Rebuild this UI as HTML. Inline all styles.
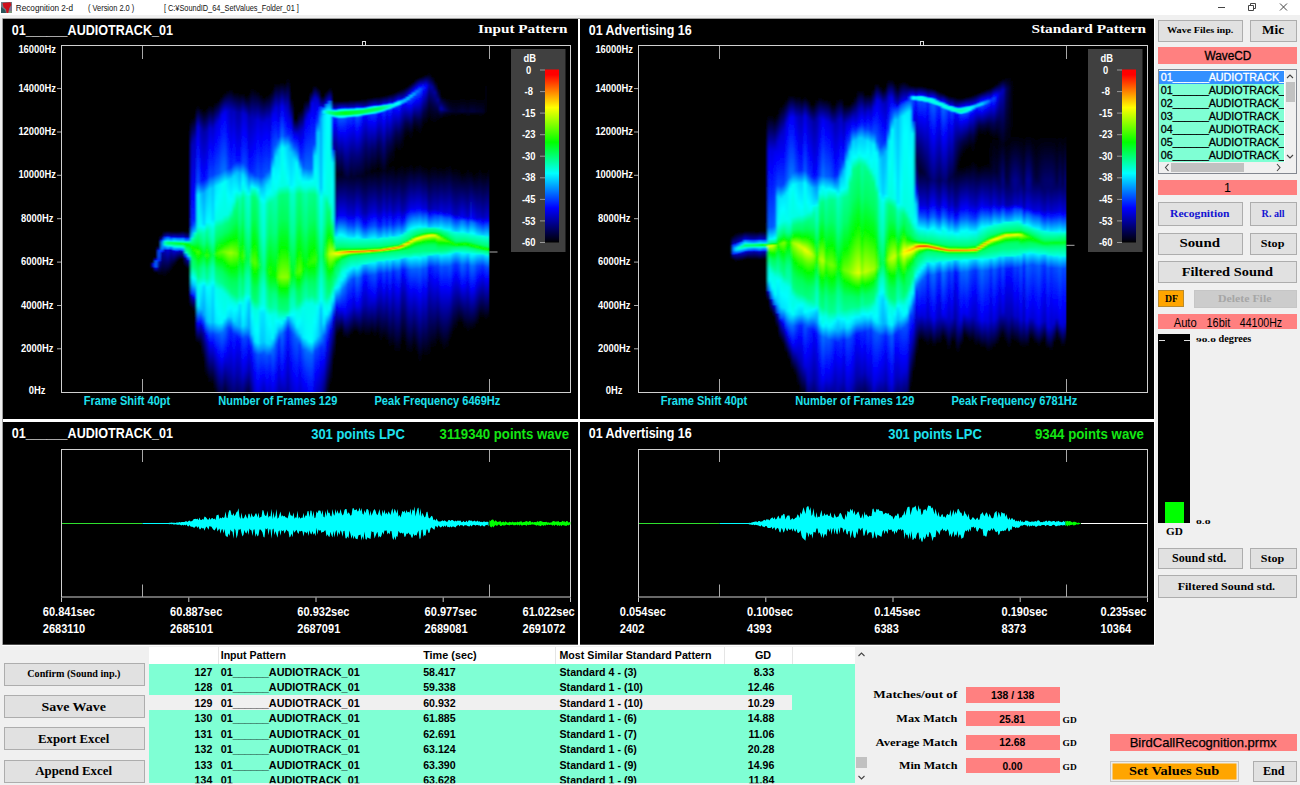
<!DOCTYPE html>
<html><head><meta charset="utf-8"><title>Recognition 2-d</title>
<style>
*{box-sizing:border-box;margin:0;padding:0}
html,body{width:1300px;height:785px;overflow:hidden;background:#f0f0f0}
body{position:relative;font-family:"Liberation Sans",sans-serif;color:#000}
div,span,svg{position:absolute}
.b{background:#e1e1e1;border:1px solid #adadad}
.p{background:#ff8080}
svg text{white-space:pre}
.tb{font-family:"Liberation Serif",serif;font-weight:bold}
.sb{font-weight:bold}
</style></head><body>
<div style="left:0;top:0;width:1300px;height:15px;background:#fff"></div>
<svg style="left:1px;top:2px" width="11" height="11" viewBox="0 0 11 11"><rect width="11" height="11" fill="#6e7f86"/><path d="M0 5L4 8L5 11H0Z" fill="#2b5559"/><path d="M11 3V11H7L8 6Z" fill="#7d7391"/><path d="M7 11H11V9L8 8.500Z" fill="#7f9a80"/><path d="M1.500 1L9.500 .3L10.300 3L8.300 6L7.200 11H5.600L5 7.500L2.500 5Z" fill="#cf0f1a"/></svg>
<svg style="left:1210px;top:0" width="90" height="15" viewBox="0 0 90 15" fill="none" stroke="#444" stroke-width="1"><path d="M8 7.5H15"/><path d="M38.5 5.5h5v5h-5z M40.5 5.5v-2h5v5h-2"/><path d="M70 3.5l7 7M77 3.5l-7 7"/></svg>
<svg style="left:0;top:0" width="1300" height="785" viewBox="0 0 1300 785" font-family="Liberation Sans,sans-serif">
<defs><linearGradient id="jet" x1="0" y1="0" x2="0" y2="1"><stop offset="0" stop-color="#f00"/><stop offset="0.03" stop-color="#f00"/><stop offset="0.22" stop-color="#ff0"/><stop offset="0.42" stop-color="#0f0"/><stop offset="0.6" stop-color="#0ff"/><stop offset="0.8" stop-color="#00f"/><stop offset="1" stop-color="#000"/></linearGradient>
<filter id="hb" x="-5%" y="-5%" width="110%" height="110%"><feGaussianBlur stdDeviation="1.1 0.4"/></filter><linearGradient id="a3" x1="0" y1="0" x2="0" y2="1"><stop offset="0.000" stop-color="#000"/><stop offset="0.624" stop-color="#000"/><stop offset="0.627" stop-color="#0000a1"/><stop offset="0.630" stop-color="#0000e0"/><stop offset="0.636" stop-color="#0000e0"/><stop offset="0.639" stop-color="#00009d"/><stop offset="0.642" stop-color="#000035"/><stop offset="0.645" stop-color="#000"/><stop offset="1.000" stop-color="#000"/></linearGradient><linearGradient id="a4" x1="0" y1="0" x2="0" y2="1"><stop offset="0.000" stop-color="#000"/><stop offset="0.607" stop-color="#000"/><stop offset="0.610" stop-color="#000016"/><stop offset="0.618" stop-color="#0000e4"/><stop offset="0.621" stop-color="#005eff"/><stop offset="0.639" stop-color="#005eff"/><stop offset="0.642" stop-color="#00d"/><stop offset="0.653" stop-color="#000021"/><stop offset="0.656" stop-color="#000"/><stop offset="1.000" stop-color="#000"/></linearGradient><linearGradient id="a5" x1="0" y1="0" x2="0" y2="1"><stop offset="0.000" stop-color="#000"/><stop offset="0.575" stop-color="#000"/><stop offset="0.578" stop-color="#000015"/><stop offset="0.587" stop-color="#0000a2"/><stop offset="0.590" stop-color="#0031ff"/><stop offset="0.595" stop-color="#004aff"/><stop offset="0.607" stop-color="#004aff"/><stop offset="0.621" stop-color="#002bff"/><stop offset="0.624" stop-color="#0000af"/><stop offset="0.662" stop-color="#000002"/><stop offset="1.000" stop-color="#000"/></linearGradient><linearGradient id="a6" x1="0" y1="0" x2="0" y2="1"><stop offset="0.000" stop-color="#000"/><stop offset="0.543" stop-color="#000"/><stop offset="0.546" stop-color="#000009"/><stop offset="0.558" stop-color="#000097"/><stop offset="0.561" stop-color="#0023ff"/><stop offset="0.566" stop-color="#006fff"/><stop offset="0.569" stop-color="#0082ff"/><stop offset="0.584" stop-color="#0082ff"/><stop offset="0.587" stop-color="#0078ff"/><stop offset="0.595" stop-color="#001bff"/><stop offset="0.598" stop-color="#00009d"/><stop offset="0.665" stop-color="#000"/><stop offset="1.000" stop-color="#000"/></linearGradient><linearGradient id="a7" x1="0" y1="0" x2="0" y2="1"><stop offset="0.000" stop-color="#000"/><stop offset="0.532" stop-color="#000"/><stop offset="0.535" stop-color="#000002"/><stop offset="0.549" stop-color="#000098"/><stop offset="0.552" stop-color="#0024ff"/><stop offset="0.561" stop-color="#00a3ff"/><stop offset="0.564" stop-color="#00f2ff"/><stop offset="0.566" stop-color="#00ffb5"/><stop offset="0.572" stop-color="#00ffb4"/><stop offset="0.575" stop-color="#00ffd2"/><stop offset="0.578" stop-color="#00c0ff"/><stop offset="0.587" stop-color="#04f"/><stop offset="0.590" stop-color="#0000b5"/><stop offset="0.668" stop-color="#000"/><stop offset="1.000" stop-color="#000"/></linearGradient><linearGradient id="a8" x1="0" y1="0" x2="0" y2="1"><stop offset="0.000" stop-color="#000"/><stop offset="0.532" stop-color="#000"/><stop offset="0.535" stop-color="#000009"/><stop offset="0.549" stop-color="#0000b9"/><stop offset="0.552" stop-color="#0053ff"/><stop offset="0.561" stop-color="#0cf"/><stop offset="0.564" stop-color="#00ffe5"/><stop offset="0.566" stop-color="#00ff90"/><stop offset="0.569" stop-color="#00ff73"/><stop offset="0.572" stop-color="#00ff7e"/><stop offset="0.575" stop-color="#00ffb2"/><stop offset="0.578" stop-color="#00eaff"/><stop offset="0.587" stop-color="#0071ff"/><stop offset="0.590" stop-color="#0000d7"/><stop offset="0.659" stop-color="#000002"/><stop offset="1.000" stop-color="#000"/></linearGradient><linearGradient id="a9" x1="0" y1="0" x2="0" y2="1"><stop offset="0.000" stop-color="#000"/><stop offset="0.535" stop-color="#000"/><stop offset="0.549" stop-color="#000093"/><stop offset="0.552" stop-color="#0000fa"/><stop offset="0.555" stop-color="#0047ff"/><stop offset="0.564" stop-color="#00d6ff"/><stop offset="0.566" stop-color="#0f9"/><stop offset="0.569" stop-color="#00ff5b"/><stop offset="0.572" stop-color="#00ff72"/><stop offset="0.578" stop-color="#00ffe0"/><stop offset="0.581" stop-color="#009fff"/><stop offset="0.587" stop-color="#0043ff"/><stop offset="0.590" stop-color="#0000b0"/><stop offset="0.650" stop-color="#000"/><stop offset="1.000" stop-color="#000"/></linearGradient><linearGradient id="a10" x1="0" y1="0" x2="0" y2="1"><stop offset="0.000" stop-color="#000"/><stop offset="0.535" stop-color="#000"/><stop offset="0.538" stop-color="#000017"/><stop offset="0.552" stop-color="#0000d7"/><stop offset="0.555" stop-color="#0079ff"/><stop offset="0.564" stop-color="#00f4ff"/><stop offset="0.566" stop-color="#00ffa0"/><stop offset="0.569" stop-color="#00ff5c"/><stop offset="0.572" stop-color="#00ff58"/><stop offset="0.578" stop-color="#00ffc5"/><stop offset="0.581" stop-color="#00e8ff"/><stop offset="0.590" stop-color="#006cff"/><stop offset="0.592" stop-color="#0000d6"/><stop offset="0.636" stop-color="#000"/><stop offset="1.000" stop-color="#000"/></linearGradient><linearGradient id="a11" x1="0" y1="0" x2="0" y2="1"><stop offset="0.000" stop-color="#000"/><stop offset="0.535" stop-color="#000"/><stop offset="0.538" stop-color="#000016"/><stop offset="0.552" stop-color="#0000c4"/><stop offset="0.555" stop-color="#0061ff"/><stop offset="0.564" stop-color="#00e1ff"/><stop offset="0.566" stop-color="#00ffa6"/><stop offset="0.569" stop-color="#00ff63"/><stop offset="0.572" stop-color="#00ff35"/><stop offset="0.575" stop-color="#00ff86"/><stop offset="0.581" stop-color="#00ffe3"/><stop offset="0.584" stop-color="#00bdff"/><stop offset="0.592" stop-color="#003fff"/><stop offset="0.595" stop-color="#0000b8"/><stop offset="0.624" stop-color="#000"/><stop offset="1.000" stop-color="#000"/></linearGradient><linearGradient id="a12" x1="0" y1="0" x2="0" y2="1"><stop offset="0.000" stop-color="#000"/><stop offset="0.535" stop-color="#000"/><stop offset="0.552" stop-color="#0000bf"/><stop offset="0.555" stop-color="#0059ff"/><stop offset="0.564" stop-color="#00d9ff"/><stop offset="0.566" stop-color="#00ffae"/><stop offset="0.569" stop-color="#00ff6f"/><stop offset="0.572" stop-color="#0f1"/><stop offset="0.575" stop-color="#00ff7e"/><stop offset="0.581" stop-color="#00ffde"/><stop offset="0.584" stop-color="#00b9ff"/><stop offset="0.590" stop-color="#005dff"/><stop offset="0.592" stop-color="#0000c2"/><stop offset="0.616" stop-color="#000008"/><stop offset="0.618" stop-color="#000"/><stop offset="1.000" stop-color="#000"/></linearGradient><linearGradient id="a13" x1="0" y1="0" x2="0" y2="1"><stop offset="0.000" stop-color="#000"/><stop offset="0.532" stop-color="#000"/><stop offset="0.535" stop-color="#00000b"/><stop offset="0.552" stop-color="#0000cd"/><stop offset="0.555" stop-color="#0069ff"/><stop offset="0.564" stop-color="#00e1ff"/><stop offset="0.566" stop-color="#00ffb5"/><stop offset="0.569" stop-color="#00ff78"/><stop offset="0.572" stop-color="#1aff00"/><stop offset="0.575" stop-color="#00ff73"/><stop offset="0.581" stop-color="#00ffd0"/><stop offset="0.584" stop-color="#00d5ff"/><stop offset="0.592" stop-color="#05f"/><stop offset="0.595" stop-color="#0000c0"/><stop offset="0.616" stop-color="#00000c"/><stop offset="0.618" stop-color="#000"/><stop offset="1.000" stop-color="#000"/></linearGradient><linearGradient id="a14" x1="0" y1="0" x2="0" y2="1"><stop offset="0.000" stop-color="#000"/><stop offset="0.535" stop-color="#000"/><stop offset="0.552" stop-color="#000091"/><stop offset="0.555" stop-color="#001aff"/><stop offset="0.564" stop-color="#00a2ff"/><stop offset="0.566" stop-color="#00ffc1"/><stop offset="0.569" stop-color="#00ff7f"/><stop offset="0.572" stop-color="#00ff1c"/><stop offset="0.575" stop-color="#00ff03"/><stop offset="0.584" stop-color="#00ff61"/><stop offset="0.592" stop-color="#00ff96"/><stop offset="0.598" stop-color="#00ffdb"/><stop offset="0.601" stop-color="#09f"/><stop offset="0.610" stop-color="#001bff"/><stop offset="0.613" stop-color="#000096"/><stop offset="0.639" stop-color="#000"/><stop offset="1.000" stop-color="#000"/></linearGradient><linearGradient id="a15" x1="0" y1="0" x2="0" y2="1"><stop offset="0.000" stop-color="#000"/><stop offset="0.535" stop-color="#000"/><stop offset="0.552" stop-color="#0000a1"/><stop offset="0.555" stop-color="#002fff"/><stop offset="0.564" stop-color="#00b3ff"/><stop offset="0.566" stop-color="#00ffc4"/><stop offset="0.572" stop-color="#00ff31"/><stop offset="0.575" stop-color="#00ff04"/><stop offset="0.587" stop-color="#00ff53"/><stop offset="0.601" stop-color="#00ff87"/><stop offset="0.607" stop-color="#00ffd4"/><stop offset="0.610" stop-color="#00b5ff"/><stop offset="0.618" stop-color="#003fff"/><stop offset="0.621" stop-color="#0000af"/><stop offset="0.645" stop-color="#000009"/><stop offset="0.647" stop-color="#000"/><stop offset="1.000" stop-color="#000"/></linearGradient><linearGradient id="a16" x1="0" y1="0" x2="0" y2="1"><stop offset="0.000" stop-color="#000"/><stop offset="0.208" stop-color="#000"/><stop offset="0.286" stop-color="#0000ba"/><stop offset="0.434" stop-color="#0001ff"/><stop offset="0.517" stop-color="#0029ff"/><stop offset="0.552" stop-color="#00d4ff"/><stop offset="0.555" stop-color="#00ffd1"/><stop offset="0.572" stop-color="#00ff5f"/><stop offset="0.581" stop-color="#09ff00"/><stop offset="0.584" stop-color="#1f0"/><stop offset="0.587" stop-color="#04ff00"/><stop offset="0.618" stop-color="#00ff68"/><stop offset="0.636" stop-color="#00ff7f"/><stop offset="0.668" stop-color="#00fffb"/><stop offset="0.685" stop-color="#00caff"/><stop offset="0.717" stop-color="#002dff"/><stop offset="0.720" stop-color="#0002ff"/><stop offset="0.723" stop-color="#0000cb"/><stop offset="0.725" stop-color="#0000af"/><stop offset="0.740" stop-color="#000060"/><stop offset="0.757" stop-color="#000003"/><stop offset="0.760" stop-color="#000"/><stop offset="1.000" stop-color="#000"/></linearGradient><linearGradient id="a17" x1="0" y1="0" x2="0" y2="1"><stop offset="0.000" stop-color="#000"/><stop offset="0.202" stop-color="#000"/><stop offset="0.269" stop-color="#0000b5"/><stop offset="0.434" stop-color="#00f"/><stop offset="0.503" stop-color="#0021ff"/><stop offset="0.538" stop-color="#00cdff"/><stop offset="0.540" stop-color="#00ffd6"/><stop offset="0.561" stop-color="#00ff74"/><stop offset="0.572" stop-color="#00ff4f"/><stop offset="0.584" stop-color="#03ff00"/><stop offset="0.590" stop-color="#2aff00"/><stop offset="0.598" stop-color="#0f0"/><stop offset="0.621" stop-color="#00ff53"/><stop offset="0.642" stop-color="#00ff74"/><stop offset="0.673" stop-color="#00fff5"/><stop offset="0.691" stop-color="#00d2ff"/><stop offset="0.723" stop-color="#002cff"/><stop offset="0.728" stop-color="#0000f4"/><stop offset="0.734" stop-color="#0000b1"/><stop offset="0.769" stop-color="#000"/><stop offset="1.000" stop-color="#000"/></linearGradient><linearGradient id="a18" x1="0" y1="0" x2="0" y2="1"><stop offset="0.000" stop-color="#000"/><stop offset="0.173" stop-color="#000"/><stop offset="0.234" stop-color="#0000dc"/><stop offset="0.283" stop-color="#0002ff"/><stop offset="0.393" stop-color="#0052ff"/><stop offset="0.431" stop-color="#00f6ff"/><stop offset="0.523" stop-color="#00ffe2"/><stop offset="0.549" stop-color="#00ff7b"/><stop offset="0.566" stop-color="#00ff56"/><stop offset="0.584" stop-color="#00ff03"/><stop offset="0.587" stop-color="#0eff00"/><stop offset="0.595" stop-color="#48ff00"/><stop offset="0.613" stop-color="#00ff03"/><stop offset="0.642" stop-color="#00ff5c"/><stop offset="0.665" stop-color="#00ff7b"/><stop offset="0.691" stop-color="#00ffe1"/><stop offset="0.737" stop-color="#00fffe"/><stop offset="0.751" stop-color="#00f3ff"/><stop offset="0.803" stop-color="#0002ff"/><stop offset="0.858" stop-color="#000"/><stop offset="1.000" stop-color="#000"/></linearGradient><linearGradient id="a19" x1="0" y1="0" x2="0" y2="1"><stop offset="0.000" stop-color="#000"/><stop offset="0.179" stop-color="#000001"/><stop offset="0.240" stop-color="#0000af"/><stop offset="0.355" stop-color="#00f"/><stop offset="0.390" stop-color="#0019ff"/><stop offset="0.428" stop-color="#00bdff"/><stop offset="0.520" stop-color="#00fcff"/><stop offset="0.543" stop-color="#00ffa2"/><stop offset="0.572" stop-color="#00ff65"/><stop offset="0.595" stop-color="#02ff00"/><stop offset="0.598" stop-color="#12ff00"/><stop offset="0.604" stop-color="#00ff03"/><stop offset="0.642" stop-color="#00ff7e"/><stop offset="0.668" stop-color="#00ffa3"/><stop offset="0.688" stop-color="#00fff1"/><stop offset="0.691" stop-color="#00fcff"/><stop offset="0.760" stop-color="#00bcff"/><stop offset="0.798" stop-color="#0008ff"/><stop offset="0.801" stop-color="#0000f4"/><stop offset="0.812" stop-color="#0000ad"/><stop offset="0.867" stop-color="#000"/><stop offset="1.000" stop-color="#000"/></linearGradient><linearGradient id="a20" x1="0" y1="0" x2="0" y2="1"><stop offset="0.000" stop-color="#000"/><stop offset="0.188" stop-color="#000"/><stop offset="0.249" stop-color="#0000a4"/><stop offset="0.373" stop-color="#0001ff"/><stop offset="0.387" stop-color="#000dff"/><stop offset="0.425" stop-color="#00a4ff"/><stop offset="0.514" stop-color="#00d4ff"/><stop offset="0.523" stop-color="#00fbff"/><stop offset="0.540" stop-color="#00ffbc"/><stop offset="0.572" stop-color="#00ff87"/><stop offset="0.601" stop-color="#00ff1e"/><stop offset="0.639" stop-color="#00ff93"/><stop offset="0.671" stop-color="#00ffc2"/><stop offset="0.682" stop-color="#00ffe5"/><stop offset="0.685" stop-color="#00fffe"/><stop offset="0.697" stop-color="#00d3ff"/><stop offset="0.777" stop-color="#00a3ff"/><stop offset="0.815" stop-color="#0000fe"/><stop offset="0.832" stop-color="#0000a2"/><stop offset="0.905" stop-color="#000002"/><stop offset="1.000" stop-color="#000"/></linearGradient><linearGradient id="a21" x1="0" y1="0" x2="0" y2="1"><stop offset="0.000" stop-color="#000"/><stop offset="0.179" stop-color="#000"/><stop offset="0.246" stop-color="#0000b1"/><stop offset="0.350" stop-color="#0002ff"/><stop offset="0.382" stop-color="#001bff"/><stop offset="0.419" stop-color="#00c2ff"/><stop offset="0.509" stop-color="#00fcff"/><stop offset="0.535" stop-color="#00ff9b"/><stop offset="0.564" stop-color="#00ff6a"/><stop offset="0.595" stop-color="#09ff00"/><stop offset="0.604" stop-color="#3f0"/><stop offset="0.616" stop-color="#00ff05"/><stop offset="0.645" stop-color="#00ff6c"/><stop offset="0.671" stop-color="#00ff94"/><stop offset="0.694" stop-color="#0fe"/><stop offset="0.697" stop-color="#00feff"/><stop offset="0.795" stop-color="#00c1ff"/><stop offset="0.838" stop-color="#0000fe"/><stop offset="0.861" stop-color="#0000b0"/><stop offset="0.957" stop-color="#000003"/><stop offset="1.000" stop-color="#000"/></linearGradient><linearGradient id="a22" x1="0" y1="0" x2="0" y2="1"><stop offset="0.000" stop-color="#000"/><stop offset="0.171" stop-color="#000001"/><stop offset="0.237" stop-color="#0000d2"/><stop offset="0.289" stop-color="#00f"/><stop offset="0.376" stop-color="#0048ff"/><stop offset="0.413" stop-color="#00d5ff"/><stop offset="0.509" stop-color="#00fffe"/><stop offset="0.532" stop-color="#00ffc0"/><stop offset="0.549" stop-color="#00ffb1"/><stop offset="0.569" stop-color="#00ff8a"/><stop offset="0.604" stop-color="#00ff1d"/><stop offset="0.639" stop-color="#00ff90"/><stop offset="0.671" stop-color="#00ffbf"/><stop offset="0.694" stop-color="#00fffb"/><stop offset="0.798" stop-color="#00d4ff"/><stop offset="0.832" stop-color="#0049ff"/><stop offset="0.858" stop-color="#0002ff"/><stop offset="0.974" stop-color="#000002"/><stop offset="1.000" stop-color="#000"/></linearGradient><linearGradient id="a23" x1="0" y1="0" x2="0" y2="1"><stop offset="0.000" stop-color="#000"/><stop offset="0.173" stop-color="#000"/><stop offset="0.240" stop-color="#0000c9"/><stop offset="0.301" stop-color="#00f"/><stop offset="0.373" stop-color="#003eff"/><stop offset="0.390" stop-color="#0086ff"/><stop offset="0.410" stop-color="#00c0ff"/><stop offset="0.500" stop-color="#00dfff"/><stop offset="0.514" stop-color="#00feff"/><stop offset="0.529" stop-color="#00ffdf"/><stop offset="0.566" stop-color="#00ffb5"/><stop offset="0.604" stop-color="#00ff58"/><stop offset="0.639" stop-color="#00ffb7"/><stop offset="0.673" stop-color="#00ffe2"/><stop offset="0.685" stop-color="#0ff"/><stop offset="0.699" stop-color="#00dfff"/><stop offset="0.798" stop-color="#00bdff"/><stop offset="0.818" stop-color="#0080ff"/><stop offset="0.832" stop-color="#003eff"/><stop offset="0.858" stop-color="#00f"/><stop offset="0.977" stop-color="#000"/><stop offset="1.000" stop-color="#000"/></linearGradient><linearGradient id="a24" x1="0" y1="0" x2="0" y2="1"><stop offset="0.000" stop-color="#000"/><stop offset="0.162" stop-color="#000"/><stop offset="0.228" stop-color="#0000db"/><stop offset="0.272" stop-color="#00f"/><stop offset="0.370" stop-color="#0051ff"/><stop offset="0.405" stop-color="#00e7ff"/><stop offset="0.457" stop-color="#0ff"/><stop offset="0.503" stop-color="#00ffe6"/><stop offset="0.523" stop-color="#00ffa1"/><stop offset="0.561" stop-color="#00ff64"/><stop offset="0.592" stop-color="#06ff00"/><stop offset="0.601" stop-color="#2aff00"/><stop offset="0.613" stop-color="#00ff02"/><stop offset="0.642" stop-color="#00ff65"/><stop offset="0.676" stop-color="#00ff9d"/><stop offset="0.702" stop-color="#0fe"/><stop offset="0.749" stop-color="#00feff"/><stop offset="0.798" stop-color="#00e9ff"/><stop offset="0.835" stop-color="#004eff"/><stop offset="0.876" stop-color="#0003ff"/><stop offset="1.000" stop-color="#00000a"/></linearGradient><linearGradient id="a25" x1="0" y1="0" x2="0" y2="1"><stop offset="0.000" stop-color="#000"/><stop offset="0.156" stop-color="#000"/><stop offset="0.217" stop-color="#0000e2"/><stop offset="0.254" stop-color="#0001ff"/><stop offset="0.367" stop-color="#0059ff"/><stop offset="0.402" stop-color="#00f2ff"/><stop offset="0.431" stop-color="#00fffe"/><stop offset="0.500" stop-color="#00ffe2"/><stop offset="0.523" stop-color="#00ff8e"/><stop offset="0.549" stop-color="#00ff69"/><stop offset="0.584" stop-color="#0aff00"/><stop offset="0.598" stop-color="#4cff00"/><stop offset="0.618" stop-color="#00ff05"/><stop offset="0.650" stop-color="#0f6"/><stop offset="0.682" stop-color="#00ff94"/><stop offset="0.705" stop-color="#00ffe6"/><stop offset="0.775" stop-color="#0ff"/><stop offset="0.801" stop-color="#00f1ff"/><stop offset="0.835" stop-color="#0059ff"/><stop offset="0.893" stop-color="#0001ff"/><stop offset="1.000" stop-color="#000043"/></linearGradient><linearGradient id="a26" x1="0" y1="0" x2="0" y2="1"><stop offset="0.000" stop-color="#000"/><stop offset="0.145" stop-color="#000"/><stop offset="0.199" stop-color="#0000ec"/><stop offset="0.220" stop-color="#00f"/><stop offset="0.364" stop-color="#006fff"/><stop offset="0.399" stop-color="#00fffa"/><stop offset="0.497" stop-color="#00ffe3"/><stop offset="0.520" stop-color="#00ff8d"/><stop offset="0.546" stop-color="#0f6"/><stop offset="0.578" stop-color="#08ff00"/><stop offset="0.595" stop-color="#5bff00"/><stop offset="0.618" stop-color="#00ff01"/><stop offset="0.653" stop-color="#00ff64"/><stop offset="0.685" stop-color="#00ff8d"/><stop offset="0.708" stop-color="#00ffe3"/><stop offset="0.798" stop-color="#00fcff"/><stop offset="0.829" stop-color="#0071ff"/><stop offset="0.905" stop-color="#0001ff"/><stop offset="1.000" stop-color="#000050"/></linearGradient><linearGradient id="a27" x1="0" y1="0" x2="0" y2="1"><stop offset="0.000" stop-color="#000"/><stop offset="0.136" stop-color="#000003"/><stop offset="0.191" stop-color="#0000ed"/><stop offset="0.208" stop-color="#00f"/><stop offset="0.358" stop-color="#0070ff"/><stop offset="0.393" stop-color="#00fff9"/><stop offset="0.439" stop-color="#00ffe6"/><stop offset="0.488" stop-color="#00ffe6"/><stop offset="0.514" stop-color="#00ff87"/><stop offset="0.540" stop-color="#00ff60"/><stop offset="0.572" stop-color="#07ff00"/><stop offset="0.595" stop-color="#73ff00"/><stop offset="0.627" stop-color="#0f0"/><stop offset="0.662" stop-color="#00ff5f"/><stop offset="0.691" stop-color="#00ff81"/><stop offset="0.717" stop-color="#00ffe3"/><stop offset="0.754" stop-color="#00ffe7"/><stop offset="0.786" stop-color="#00fbff"/><stop offset="0.818" stop-color="#006fff"/><stop offset="0.890" stop-color="#0002ff"/><stop offset="1.000" stop-color="#000024"/></linearGradient><linearGradient id="a28" x1="0" y1="0" x2="0" y2="1"><stop offset="0.000" stop-color="#000"/><stop offset="0.127" stop-color="#000"/><stop offset="0.188" stop-color="#0000d0"/><stop offset="0.257" stop-color="#0001ff"/><stop offset="0.355" stop-color="#04f"/><stop offset="0.390" stop-color="#00e8ff"/><stop offset="0.431" stop-color="#00fffe"/><stop offset="0.486" stop-color="#00ffe2"/><stop offset="0.512" stop-color="#00ff7b"/><stop offset="0.538" stop-color="#00ff58"/><stop offset="0.566" stop-color="#01ff00"/><stop offset="0.598" stop-color="#8bff00"/><stop offset="0.636" stop-color="#00ff03"/><stop offset="0.671" stop-color="#00ff5b"/><stop offset="0.699" stop-color="#00ff7b"/><stop offset="0.725" stop-color="#00ffdf"/><stop offset="0.760" stop-color="#00fdff"/><stop offset="0.780" stop-color="#00e7ff"/><stop offset="0.815" stop-color="#04f"/><stop offset="0.873" stop-color="#0002ff"/><stop offset="0.916" stop-color="#0000cf"/><stop offset="1.000" stop-color="#00004d"/></linearGradient><linearGradient id="a29" x1="0" y1="0" x2="0" y2="1"><stop offset="0.000" stop-color="#000"/><stop offset="0.124" stop-color="#000001"/><stop offset="0.185" stop-color="#0000b6"/><stop offset="0.298" stop-color="#00f"/><stop offset="0.350" stop-color="#0023ff"/><stop offset="0.384" stop-color="#00d2ff"/><stop offset="0.442" stop-color="#0ff"/><stop offset="0.474" stop-color="#00ffe1"/><stop offset="0.500" stop-color="#00ff78"/><stop offset="0.529" stop-color="#0f5"/><stop offset="0.561" stop-color="#01ff00"/><stop offset="0.598" stop-color="#9f0"/><stop offset="0.642" stop-color="#0f0"/><stop offset="0.676" stop-color="#00ff54"/><stop offset="0.711" stop-color="#00ff7d"/><stop offset="0.734" stop-color="#00ffdb"/><stop offset="0.754" stop-color="#00fdff"/><stop offset="0.783" stop-color="#00d6ff"/><stop offset="0.821" stop-color="#02f"/><stop offset="0.858" stop-color="#0000fe"/><stop offset="0.936" stop-color="#0000b7"/><stop offset="1.000" stop-color="#000068"/></linearGradient><linearGradient id="a30" x1="0" y1="0" x2="0" y2="1"><stop offset="0.000" stop-color="#000"/><stop offset="0.133" stop-color="#000001"/><stop offset="0.191" stop-color="#0000c1"/><stop offset="0.277" stop-color="#0001ff"/><stop offset="0.341" stop-color="#0030ff"/><stop offset="0.376" stop-color="#00d8ff"/><stop offset="0.422" stop-color="#0ff"/><stop offset="0.451" stop-color="#00ffe3"/><stop offset="0.477" stop-color="#00ff7d"/><stop offset="0.514" stop-color="#00ff5a"/><stop offset="0.558" stop-color="#02ff00"/><stop offset="0.598" stop-color="#80ff00"/><stop offset="0.642" stop-color="#00ff03"/><stop offset="0.682" stop-color="#00ff5c"/><stop offset="0.717" stop-color="#00ff7d"/><stop offset="0.743" stop-color="#00ffe4"/><stop offset="0.763" stop-color="#00fffe"/><stop offset="0.795" stop-color="#0df"/><stop offset="0.832" stop-color="#0030ff"/><stop offset="0.882" stop-color="#00f"/><stop offset="0.948" stop-color="#0000bf"/><stop offset="1.000" stop-color="#000078"/></linearGradient><linearGradient id="a31" x1="0" y1="0" x2="0" y2="1"><stop offset="0.000" stop-color="#000"/><stop offset="0.133" stop-color="#000"/><stop offset="0.191" stop-color="#0000a6"/><stop offset="0.312" stop-color="#00f"/><stop offset="0.332" stop-color="#0012ff"/><stop offset="0.367" stop-color="#00c1ff"/><stop offset="0.419" stop-color="#00fffc"/><stop offset="0.454" stop-color="#00ff81"/><stop offset="0.500" stop-color="#00ff5f"/><stop offset="0.555" stop-color="#0f0"/><stop offset="0.601" stop-color="#71ff00"/><stop offset="0.639" stop-color="#01ff00"/><stop offset="0.682" stop-color="#00ff5b"/><stop offset="0.723" stop-color="#00ff81"/><stop offset="0.751" stop-color="#00fff1"/><stop offset="0.760" stop-color="#00fcff"/><stop offset="0.806" stop-color="#00bdff"/><stop offset="0.841" stop-color="#000fff"/><stop offset="0.855" stop-color="#00f"/><stop offset="0.948" stop-color="#0000a7"/><stop offset="1.000" stop-color="#000063"/></linearGradient><linearGradient id="a32" x1="0" y1="0" x2="0" y2="1"><stop offset="0.000" stop-color="#000"/><stop offset="0.136" stop-color="#000"/><stop offset="0.194" stop-color="#0000a9"/><stop offset="0.309" stop-color="#00f"/><stop offset="0.332" stop-color="#0012ff"/><stop offset="0.367" stop-color="#00a9ff"/><stop offset="0.416" stop-color="#00e0ff"/><stop offset="0.425" stop-color="#00fff2"/><stop offset="0.442" stop-color="#00ffb2"/><stop offset="0.514" stop-color="#00ff81"/><stop offset="0.601" stop-color="#04ff00"/><stop offset="0.610" stop-color="#00ff05"/><stop offset="0.673" stop-color="#00ff86"/><stop offset="0.723" stop-color="#00ffb0"/><stop offset="0.737" stop-color="#00ffde"/><stop offset="0.743" stop-color="#00fdff"/><stop offset="0.749" stop-color="#00e1ff"/><stop offset="0.812" stop-color="#00abff"/><stop offset="0.847" stop-color="#0012ff"/><stop offset="0.858" stop-color="#0006ff"/><stop offset="0.957" stop-color="#0000a9"/><stop offset="1.000" stop-color="#00006f"/></linearGradient><linearGradient id="a33" x1="0" y1="0" x2="0" y2="1"><stop offset="0.000" stop-color="#000"/><stop offset="0.136" stop-color="#000"/><stop offset="0.194" stop-color="#0000d1"/><stop offset="0.251" stop-color="#00f"/><stop offset="0.338" stop-color="#0045ff"/><stop offset="0.373" stop-color="#00e1ff"/><stop offset="0.396" stop-color="#00fffd"/><stop offset="0.413" stop-color="#00ffe9"/><stop offset="0.439" stop-color="#00ff89"/><stop offset="0.500" stop-color="#00ff64"/><stop offset="0.575" stop-color="#04ff00"/><stop offset="0.607" stop-color="#41ff00"/><stop offset="0.630" stop-color="#03ff00"/><stop offset="0.676" stop-color="#00ff63"/><stop offset="0.717" stop-color="#00ff8b"/><stop offset="0.743" stop-color="#00ffea"/><stop offset="0.775" stop-color="#0ff"/><stop offset="0.809" stop-color="#00e7ff"/><stop offset="0.847" stop-color="#0043ff"/><stop offset="0.910" stop-color="#0000fd"/><stop offset="0.951" stop-color="#0000d0"/><stop offset="1.000" stop-color="#007"/></linearGradient><linearGradient id="a34" x1="0" y1="0" x2="0" y2="1"><stop offset="0.000" stop-color="#000"/><stop offset="0.147" stop-color="#000002"/><stop offset="0.199" stop-color="#0000ce"/><stop offset="0.260" stop-color="#0002ff"/><stop offset="0.347" stop-color="#0046ff"/><stop offset="0.382" stop-color="#00cbff"/><stop offset="0.416" stop-color="#00fffc"/><stop offset="0.436" stop-color="#00ffc6"/><stop offset="0.520" stop-color="#00ff9f"/><stop offset="0.613" stop-color="#00ff3b"/><stop offset="0.662" stop-color="#00ff9c"/><stop offset="0.711" stop-color="#00ffca"/><stop offset="0.731" stop-color="#0ff"/><stop offset="0.806" stop-color="#00cfff"/><stop offset="0.827" stop-color="#008aff"/><stop offset="0.841" stop-color="#0047ff"/><stop offset="0.899" stop-color="#0002ff"/><stop offset="0.939" stop-color="#0000cf"/><stop offset="1.000" stop-color="#00004d"/></linearGradient><linearGradient id="a35" x1="0" y1="0" x2="0" y2="1"><stop offset="0.000" stop-color="#000"/><stop offset="0.139" stop-color="#000"/><stop offset="0.208" stop-color="#0000af"/><stop offset="0.324" stop-color="#0001ff"/><stop offset="0.355" stop-color="#0019ff"/><stop offset="0.390" stop-color="#009bff"/><stop offset="0.428" stop-color="#00fffa"/><stop offset="0.436" stop-color="#00ffd8"/><stop offset="0.520" stop-color="#00ffb6"/><stop offset="0.616" stop-color="#00ff5d"/><stop offset="0.671" stop-color="#00ffb6"/><stop offset="0.717" stop-color="#00ffd8"/><stop offset="0.725" stop-color="#00fff6"/><stop offset="0.746" stop-color="#00c6ff"/><stop offset="0.815" stop-color="#00a0ff"/><stop offset="0.835" stop-color="#005dff"/><stop offset="0.850" stop-color="#001bff"/><stop offset="0.870" stop-color="#0001ff"/><stop offset="0.939" stop-color="#0000ad"/><stop offset="1.000" stop-color="#00003b"/></linearGradient><linearGradient id="a36" x1="0" y1="0" x2="0" y2="1"><stop offset="0.000" stop-color="#000"/><stop offset="0.121" stop-color="#000"/><stop offset="0.205" stop-color="#0000b7"/><stop offset="0.312" stop-color="#0001ff"/><stop offset="0.364" stop-color="#0028ff"/><stop offset="0.405" stop-color="#00f8ff"/><stop offset="0.408" stop-color="#00fff2"/><stop offset="0.436" stop-color="#00ff7c"/><stop offset="0.503" stop-color="#00ff5a"/><stop offset="0.581" stop-color="#03ff00"/><stop offset="0.621" stop-color="#45ff00"/><stop offset="0.645" stop-color="#03ff00"/><stop offset="0.691" stop-color="#00ff5c"/><stop offset="0.728" stop-color="#00ff7e"/><stop offset="0.754" stop-color="#00ffe4"/><stop offset="0.780" stop-color="#00feff"/><stop offset="0.832" stop-color="#00d4ff"/><stop offset="0.870" stop-color="#0023ff"/><stop offset="0.902" stop-color="#00f"/><stop offset="0.968" stop-color="#0000b6"/><stop offset="1.000" stop-color="#000080"/></linearGradient><linearGradient id="a37" x1="0" y1="0" x2="0" y2="1"><stop offset="0.000" stop-color="#000"/><stop offset="0.124" stop-color="#000"/><stop offset="0.214" stop-color="#0000c7"/><stop offset="0.292" stop-color="#00f"/><stop offset="0.373" stop-color="#003cff"/><stop offset="0.408" stop-color="#0ef"/><stop offset="0.410" stop-color="#00fff0"/><stop offset="0.413" stop-color="#00ffd7"/><stop offset="0.439" stop-color="#00ff70"/><stop offset="0.500" stop-color="#00ff52"/><stop offset="0.572" stop-color="#01ff00"/><stop offset="0.627" stop-color="#58ff00"/><stop offset="0.659" stop-color="#0f0"/><stop offset="0.699" stop-color="#00ff50"/><stop offset="0.737" stop-color="#00ff71"/><stop offset="0.763" stop-color="#0fd"/><stop offset="0.818" stop-color="#00fdff"/><stop offset="0.853" stop-color="#00e8ff"/><stop offset="0.890" stop-color="#0037ff"/><stop offset="0.945" stop-color="#0001ff"/><stop offset="1.000" stop-color="#0000cb"/></linearGradient><linearGradient id="a38" x1="0" y1="0" x2="0" y2="1"><stop offset="0.000" stop-color="#000"/><stop offset="0.130" stop-color="#000"/><stop offset="0.214" stop-color="#0000d9"/><stop offset="0.263" stop-color="#00f"/><stop offset="0.376" stop-color="#0052ff"/><stop offset="0.416" stop-color="#00fff8"/><stop offset="0.448" stop-color="#00ff8c"/><stop offset="0.523" stop-color="#00ff64"/><stop offset="0.607" stop-color="#01ff00"/><stop offset="0.633" stop-color="#2aff00"/><stop offset="0.647" stop-color="#03ff00"/><stop offset="0.697" stop-color="#00ff64"/><stop offset="0.740" stop-color="#00ff8c"/><stop offset="0.766" stop-color="#00ffe6"/><stop offset="0.824" stop-color="#0ff"/><stop offset="0.858" stop-color="#00efff"/><stop offset="0.893" stop-color="#0052ff"/><stop offset="0.971" stop-color="#0002ff"/><stop offset="1.000" stop-color="#0000e3"/></linearGradient><linearGradient id="a39" x1="0" y1="0" x2="0" y2="1"><stop offset="0.000" stop-color="#000"/><stop offset="0.139" stop-color="#000"/><stop offset="0.220" stop-color="#0000d1"/><stop offset="0.283" stop-color="#00f"/><stop offset="0.379" stop-color="#0045ff"/><stop offset="0.413" stop-color="#00c3ff"/><stop offset="0.442" stop-color="#00fff8"/><stop offset="0.457" stop-color="#00ffd7"/><stop offset="0.543" stop-color="#00ffb3"/><stop offset="0.639" stop-color="#00ff5a"/><stop offset="0.688" stop-color="#00ffab"/><stop offset="0.746" stop-color="#00ffda"/><stop offset="0.760" stop-color="#00fffb"/><stop offset="0.772" stop-color="#00e8ff"/><stop offset="0.858" stop-color="#00c8ff"/><stop offset="0.879" stop-color="#008aff"/><stop offset="0.893" stop-color="#0047ff"/><stop offset="0.957" stop-color="#00f"/><stop offset="1.000" stop-color="#0000ce"/></linearGradient><linearGradient id="a40" x1="0" y1="0" x2="0" y2="1"><stop offset="0.000" stop-color="#000"/><stop offset="0.147" stop-color="#000"/><stop offset="0.223" stop-color="#0000dc"/><stop offset="0.269" stop-color="#0002ff"/><stop offset="0.376" stop-color="#0053ff"/><stop offset="0.390" stop-color="#0095ff"/><stop offset="0.410" stop-color="#00c7ff"/><stop offset="0.448" stop-color="#00fffe"/><stop offset="0.460" stop-color="#00ffec"/><stop offset="0.549" stop-color="#00ffd6"/><stop offset="0.645" stop-color="#00ff8d"/><stop offset="0.699" stop-color="#00ffd8"/><stop offset="0.746" stop-color="#00ffec"/><stop offset="0.757" stop-color="#00fffd"/><stop offset="0.775" stop-color="#00e3ff"/><stop offset="0.853" stop-color="#00caff"/><stop offset="0.873" stop-color="#0098ff"/><stop offset="0.887" stop-color="#0056ff"/><stop offset="0.951" stop-color="#0002ff"/><stop offset="1.000" stop-color="#0000b0"/></linearGradient><linearGradient id="a41" x1="0" y1="0" x2="0" y2="1"><stop offset="0.000" stop-color="#000"/><stop offset="0.142" stop-color="#000"/><stop offset="0.214" stop-color="#0000d6"/><stop offset="0.260" stop-color="#00f"/><stop offset="0.364" stop-color="#0051ff"/><stop offset="0.402" stop-color="#00e2ff"/><stop offset="0.428" stop-color="#00fffd"/><stop offset="0.457" stop-color="#00ffb4"/><stop offset="0.546" stop-color="#00ff8a"/><stop offset="0.647" stop-color="#00ff1e"/><stop offset="0.705" stop-color="#00ff8d"/><stop offset="0.751" stop-color="#00ffb4"/><stop offset="0.777" stop-color="#00fff9"/><stop offset="0.858" stop-color="#00e1ff"/><stop offset="0.896" stop-color="#0052ff"/><stop offset="0.968" stop-color="#00f"/><stop offset="1.000" stop-color="#0000da"/></linearGradient><linearGradient id="a42" x1="0" y1="0" x2="0" y2="1"><stop offset="0.000" stop-color="#000"/><stop offset="0.136" stop-color="#000"/><stop offset="0.211" stop-color="#0000ce"/><stop offset="0.275" stop-color="#0001ff"/><stop offset="0.355" stop-color="#0041ff"/><stop offset="0.390" stop-color="#00dcff"/><stop offset="0.419" stop-color="#00fffc"/><stop offset="0.431" stop-color="#00ffe9"/><stop offset="0.454" stop-color="#00ff95"/><stop offset="0.540" stop-color="#00ff68"/><stop offset="0.633" stop-color="#01ff00"/><stop offset="0.653" stop-color="#1fff00"/><stop offset="0.665" stop-color="#00ff02"/><stop offset="0.711" stop-color="#00ff68"/><stop offset="0.754" stop-color="#00ff92"/><stop offset="0.780" stop-color="#00ffef"/><stop offset="0.806" stop-color="#0ff"/><stop offset="0.861" stop-color="#00dbff"/><stop offset="0.896" stop-color="#0040ff"/><stop offset="0.954" stop-color="#0001ff"/><stop offset="1.000" stop-color="#0000cd"/></linearGradient><linearGradient id="a43" x1="0" y1="0" x2="0" y2="1"><stop offset="0.000" stop-color="#000"/><stop offset="0.127" stop-color="#000003"/><stop offset="0.197" stop-color="#0000ea"/><stop offset="0.214" stop-color="#0000fe"/><stop offset="0.321" stop-color="#0069ff"/><stop offset="0.355" stop-color="#00f4ff"/><stop offset="0.370" stop-color="#0ff"/><stop offset="0.428" stop-color="#00ffe6"/><stop offset="0.448" stop-color="#00ffa7"/><stop offset="0.543" stop-color="#00ff79"/><stop offset="0.653" stop-color="#02ff00"/><stop offset="0.662" stop-color="#0f0"/><stop offset="0.717" stop-color="#00ff81"/><stop offset="0.757" stop-color="#00ffa9"/><stop offset="0.777" stop-color="#00ffe6"/><stop offset="0.844" stop-color="#00f6ff"/><stop offset="0.879" stop-color="#006aff"/><stop offset="0.977" stop-color="#00f"/><stop offset="1.000" stop-color="#0000e1"/></linearGradient><linearGradient id="a44" x1="0" y1="0" x2="0" y2="1"><stop offset="0.000" stop-color="#000"/><stop offset="0.107" stop-color="#000"/><stop offset="0.179" stop-color="#0000db"/><stop offset="0.211" stop-color="#0001ff"/><stop offset="0.286" stop-color="#0057ff"/><stop offset="0.321" stop-color="#00e3ff"/><stop offset="0.393" stop-color="#00fffe"/><stop offset="0.413" stop-color="#00fff4"/><stop offset="0.439" stop-color="#00ffb1"/><stop offset="0.540" stop-color="#00ff81"/><stop offset="0.659" stop-color="#01ff00"/><stop offset="0.668" stop-color="#00ff04"/><stop offset="0.717" stop-color="#00ff82"/><stop offset="0.760" stop-color="#00ffb5"/><stop offset="0.775" stop-color="#00ffe2"/><stop offset="0.795" stop-color="#0ff"/><stop offset="0.827" stop-color="#00e4ff"/><stop offset="0.864" stop-color="#0053ff"/><stop offset="0.954" stop-color="#0000fe"/><stop offset="1.000" stop-color="#0000ca"/></linearGradient><linearGradient id="a45" x1="0" y1="0" x2="0" y2="1"><stop offset="0.000" stop-color="#000"/><stop offset="0.107" stop-color="#000"/><stop offset="0.176" stop-color="#00b"/><stop offset="0.231" stop-color="#0001ff"/><stop offset="0.263" stop-color="#002aff"/><stop offset="0.301" stop-color="#00d6ff"/><stop offset="0.376" stop-color="#00fffe"/><stop offset="0.405" stop-color="#00ffeb"/><stop offset="0.434" stop-color="#00ff81"/><stop offset="0.509" stop-color="#00ff5e"/><stop offset="0.595" stop-color="#01ff00"/><stop offset="0.668" stop-color="#72ff00"/><stop offset="0.697" stop-color="#0f0"/><stop offset="0.731" stop-color="#00ff5f"/><stop offset="0.760" stop-color="#00ff81"/><stop offset="0.795" stop-color="#0ff"/><stop offset="0.812" stop-color="#00d8ff"/><stop offset="0.850" stop-color="#002aff"/><stop offset="0.902" stop-color="#00f"/><stop offset="1.000" stop-color="#0000a8"/></linearGradient><linearGradient id="a46" x1="0" y1="0" x2="0" y2="1"><stop offset="0.000" stop-color="#000"/><stop offset="0.104" stop-color="#000"/><stop offset="0.173" stop-color="#0000ec"/><stop offset="0.185" stop-color="#0002ff"/><stop offset="0.260" stop-color="#006fff"/><stop offset="0.289" stop-color="#00f2ff"/><stop offset="0.295" stop-color="#00fff6"/><stop offset="0.405" stop-color="#00ffe2"/><stop offset="0.431" stop-color="#00ff79"/><stop offset="0.500" stop-color="#00ff59"/><stop offset="0.584" stop-color="#02ff00"/><stop offset="0.668" stop-color="#8aff00"/><stop offset="0.702" stop-color="#00ff04"/><stop offset="0.734" stop-color="#00ff5a"/><stop offset="0.760" stop-color="#00ff79"/><stop offset="0.786" stop-color="#00ffe0"/><stop offset="0.801" stop-color="#00fcff"/><stop offset="0.832" stop-color="#006fff"/><stop offset="0.948" stop-color="#0000fe"/><stop offset="1.000" stop-color="#0000a7"/></linearGradient><linearGradient id="a47" x1="0" y1="0" x2="0" y2="1"><stop offset="0.000" stop-color="#000"/><stop offset="0.107" stop-color="#000"/><stop offset="0.179" stop-color="#0000d1"/><stop offset="0.211" stop-color="#00f"/><stop offset="0.260" stop-color="#0046ff"/><stop offset="0.295" stop-color="#00ebff"/><stop offset="0.341" stop-color="#00fffe"/><stop offset="0.402" stop-color="#00ffe4"/><stop offset="0.431" stop-color="#00ff7c"/><stop offset="0.500" stop-color="#00ff5b"/><stop offset="0.584" stop-color="#02ff00"/><stop offset="0.668" stop-color="#8bff00"/><stop offset="0.702" stop-color="#00ff03"/><stop offset="0.734" stop-color="#00ff5a"/><stop offset="0.763" stop-color="#00ff7e"/><stop offset="0.789" stop-color="#00ffef"/><stop offset="0.792" stop-color="#00e4ff"/><stop offset="0.827" stop-color="#04f"/><stop offset="0.916" stop-color="#00f"/><stop offset="0.977" stop-color="#0000d0"/><stop offset="1.000" stop-color="#0000b0"/></linearGradient><linearGradient id="a48" x1="0" y1="0" x2="0" y2="1"><stop offset="0.000" stop-color="#000"/><stop offset="0.092" stop-color="#000"/><stop offset="0.168" stop-color="#0000ad"/><stop offset="0.231" stop-color="#00f"/><stop offset="0.254" stop-color="#02f"/><stop offset="0.289" stop-color="#00caff"/><stop offset="0.382" stop-color="#00fffd"/><stop offset="0.399" stop-color="#00ffef"/><stop offset="0.428" stop-color="#00ff83"/><stop offset="0.503" stop-color="#00ff5e"/><stop offset="0.587" stop-color="#0f0"/><stop offset="0.668" stop-color="#84ff00"/><stop offset="0.699" stop-color="#02ff00"/><stop offset="0.734" stop-color="#00ff5f"/><stop offset="0.763" stop-color="#00ff83"/><stop offset="0.780" stop-color="#00ffe4"/><stop offset="0.783" stop-color="#00bdff"/><stop offset="0.818" stop-color="#001bff"/><stop offset="0.858" stop-color="#00f"/><stop offset="1.000" stop-color="#00009c"/></linearGradient><linearGradient id="a49" x1="0" y1="0" x2="0" y2="1"><stop offset="0.000" stop-color="#000"/><stop offset="0.150" stop-color="#000"/><stop offset="0.211" stop-color="#0000ca"/><stop offset="0.237" stop-color="#0000fc"/><stop offset="0.272" stop-color="#003eff"/><stop offset="0.286" stop-color="#007fff"/><stop offset="0.309" stop-color="#00cbff"/><stop offset="0.402" stop-color="#00efff"/><stop offset="0.408" stop-color="#0ff"/><stop offset="0.428" stop-color="#00ffc6"/><stop offset="0.538" stop-color="#00ff95"/><stop offset="0.665" stop-color="#00ff13"/><stop offset="0.708" stop-color="#0f8"/><stop offset="0.734" stop-color="#00ffb4"/><stop offset="0.757" stop-color="#00ffc6"/><stop offset="0.777" stop-color="#00fffe"/><stop offset="0.827" stop-color="#003fff"/><stop offset="0.919" stop-color="#0000fe"/><stop offset="1.000" stop-color="#0000c0"/></linearGradient><linearGradient id="a50" x1="0" y1="0" x2="0" y2="1"><stop offset="0.000" stop-color="#000"/><stop offset="0.208" stop-color="#000"/><stop offset="0.251" stop-color="#0000d9"/><stop offset="0.263" stop-color="#0001ff"/><stop offset="0.292" stop-color="#0059ff"/><stop offset="0.306" stop-color="#009dff"/><stop offset="0.327" stop-color="#00dfff"/><stop offset="0.402" stop-color="#00fffe"/><stop offset="0.431" stop-color="#00ffc8"/><stop offset="0.538" stop-color="#00ff9b"/><stop offset="0.662" stop-color="#00ff25"/><stop offset="0.708" stop-color="#0f9"/><stop offset="0.751" stop-color="#00ffca"/><stop offset="0.777" stop-color="#0ff"/><stop offset="0.798" stop-color="#00e1ff"/><stop offset="0.835" stop-color="#0059ff"/><stop offset="0.951" stop-color="#0001ff"/><stop offset="1.000" stop-color="#0000d2"/></linearGradient><linearGradient id="a51" x1="0" y1="0" x2="0" y2="1"><stop offset="0.000" stop-color="#000"/><stop offset="0.211" stop-color="#000001"/><stop offset="0.254" stop-color="#0000db"/><stop offset="0.266" stop-color="#00f"/><stop offset="0.303" stop-color="#0063ff"/><stop offset="0.338" stop-color="#00faff"/><stop offset="0.347" stop-color="#00fffe"/><stop offset="0.402" stop-color="#00ffe6"/><stop offset="0.428" stop-color="#00ff8a"/><stop offset="0.512" stop-color="#00ff65"/><stop offset="0.610" stop-color="#01ff00"/><stop offset="0.656" stop-color="#42ff00"/><stop offset="0.673" stop-color="#05ff00"/><stop offset="0.711" stop-color="#00ff62"/><stop offset="0.746" stop-color="#00ff8f"/><stop offset="0.769" stop-color="#00ffe6"/><stop offset="0.803" stop-color="#00fffe"/><stop offset="0.812" stop-color="#00f1ff"/><stop offset="0.847" stop-color="#005eff"/><stop offset="0.965" stop-color="#00f"/><stop offset="1.000" stop-color="#0000e0"/></linearGradient><linearGradient id="a52" x1="0" y1="0" x2="0" y2="1"><stop offset="0.000" stop-color="#000"/><stop offset="0.188" stop-color="#000"/><stop offset="0.246" stop-color="#0000c6"/><stop offset="0.286" stop-color="#0001ff"/><stop offset="0.324" stop-color="#0038ff"/><stop offset="0.358" stop-color="#00e3ff"/><stop offset="0.382" stop-color="#00fffd"/><stop offset="0.402" stop-color="#00ffde"/><stop offset="0.428" stop-color="#00ff78"/><stop offset="0.500" stop-color="#00ff58"/><stop offset="0.590" stop-color="#03ff00"/><stop offset="0.650" stop-color="#5bff00"/><stop offset="0.673" stop-color="#06ff00"/><stop offset="0.708" stop-color="#00ff56"/><stop offset="0.737" stop-color="#0f7"/><stop offset="0.763" stop-color="#00ffdc"/><stop offset="0.795" stop-color="#00fffe"/><stop offset="0.829" stop-color="#00deff"/><stop offset="0.864" stop-color="#0037ff"/><stop offset="0.934" stop-color="#0001ff"/><stop offset="1.000" stop-color="#00c"/></linearGradient><linearGradient id="a53" x1="0" y1="0" x2="0" y2="1"><stop offset="0.000" stop-color="#000"/><stop offset="0.179" stop-color="#000"/><stop offset="0.243" stop-color="#0000d8"/><stop offset="0.275" stop-color="#0001ff"/><stop offset="0.347" stop-color="#0053ff"/><stop offset="0.382" stop-color="#00e5ff"/><stop offset="0.393" stop-color="#00fffc"/><stop offset="0.408" stop-color="#00ffdf"/><stop offset="0.428" stop-color="#00ff9a"/><stop offset="0.520" stop-color="#00ff71"/><stop offset="0.630" stop-color="#02ff00"/><stop offset="0.645" stop-color="#12ff00"/><stop offset="0.650" stop-color="#00ff01"/><stop offset="0.694" stop-color="#00ff71"/><stop offset="0.731" stop-color="#00ff9a"/><stop offset="0.757" stop-color="#00ffec"/><stop offset="0.841" stop-color="#00ecff"/><stop offset="0.879" stop-color="#0053ff"/><stop offset="0.968" stop-color="#00f"/><stop offset="1.000" stop-color="#0000e1"/></linearGradient><linearGradient id="a54" x1="0" y1="0" x2="0" y2="1"><stop offset="0.000" stop-color="#000"/><stop offset="0.156" stop-color="#000"/><stop offset="0.217" stop-color="#00e"/><stop offset="0.234" stop-color="#0001ff"/><stop offset="0.353" stop-color="#006cff"/><stop offset="0.376" stop-color="#0cf"/><stop offset="0.393" stop-color="#00fff9"/><stop offset="0.410" stop-color="#00ffe1"/><stop offset="0.428" stop-color="#00ffac"/><stop offset="0.526" stop-color="#00ff80"/><stop offset="0.636" stop-color="#00ff10"/><stop offset="0.685" stop-color="#00ff82"/><stop offset="0.725" stop-color="#00ffac"/><stop offset="0.743" stop-color="#00ffe4"/><stop offset="0.844" stop-color="#00faff"/><stop offset="0.864" stop-color="#00b4ff"/><stop offset="0.879" stop-color="#0070ff"/><stop offset="0.980" stop-color="#0001ff"/><stop offset="1.000" stop-color="#0000e3"/></linearGradient><linearGradient id="a55" x1="0" y1="0" x2="0" y2="1"><stop offset="0.000" stop-color="#000"/><stop offset="0.156" stop-color="#000"/><stop offset="0.199" stop-color="#0000ef"/><stop offset="0.220" stop-color="#0001ff"/><stop offset="0.355" stop-color="#006bff"/><stop offset="0.393" stop-color="#00fff8"/><stop offset="0.405" stop-color="#00ffe6"/><stop offset="0.428" stop-color="#00ff91"/><stop offset="0.512" stop-color="#0f6"/><stop offset="0.604" stop-color="#0f0"/><stop offset="0.630" stop-color="#25ff00"/><stop offset="0.642" stop-color="#04ff00"/><stop offset="0.685" stop-color="#00ff67"/><stop offset="0.723" stop-color="#00ff90"/><stop offset="0.746" stop-color="#00ffe6"/><stop offset="0.853" stop-color="#00fffe"/><stop offset="0.887" stop-color="#006bff"/><stop offset="1.000" stop-color="#0000fc"/></linearGradient><linearGradient id="a56" x1="0" y1="0" x2="0" y2="1"><stop offset="0.000" stop-color="#000"/><stop offset="0.130" stop-color="#000"/><stop offset="0.165" stop-color="#0000eb"/><stop offset="0.194" stop-color="#00f"/><stop offset="0.353" stop-color="#0065ff"/><stop offset="0.390" stop-color="#00fffc"/><stop offset="0.405" stop-color="#00ffe2"/><stop offset="0.428" stop-color="#00ff8b"/><stop offset="0.506" stop-color="#00ff62"/><stop offset="0.592" stop-color="#0f0"/><stop offset="0.624" stop-color="#30ff00"/><stop offset="0.639" stop-color="#02ff00"/><stop offset="0.679" stop-color="#00ff5f"/><stop offset="0.720" stop-color="#00ff8f"/><stop offset="0.743" stop-color="#00ffe6"/><stop offset="0.855" stop-color="#00fffe"/><stop offset="0.893" stop-color="#0065ff"/><stop offset="1.000" stop-color="#0001ff"/></linearGradient><linearGradient id="a57" x1="0" y1="0" x2="0" y2="1"><stop offset="0.000" stop-color="#000"/><stop offset="0.113" stop-color="#000"/><stop offset="0.150" stop-color="#0000c9"/><stop offset="0.208" stop-color="#0001ff"/><stop offset="0.283" stop-color="#04f"/><stop offset="0.318" stop-color="#00e6ff"/><stop offset="0.361" stop-color="#0ff"/><stop offset="0.402" stop-color="#00ffe8"/><stop offset="0.431" stop-color="#00ff82"/><stop offset="0.500" stop-color="#00ff60"/><stop offset="0.584" stop-color="#02ff00"/><stop offset="0.618" stop-color="#38ff00"/><stop offset="0.642" stop-color="#00ff04"/><stop offset="0.685" stop-color="#00ff5f"/><stop offset="0.725" stop-color="#0f8"/><stop offset="0.751" stop-color="#00ffe8"/><stop offset="0.798" stop-color="#0ff"/><stop offset="0.847" stop-color="#00e6ff"/><stop offset="0.882" stop-color="#0043ff"/><stop offset="0.951" stop-color="#00f"/><stop offset="1.000" stop-color="#0000d0"/></linearGradient><linearGradient id="a58" x1="0" y1="0" x2="0" y2="1"><stop offset="0.000" stop-color="#000"/><stop offset="0.121" stop-color="#000"/><stop offset="0.156" stop-color="#0000c5"/><stop offset="0.182" stop-color="#0000fd"/><stop offset="0.217" stop-color="#0042ff"/><stop offset="0.251" stop-color="#00d1ff"/><stop offset="0.410" stop-color="#00fff7"/><stop offset="0.434" stop-color="#00ffb7"/><stop offset="0.520" stop-color="#00ff8b"/><stop offset="0.616" stop-color="#00ff21"/><stop offset="0.676" stop-color="#00ff8d"/><stop offset="0.731" stop-color="#00ffba"/><stop offset="0.754" stop-color="#00feff"/><stop offset="0.838" stop-color="#00d2ff"/><stop offset="0.876" stop-color="#0041ff"/><stop offset="0.939" stop-color="#00f"/><stop offset="1.000" stop-color="#0000b9"/></linearGradient><linearGradient id="a59" x1="0" y1="0" x2="0" y2="1"><stop offset="0.000" stop-color="#000"/><stop offset="0.142" stop-color="#000"/><stop offset="0.173" stop-color="#0000bc"/><stop offset="0.176" stop-color="#002fff"/><stop offset="0.191" stop-color="#0071ff"/><stop offset="0.211" stop-color="#00a7ff"/><stop offset="0.410" stop-color="#00c5ff"/><stop offset="0.436" stop-color="#00fff9"/><stop offset="0.526" stop-color="#00ffcf"/><stop offset="0.610" stop-color="#0f8"/><stop offset="0.671" stop-color="#00ffce"/><stop offset="0.737" stop-color="#00feff"/><stop offset="0.760" stop-color="#00c6ff"/><stop offset="0.832" stop-color="#00a7ff"/><stop offset="0.853" stop-color="#0072ff"/><stop offset="0.870" stop-color="#002bff"/><stop offset="0.916" stop-color="#0000fe"/><stop offset="1.000" stop-color="#0000a7"/></linearGradient><linearGradient id="a60" x1="0" y1="0" x2="0" y2="1"><stop offset="0.000" stop-color="#000"/><stop offset="0.145" stop-color="#000"/><stop offset="0.176" stop-color="#0000e2"/><stop offset="0.179" stop-color="#0070ff"/><stop offset="0.182" stop-color="#0083ff"/><stop offset="0.188" stop-color="#00f5ff"/><stop offset="0.194" stop-color="#00f5ff"/><stop offset="0.197" stop-color="#00cdff"/><stop offset="0.202" stop-color="#00e5ff"/><stop offset="0.379" stop-color="#0ff"/><stop offset="0.416" stop-color="#00fff9"/><stop offset="0.442" stop-color="#00ffc6"/><stop offset="0.517" stop-color="#00ff9f"/><stop offset="0.607" stop-color="#00ff30"/><stop offset="0.668" stop-color="#00ff96"/><stop offset="0.731" stop-color="#00ffc6"/><stop offset="0.743" stop-color="#00ffe6"/><stop offset="0.766" stop-color="#0ff"/><stop offset="0.801" stop-color="#00e6ff"/><stop offset="0.824" stop-color="#009eff"/><stop offset="0.838" stop-color="#005eff"/><stop offset="0.908" stop-color="#0001ff"/><stop offset="1.000" stop-color="#000075"/></linearGradient><linearGradient id="a61" x1="0" y1="0" x2="0" y2="1"><stop offset="0.000" stop-color="#000"/><stop offset="0.130" stop-color="#000"/><stop offset="0.165" stop-color="#0000e4"/><stop offset="0.168" stop-color="#0073ff"/><stop offset="0.185" stop-color="#00edff"/><stop offset="0.188" stop-color="#00ffb8"/><stop offset="0.194" stop-color="#00ffb8"/><stop offset="0.197" stop-color="#00ffe8"/><stop offset="0.199" stop-color="#00feff"/><stop offset="0.428" stop-color="#00ffe6"/><stop offset="0.454" stop-color="#00ff87"/><stop offset="0.506" stop-color="#00ff61"/><stop offset="0.564" stop-color="#0f0"/><stop offset="0.604" stop-color="#5bff00"/><stop offset="0.633" stop-color="#07ff00"/><stop offset="0.682" stop-color="#00ff61"/><stop offset="0.725" stop-color="#00ff8c"/><stop offset="0.749" stop-color="#00ffe4"/><stop offset="0.775" stop-color="#00fdff"/><stop offset="0.809" stop-color="#0065ff"/><stop offset="0.858" stop-color="#0003ff"/><stop offset="1.000" stop-color="#000021"/></linearGradient><linearGradient id="a62" x1="0" y1="0" x2="0" y2="1"><stop offset="0.000" stop-color="#000"/><stop offset="0.121" stop-color="#000"/><stop offset="0.156" stop-color="#0000d9"/><stop offset="0.159" stop-color="#0062ff"/><stop offset="0.185" stop-color="#00f5ff"/><stop offset="0.188" stop-color="#00ffb4"/><stop offset="0.191" stop-color="#00ff7e"/><stop offset="0.194" stop-color="#00ff7e"/><stop offset="0.197" stop-color="#00ff94"/><stop offset="0.199" stop-color="#00fff4"/><stop offset="0.202" stop-color="#00fdff"/><stop offset="0.451" stop-color="#0fd"/><stop offset="0.480" stop-color="#00ff71"/><stop offset="0.512" stop-color="#00ff51"/><stop offset="0.549" stop-color="#05ff00"/><stop offset="0.601" stop-color="#beff00"/><stop offset="0.650" stop-color="#00ff02"/><stop offset="0.682" stop-color="#00ff52"/><stop offset="0.711" stop-color="#00ff75"/><stop offset="0.737" stop-color="#00ffdf"/><stop offset="0.757" stop-color="#00fffc"/><stop offset="0.763" stop-color="#00f5ff"/><stop offset="0.798" stop-color="#0051ff"/><stop offset="0.824" stop-color="#0000fd"/><stop offset="0.835" stop-color="#0000da"/><stop offset="0.977" stop-color="#000004"/><stop offset="1.000" stop-color="#000"/></linearGradient><linearGradient id="a63" x1="0" y1="0" x2="0" y2="1"><stop offset="0.000" stop-color="#000"/><stop offset="0.159" stop-color="#000004"/><stop offset="0.179" stop-color="#0000bd"/><stop offset="0.182" stop-color="#0035ff"/><stop offset="0.185" stop-color="#00b4ff"/><stop offset="0.188" stop-color="#00ffd2"/><stop offset="0.191" stop-color="#0f6"/><stop offset="0.197" stop-color="#0f6"/><stop offset="0.202" stop-color="#00ecff"/><stop offset="0.208" stop-color="#002eff"/><stop offset="0.234" stop-color="#00f"/><stop offset="0.283" stop-color="#0000ad"/><stop offset="0.298" stop-color="#0000d4"/><stop offset="0.301" stop-color="#0036ff"/><stop offset="0.303" stop-color="#0054ff"/><stop offset="0.338" stop-color="#00edff"/><stop offset="0.402" stop-color="#0ff"/><stop offset="0.497" stop-color="#00ffe5"/><stop offset="0.523" stop-color="#00ff7f"/><stop offset="0.543" stop-color="#00ff5c"/><stop offset="0.566" stop-color="#04ff00"/><stop offset="0.598" stop-color="#ceff00"/><stop offset="0.601" stop-color="#d4ff00"/><stop offset="0.624" stop-color="#4cff00"/><stop offset="0.642" stop-color="#00ff07"/><stop offset="0.668" stop-color="#00ff5f"/><stop offset="0.691" stop-color="#00ff82"/><stop offset="0.714" stop-color="#0fd"/><stop offset="0.725" stop-color="#00fff9"/><stop offset="0.737" stop-color="#00e7ff"/><stop offset="0.786" stop-color="#0002ff"/><stop offset="0.798" stop-color="#0000d0"/><stop offset="0.910" stop-color="#000"/><stop offset="1.000" stop-color="#000"/></linearGradient><linearGradient id="a64" x1="0" y1="0" x2="0" y2="1"><stop offset="0.000" stop-color="#000"/><stop offset="0.159" stop-color="#000"/><stop offset="0.179" stop-color="#0000a4"/><stop offset="0.182" stop-color="#0010ff"/><stop offset="0.185" stop-color="#008fff"/><stop offset="0.188" stop-color="#00ffe5"/><stop offset="0.191" stop-color="#0f6"/><stop offset="0.194" stop-color="#00ff40"/><stop offset="0.197" stop-color="#00ff40"/><stop offset="0.199" stop-color="#00ff5e"/><stop offset="0.202" stop-color="#00ffc4"/><stop offset="0.205" stop-color="#00cbff"/><stop offset="0.208" stop-color="#0063ff"/><stop offset="0.211" stop-color="#0014ff"/><stop offset="0.223" stop-color="#0000fb"/><stop offset="0.301" stop-color="#00006f"/><stop offset="0.370" stop-color="#000015"/><stop offset="0.491" stop-color="#0000c4"/><stop offset="0.503" stop-color="#0000fa"/><stop offset="0.549" stop-color="#00daff"/><stop offset="0.552" stop-color="#0fd"/><stop offset="0.581" stop-color="#00ff75"/><stop offset="0.587" stop-color="#00ff3d"/><stop offset="0.590" stop-color="#00ff08"/><stop offset="0.592" stop-color="#41ff00"/><stop offset="0.595" stop-color="#a0ff00"/><stop offset="0.598" stop-color="#ffe600"/><stop offset="0.601" stop-color="#ef0"/><stop offset="0.613" stop-color="#5fff00"/><stop offset="0.624" stop-color="#00ff07"/><stop offset="0.642" stop-color="#00ff5f"/><stop offset="0.653" stop-color="#00ff78"/><stop offset="0.668" stop-color="#00ff7f"/><stop offset="0.699" stop-color="#00fcff"/><stop offset="0.754" stop-color="#0000f8"/><stop offset="0.766" stop-color="#0000c4"/><stop offset="0.841" stop-color="#000"/><stop offset="1.000" stop-color="#000"/></linearGradient><linearGradient id="a65" x1="0" y1="0" x2="0" y2="1"><stop offset="0.000" stop-color="#000"/><stop offset="0.159" stop-color="#000"/><stop offset="0.176" stop-color="#0000b8"/><stop offset="0.179" stop-color="#0000e4"/><stop offset="0.182" stop-color="#0072ff"/><stop offset="0.185" stop-color="#00edff"/><stop offset="0.188" stop-color="#00ffc3"/><stop offset="0.191" stop-color="#0f4"/><stop offset="0.194" stop-color="#0f3"/><stop offset="0.197" stop-color="#0f3"/><stop offset="0.199" stop-color="#00ff63"/><stop offset="0.202" stop-color="#00ffc9"/><stop offset="0.205" stop-color="#00feff"/><stop offset="0.211" stop-color="#0053ff"/><stop offset="0.249" stop-color="#0001ff"/><stop offset="0.318" stop-color="#000075"/><stop offset="0.373" stop-color="#00001e"/><stop offset="0.491" stop-color="#0000f8"/><stop offset="0.546" stop-color="#00fcff"/><stop offset="0.581" stop-color="#00ff72"/><stop offset="0.587" stop-color="#00ff2e"/><stop offset="0.590" stop-color="#12ff00"/><stop offset="0.592" stop-color="#6cff00"/><stop offset="0.595" stop-color="#e0ff00"/><stop offset="0.598" stop-color="#ffc300"/><stop offset="0.601" stop-color="#fcff00"/><stop offset="0.610" stop-color="#61ff00"/><stop offset="0.616" stop-color="#14ff00"/><stop offset="0.618" stop-color="#00ff0b"/><stop offset="0.624" stop-color="#00ff3d"/><stop offset="0.633" stop-color="#00ff6a"/><stop offset="0.650" stop-color="#00ff86"/><stop offset="0.673" stop-color="#00ffe1"/><stop offset="0.694" stop-color="#00f6ff"/><stop offset="0.723" stop-color="#0074ff"/><stop offset="0.760" stop-color="#0000fb"/><stop offset="0.829" stop-color="#000"/><stop offset="1.000" stop-color="#000"/></linearGradient><linearGradient id="a66" x1="0" y1="0" x2="0" y2="1"><stop offset="0.000" stop-color="#000"/><stop offset="0.159" stop-color="#000001"/><stop offset="0.176" stop-color="#0000c2"/><stop offset="0.179" stop-color="#0012ff"/><stop offset="0.182" stop-color="#009dff"/><stop offset="0.185" stop-color="#00fff0"/><stop offset="0.188" stop-color="#00ffa2"/><stop offset="0.191" stop-color="#00ff26"/><stop offset="0.197" stop-color="#00ff26"/><stop offset="0.199" stop-color="#00ff67"/><stop offset="0.202" stop-color="#00ffcd"/><stop offset="0.205" stop-color="#00fffd"/><stop offset="0.211" stop-color="#0057ff"/><stop offset="0.251" stop-color="#0000f8"/><stop offset="0.318" stop-color="#00006d"/><stop offset="0.370" stop-color="#000018"/><stop offset="0.491" stop-color="#0000fc"/><stop offset="0.546" stop-color="#00fcff"/><stop offset="0.581" stop-color="#00ff70"/><stop offset="0.584" stop-color="#00ff52"/><stop offset="0.587" stop-color="#00ff1d"/><stop offset="0.590" stop-color="#31ff00"/><stop offset="0.592" stop-color="#9dff00"/><stop offset="0.595" stop-color="#ffd400"/><stop offset="0.598" stop-color="#ffb800"/><stop offset="0.601" stop-color="#e2ff00"/><stop offset="0.604" stop-color="#8dff00"/><stop offset="0.610" stop-color="#0bff00"/><stop offset="0.613" stop-color="#00ff23"/><stop offset="0.621" stop-color="#00ff71"/><stop offset="0.630" stop-color="#00ff80"/><stop offset="0.656" stop-color="#00ffe6"/><stop offset="0.668" stop-color="#00ffe7"/><stop offset="0.676" stop-color="#00faff"/><stop offset="0.705" stop-color="#007bff"/><stop offset="0.760" stop-color="#0000fb"/><stop offset="0.821" stop-color="#000002"/><stop offset="1.000" stop-color="#000"/></linearGradient><linearGradient id="a67" x1="0" y1="0" x2="0" y2="1"><stop offset="0.000" stop-color="#000"/><stop offset="0.156" stop-color="#000"/><stop offset="0.159" stop-color="#000006"/><stop offset="0.176" stop-color="#00b"/><stop offset="0.179" stop-color="#0029ff"/><stop offset="0.182" stop-color="#00adff"/><stop offset="0.185" stop-color="#00ffe6"/><stop offset="0.191" stop-color="#00ff1a"/><stop offset="0.197" stop-color="#00ff1a"/><stop offset="0.199" stop-color="#00ff6b"/><stop offset="0.202" stop-color="#00ffd1"/><stop offset="0.205" stop-color="#0ef"/><stop offset="0.208" stop-color="#008eff"/><stop offset="0.211" stop-color="#004bff"/><stop offset="0.251" stop-color="#0000fe"/><stop offset="0.379" stop-color="#000032"/><stop offset="0.491" stop-color="#0000f7"/><stop offset="0.549" stop-color="#00f7ff"/><stop offset="0.552" stop-color="#00fffc"/><stop offset="0.555" stop-color="#00ffdf"/><stop offset="0.581" stop-color="#00ff73"/><stop offset="0.584" stop-color="#0f5"/><stop offset="0.587" stop-color="#00ff1d"/><stop offset="0.590" stop-color="#3aff00"/><stop offset="0.592" stop-color="#b6ff00"/><stop offset="0.595" stop-color="#ffa400"/><stop offset="0.598" stop-color="#ffc600"/><stop offset="0.601" stop-color="#c2ff00"/><stop offset="0.604" stop-color="#62ff00"/><stop offset="0.607" stop-color="#16ff00"/><stop offset="0.610" stop-color="#00ff24"/><stop offset="0.613" stop-color="#00ff4d"/><stop offset="0.618" stop-color="#00ff78"/><stop offset="0.624" stop-color="#00ff81"/><stop offset="0.650" stop-color="#00ffe6"/><stop offset="0.665" stop-color="#00fbff"/><stop offset="0.697" stop-color="#006cff"/><stop offset="0.760" stop-color="#0001ff"/><stop offset="0.772" stop-color="#0000e8"/><stop offset="0.844" stop-color="#000"/><stop offset="1.000" stop-color="#000"/></linearGradient><linearGradient id="a68" x1="0" y1="0" x2="0" y2="1"><stop offset="0.000" stop-color="#000"/><stop offset="0.156" stop-color="#000"/><stop offset="0.159" stop-color="#00000b"/><stop offset="0.176" stop-color="#0000ad"/><stop offset="0.179" stop-color="#0020ff"/><stop offset="0.182" stop-color="#00a0ff"/><stop offset="0.185" stop-color="#00ffe9"/><stop offset="0.188" stop-color="#00ff6e"/><stop offset="0.191" stop-color="#00ff21"/><stop offset="0.197" stop-color="#00ff21"/><stop offset="0.202" stop-color="#00ffe9"/><stop offset="0.205" stop-color="#00b9ff"/><stop offset="0.208" stop-color="#0054ff"/><stop offset="0.211" stop-color="#0030ff"/><stop offset="0.243" stop-color="#0000fb"/><stop offset="0.384" stop-color="#000038"/><stop offset="0.486" stop-color="#0000d4"/><stop offset="0.497" stop-color="#0000fa"/><stop offset="0.520" stop-color="#0052ff"/><stop offset="0.552" stop-color="#00e7ff"/><stop offset="0.555" stop-color="#00ffe2"/><stop offset="0.581" stop-color="#0f7"/><stop offset="0.584" stop-color="#00ff5a"/><stop offset="0.587" stop-color="#00ff1f"/><stop offset="0.590" stop-color="#43ff00"/><stop offset="0.592" stop-color="#d1ff00"/><stop offset="0.595" stop-color="#ff6c00"/><stop offset="0.598" stop-color="#ffea00"/><stop offset="0.601" stop-color="#8f0"/><stop offset="0.604" stop-color="#1fff00"/><stop offset="0.607" stop-color="#00ff2b"/><stop offset="0.610" stop-color="#00ff5b"/><stop offset="0.613" stop-color="#00ff75"/><stop offset="0.650" stop-color="#00f7ff"/><stop offset="0.688" stop-color="#004cff"/><stop offset="0.743" stop-color="#0000fd"/><stop offset="0.769" stop-color="#0000d8"/><stop offset="0.847" stop-color="#000"/><stop offset="1.000" stop-color="#000"/></linearGradient><linearGradient id="a69" x1="0" y1="0" x2="0" y2="1"><stop offset="0.000" stop-color="#000"/><stop offset="0.156" stop-color="#000"/><stop offset="0.176" stop-color="#0000b6"/><stop offset="0.179" stop-color="#0037ff"/><stop offset="0.182" stop-color="#00b6ff"/><stop offset="0.185" stop-color="#00ffdb"/><stop offset="0.188" stop-color="#00ff5c"/><stop offset="0.191" stop-color="#00ff29"/><stop offset="0.194" stop-color="#00ff29"/><stop offset="0.197" stop-color="#00ff3d"/><stop offset="0.202" stop-color="#00fffd"/><stop offset="0.208" stop-color="#003cff"/><stop offset="0.237" stop-color="#0000fe"/><stop offset="0.312" stop-color="#00007e"/><stop offset="0.376" stop-color="#000028"/><stop offset="0.488" stop-color="#0000da"/><stop offset="0.497" stop-color="#0000f9"/><stop offset="0.520" stop-color="#0052ff"/><stop offset="0.555" stop-color="#00f3ff"/><stop offset="0.558" stop-color="#00ffda"/><stop offset="0.581" stop-color="#00ff7a"/><stop offset="0.584" stop-color="#00ff5e"/><stop offset="0.587" stop-color="#00ff1f"/><stop offset="0.590" stop-color="#4cff00"/><stop offset="0.592" stop-color="#edff00"/><stop offset="0.595" stop-color="#f40"/><stop offset="0.598" stop-color="#e1ff00"/><stop offset="0.601" stop-color="#4f0"/><stop offset="0.604" stop-color="#00ff24"/><stop offset="0.607" stop-color="#00ff61"/><stop offset="0.610" stop-color="#00ff7b"/><stop offset="0.639" stop-color="#00ffe6"/><stop offset="0.642" stop-color="#00fdff"/><stop offset="0.676" stop-color="#0057ff"/><stop offset="0.737" stop-color="#0000fd"/><stop offset="0.760" stop-color="#0000dc"/><stop offset="0.835" stop-color="#000002"/><stop offset="1.000" stop-color="#000"/></linearGradient><linearGradient id="a70" x1="0" y1="0" x2="0" y2="1"><stop offset="0.000" stop-color="#000"/><stop offset="0.156" stop-color="#000"/><stop offset="0.176" stop-color="#0000b5"/><stop offset="0.179" stop-color="#0035ff"/><stop offset="0.182" stop-color="#00b5ff"/><stop offset="0.185" stop-color="#00ffc9"/><stop offset="0.188" stop-color="#00ff4a"/><stop offset="0.191" stop-color="#00ff30"/><stop offset="0.194" stop-color="#00ff30"/><stop offset="0.197" stop-color="#00ff59"/><stop offset="0.199" stop-color="#00ffbf"/><stop offset="0.202" stop-color="#00d8ff"/><stop offset="0.205" stop-color="#0072ff"/><stop offset="0.208" stop-color="#0023ff"/><stop offset="0.228" stop-color="#0001ff"/><stop offset="0.315" stop-color="#00007d"/><stop offset="0.382" stop-color="#000030"/><stop offset="0.486" stop-color="#0000ca"/><stop offset="0.500" stop-color="#0000f9"/><stop offset="0.520" stop-color="#0040ff"/><stop offset="0.552" stop-color="#00d8ff"/><stop offset="0.555" stop-color="#00ffea"/><stop offset="0.581" stop-color="#00ff7a"/><stop offset="0.584" stop-color="#00ff5b"/><stop offset="0.587" stop-color="#00ff18"/><stop offset="0.590" stop-color="#5bff00"/><stop offset="0.592" stop-color="#fff800"/><stop offset="0.595" stop-color="#ff5300"/><stop offset="0.598" stop-color="#c9ff00"/><stop offset="0.601" stop-color="#2bff00"/><stop offset="0.604" stop-color="#00ff39"/><stop offset="0.607" stop-color="#00ff6d"/><stop offset="0.610" stop-color="#00ff7e"/><stop offset="0.636" stop-color="#00ffe0"/><stop offset="0.639" stop-color="#00ecff"/><stop offset="0.673" stop-color="#0041ff"/><stop offset="0.717" stop-color="#0001ff"/><stop offset="0.754" stop-color="#0000c7"/><stop offset="0.827" stop-color="#000001"/><stop offset="1.000" stop-color="#000"/></linearGradient><linearGradient id="a71" x1="0" y1="0" x2="0" y2="1"><stop offset="0.000" stop-color="#000"/><stop offset="0.156" stop-color="#000"/><stop offset="0.173" stop-color="#0000ba"/><stop offset="0.176" stop-color="#0000ef"/><stop offset="0.179" stop-color="#007bff"/><stop offset="0.182" stop-color="#00f4ff"/><stop offset="0.185" stop-color="#00ffb8"/><stop offset="0.188" stop-color="#00ff38"/><stop offset="0.194" stop-color="#00ff38"/><stop offset="0.197" stop-color="#00ff75"/><stop offset="0.199" stop-color="#00ffdb"/><stop offset="0.202" stop-color="#00ebff"/><stop offset="0.205" stop-color="#008aff"/><stop offset="0.208" stop-color="#0051ff"/><stop offset="0.249" stop-color="#00f"/><stop offset="0.321" stop-color="#00007a"/><stop offset="0.376" stop-color="#00002a"/><stop offset="0.488" stop-color="#0000fa"/><stop offset="0.520" stop-color="#0072ff"/><stop offset="0.552" stop-color="#00fffe"/><stop offset="0.581" stop-color="#00ff79"/><stop offset="0.584" stop-color="#00ff59"/><stop offset="0.587" stop-color="#00ff12"/><stop offset="0.590" stop-color="#69ff00"/><stop offset="0.592" stop-color="#fd0"/><stop offset="0.595" stop-color="#ff6500"/><stop offset="0.598" stop-color="#b0ff00"/><stop offset="0.601" stop-color="#12ff00"/><stop offset="0.604" stop-color="#00ff4b"/><stop offset="0.607" stop-color="#00ff76"/><stop offset="0.642" stop-color="#00f8ff"/><stop offset="0.671" stop-color="#0075ff"/><stop offset="0.743" stop-color="#0001ff"/><stop offset="0.751" stop-color="#0000ef"/><stop offset="0.827" stop-color="#000"/><stop offset="1.000" stop-color="#000"/></linearGradient><linearGradient id="a72" x1="0" y1="0" x2="0" y2="1"><stop offset="0.000" stop-color="#000"/><stop offset="0.153" stop-color="#000"/><stop offset="0.156" stop-color="#000006"/><stop offset="0.173" stop-color="#0000af"/><stop offset="0.176" stop-color="#0000ef"/><stop offset="0.179" stop-color="#0074ff"/><stop offset="0.182" stop-color="#0ef"/><stop offset="0.188" stop-color="#00ff40"/><stop offset="0.194" stop-color="#00ff40"/><stop offset="0.199" stop-color="#00ffeb"/><stop offset="0.202" stop-color="#00baff"/><stop offset="0.205" stop-color="#05f"/><stop offset="0.208" stop-color="#0039ff"/><stop offset="0.237" stop-color="#0002ff"/><stop offset="0.315" stop-color="#00007b"/><stop offset="0.376" stop-color="#000029"/><stop offset="0.486" stop-color="#0000e1"/><stop offset="0.494" stop-color="#0001ff"/><stop offset="0.520" stop-color="#005aff"/><stop offset="0.555" stop-color="#00f8ff"/><stop offset="0.558" stop-color="#00ffda"/><stop offset="0.581" stop-color="#00ff79"/><stop offset="0.584" stop-color="#00ff57"/><stop offset="0.587" stop-color="#00ff0a"/><stop offset="0.590" stop-color="#79ff00"/><stop offset="0.592" stop-color="#ffc100"/><stop offset="0.595" stop-color="#ff7a00"/><stop offset="0.598" stop-color="#95ff00"/><stop offset="0.601" stop-color="#00ff06"/><stop offset="0.604" stop-color="#00ff5b"/><stop offset="0.607" stop-color="#00ff7c"/><stop offset="0.633" stop-color="#00ffdf"/><stop offset="0.636" stop-color="#00f4ff"/><stop offset="0.671" stop-color="#0059ff"/><stop offset="0.731" stop-color="#0001ff"/><stop offset="0.754" stop-color="#00d"/><stop offset="0.838" stop-color="#000"/><stop offset="1.000" stop-color="#000"/></linearGradient><linearGradient id="a73" x1="0" y1="0" x2="0" y2="1"><stop offset="0.000" stop-color="#000"/><stop offset="0.153" stop-color="#000"/><stop offset="0.173" stop-color="#000096"/><stop offset="0.176" stop-color="#0000f6"/><stop offset="0.179" stop-color="#0075ff"/><stop offset="0.182" stop-color="#00fff4"/><stop offset="0.185" stop-color="#00ff6c"/><stop offset="0.188" stop-color="#00ff45"/><stop offset="0.191" stop-color="#00ff45"/><stop offset="0.194" stop-color="#00ff64"/><stop offset="0.197" stop-color="#00ffca"/><stop offset="0.199" stop-color="#00b5ff"/><stop offset="0.202" stop-color="#004aff"/><stop offset="0.205" stop-color="#0005ff"/><stop offset="0.208" stop-color="#00f"/><stop offset="0.298" stop-color="#007"/><stop offset="0.376" stop-color="#002"/><stop offset="0.483" stop-color="#0000b3"/><stop offset="0.509" stop-color="#0000fe"/><stop offset="0.520" stop-color="#02f"/><stop offset="0.555" stop-color="#00cfff"/><stop offset="0.558" stop-color="#00ffd9"/><stop offset="0.581" stop-color="#00ff78"/><stop offset="0.584" stop-color="#00ff54"/><stop offset="0.587" stop-color="#00ff01"/><stop offset="0.590" stop-color="#8bff00"/><stop offset="0.592" stop-color="#ffa200"/><stop offset="0.595" stop-color="#ff9400"/><stop offset="0.598" stop-color="#75ff00"/><stop offset="0.601" stop-color="#00ff21"/><stop offset="0.604" stop-color="#00ff6b"/><stop offset="0.607" stop-color="#00ff7f"/><stop offset="0.630" stop-color="#00ffdf"/><stop offset="0.633" stop-color="#00c9ff"/><stop offset="0.665" stop-color="#0029ff"/><stop offset="0.691" stop-color="#00f"/><stop offset="0.749" stop-color="#0000b1"/><stop offset="0.832" stop-color="#000"/><stop offset="1.000" stop-color="#000"/></linearGradient><linearGradient id="a74" x1="0" y1="0" x2="0" y2="1"><stop offset="0.000" stop-color="#000"/><stop offset="0.153" stop-color="#000004"/><stop offset="0.171" stop-color="#000084"/><stop offset="0.173" stop-color="#0000ac"/><stop offset="0.176" stop-color="#0024ff"/><stop offset="0.179" stop-color="#0af"/><stop offset="0.182" stop-color="#00ffb3"/><stop offset="0.185" stop-color="#00ff4b"/><stop offset="0.191" stop-color="#00ff4b"/><stop offset="0.194" stop-color="#00ff9c"/><stop offset="0.197" stop-color="#00e5ff"/><stop offset="0.202" stop-color="#0009ff"/><stop offset="0.205" stop-color="#0000f5"/><stop offset="0.289" stop-color="#00006b"/><stop offset="0.367" stop-color="#000014"/><stop offset="0.483" stop-color="#0000ab"/><stop offset="0.512" stop-color="#0000fc"/><stop offset="0.523" stop-color="#0024ff"/><stop offset="0.555" stop-color="#00c6ff"/><stop offset="0.558" stop-color="#00ffda"/><stop offset="0.581" stop-color="#0f7"/><stop offset="0.584" stop-color="#00ff4f"/><stop offset="0.587" stop-color="#0aff00"/><stop offset="0.590" stop-color="#a1ff00"/><stop offset="0.592" stop-color="#ff7b00"/><stop offset="0.595" stop-color="#ffbd00"/><stop offset="0.598" stop-color="#51ff00"/><stop offset="0.601" stop-color="#00ff3a"/><stop offset="0.604" stop-color="#00ff75"/><stop offset="0.630" stop-color="#00ffe5"/><stop offset="0.633" stop-color="#00b7ff"/><stop offset="0.665" stop-color="#0018ff"/><stop offset="0.682" stop-color="#0001ff"/><stop offset="0.749" stop-color="#0000ab"/><stop offset="0.838" stop-color="#000002"/><stop offset="1.000" stop-color="#000"/></linearGradient><linearGradient id="a75" x1="0" y1="0" x2="0" y2="1"><stop offset="0.000" stop-color="#000"/><stop offset="0.150" stop-color="#000"/><stop offset="0.171" stop-color="#0000a8"/><stop offset="0.173" stop-color="#0003ff"/><stop offset="0.179" stop-color="#00fffa"/><stop offset="0.182" stop-color="#00ff79"/><stop offset="0.185" stop-color="#00ff51"/><stop offset="0.188" stop-color="#00ff51"/><stop offset="0.191" stop-color="#00ff6e"/><stop offset="0.194" stop-color="#00ffd4"/><stop offset="0.197" stop-color="#00c1ff"/><stop offset="0.199" stop-color="#005bff"/><stop offset="0.202" stop-color="#001dff"/><stop offset="0.220" stop-color="#0000fa"/><stop offset="0.298" stop-color="#000074"/><stop offset="0.367" stop-color="#00001b"/><stop offset="0.480" stop-color="#0000c6"/><stop offset="0.500" stop-color="#00f"/><stop offset="0.520" stop-color="#003cff"/><stop offset="0.555" stop-color="#00e2ff"/><stop offset="0.558" stop-color="#00ffd9"/><stop offset="0.581" stop-color="#00ff74"/><stop offset="0.584" stop-color="#00ff46"/><stop offset="0.587" stop-color="#1eff00"/><stop offset="0.590" stop-color="#c4ff00"/><stop offset="0.592" stop-color="#ff4600"/><stop offset="0.595" stop-color="#fffb00"/><stop offset="0.598" stop-color="#26ff00"/><stop offset="0.601" stop-color="#00ff50"/><stop offset="0.604" stop-color="#00ff7c"/><stop offset="0.627" stop-color="#00ffdf"/><stop offset="0.630" stop-color="#00dcff"/><stop offset="0.665" stop-color="#003aff"/><stop offset="0.705" stop-color="#0001ff"/><stop offset="0.746" stop-color="#0000c7"/><stop offset="0.838" stop-color="#000"/><stop offset="1.000" stop-color="#000"/></linearGradient><linearGradient id="a76" x1="0" y1="0" x2="0" y2="1"><stop offset="0.000" stop-color="#000"/><stop offset="0.147" stop-color="#000"/><stop offset="0.150" stop-color="#000005"/><stop offset="0.171" stop-color="#0000cb"/><stop offset="0.173" stop-color="#004fff"/><stop offset="0.176" stop-color="#00cdff"/><stop offset="0.179" stop-color="#00ffbf"/><stop offset="0.182" stop-color="#00ff57"/><stop offset="0.188" stop-color="#00ff57"/><stop offset="0.191" stop-color="#00ffa6"/><stop offset="0.194" stop-color="#00fcff"/><stop offset="0.199" stop-color="#0034ff"/><stop offset="0.220" stop-color="#0000fe"/><stop offset="0.298" stop-color="#000062"/><stop offset="0.361" stop-color="#000009"/><stop offset="0.480" stop-color="#0000d4"/><stop offset="0.494" stop-color="#0000fd"/><stop offset="0.520" stop-color="#004dff"/><stop offset="0.555" stop-color="#00efff"/><stop offset="0.558" stop-color="#00ffda"/><stop offset="0.581" stop-color="#00ff71"/><stop offset="0.584" stop-color="#00ff3c"/><stop offset="0.587" stop-color="#3f0"/><stop offset="0.590" stop-color="#e9ff00"/><stop offset="0.592" stop-color="#ff0a00"/><stop offset="0.595" stop-color="#c6ff00"/><stop offset="0.598" stop-color="#00ff01"/><stop offset="0.601" stop-color="#00ff63"/><stop offset="0.604" stop-color="#00ff7f"/><stop offset="0.624" stop-color="#00ffda"/><stop offset="0.627" stop-color="#00efff"/><stop offset="0.662" stop-color="#004eff"/><stop offset="0.714" stop-color="#0000fd"/><stop offset="0.737" stop-color="#0000d8"/><stop offset="0.829" stop-color="#000002"/><stop offset="1.000" stop-color="#000"/></linearGradient><linearGradient id="a77" x1="0" y1="0" x2="0" y2="1"><stop offset="0.000" stop-color="#000"/><stop offset="0.147" stop-color="#000"/><stop offset="0.168" stop-color="#00b"/><stop offset="0.171" stop-color="#000fff"/><stop offset="0.173" stop-color="#0091ff"/><stop offset="0.176" stop-color="#00fff7"/><stop offset="0.179" stop-color="#00ff86"/><stop offset="0.182" stop-color="#00ff5c"/><stop offset="0.185" stop-color="#00ff5c"/><stop offset="0.188" stop-color="#00ff78"/><stop offset="0.191" stop-color="#00ffde"/><stop offset="0.194" stop-color="#00cfff"/><stop offset="0.197" stop-color="#006cff"/><stop offset="0.199" stop-color="#03f"/><stop offset="0.223" stop-color="#0000fe"/><stop offset="0.301" stop-color="#000063"/><stop offset="0.361" stop-color="#00000e"/><stop offset="0.480" stop-color="#0000de"/><stop offset="0.491" stop-color="#0001ff"/><stop offset="0.520" stop-color="#0057ff"/><stop offset="0.555" stop-color="#00f6ff"/><stop offset="0.558" stop-color="#00ffd9"/><stop offset="0.581" stop-color="#00ff6d"/><stop offset="0.584" stop-color="#00ff2f"/><stop offset="0.587" stop-color="#4cff00"/><stop offset="0.590" stop-color="#ffea00"/><stop offset="0.592" stop-color="#ff4000"/><stop offset="0.595" stop-color="#8fff00"/><stop offset="0.598" stop-color="#00ff21"/><stop offset="0.601" stop-color="#00ff70"/><stop offset="0.624" stop-color="#0fd"/><stop offset="0.627" stop-color="#00f3ff"/><stop offset="0.662" stop-color="#0056ff"/><stop offset="0.720" stop-color="#0000fd"/><stop offset="0.841" stop-color="#000"/><stop offset="1.000" stop-color="#000"/></linearGradient><linearGradient id="a78" x1="0" y1="0" x2="0" y2="1"><stop offset="0.000" stop-color="#000"/><stop offset="0.147" stop-color="#000004"/><stop offset="0.168" stop-color="#0000a9"/><stop offset="0.171" stop-color="#0020ff"/><stop offset="0.173" stop-color="#00a0ff"/><stop offset="0.176" stop-color="#0fc"/><stop offset="0.179" stop-color="#00ff62"/><stop offset="0.185" stop-color="#00ff62"/><stop offset="0.188" stop-color="#00ffb1"/><stop offset="0.191" stop-color="#00d9ff"/><stop offset="0.197" stop-color="#000aff"/><stop offset="0.202" stop-color="#0000fb"/><stop offset="0.286" stop-color="#000056"/><stop offset="0.355" stop-color="#000002"/><stop offset="0.480" stop-color="#0000bc"/><stop offset="0.503" stop-color="#0000fa"/><stop offset="0.520" stop-color="#002bff"/><stop offset="0.555" stop-color="#00d5ff"/><stop offset="0.558" stop-color="#00ffda"/><stop offset="0.578" stop-color="#00ff7f"/><stop offset="0.581" stop-color="#00ff68"/><stop offset="0.584" stop-color="#0f2"/><stop offset="0.587" stop-color="#67ff00"/><stop offset="0.590" stop-color="#ffbc00"/><stop offset="0.592" stop-color="#ff8c00"/><stop offset="0.595" stop-color="#5aff00"/><stop offset="0.598" stop-color="#00ff40"/><stop offset="0.601" stop-color="#00ff7a"/><stop offset="0.621" stop-color="#00ffd8"/><stop offset="0.624" stop-color="#00d7ff"/><stop offset="0.659" stop-color="#002cff"/><stop offset="0.688" stop-color="#0000fe"/><stop offset="0.731" stop-color="#0000bd"/><stop offset="0.829" stop-color="#000001"/><stop offset="1.000" stop-color="#000"/></linearGradient><linearGradient id="a79" x1="0" y1="0" x2="0" y2="1"><stop offset="0.000" stop-color="#000"/><stop offset="0.145" stop-color="#000"/><stop offset="0.165" stop-color="#000096"/><stop offset="0.168" stop-color="#0000d3"/><stop offset="0.171" stop-color="#0050ff"/><stop offset="0.173" stop-color="#00d9ff"/><stop offset="0.176" stop-color="#00ff90"/><stop offset="0.179" stop-color="#00ff70"/><stop offset="0.182" stop-color="#00ff70"/><stop offset="0.185" stop-color="#00ff93"/><stop offset="0.188" stop-color="#00f6ff"/><stop offset="0.194" stop-color="#001aff"/><stop offset="0.197" stop-color="#00f"/><stop offset="0.280" stop-color="#00006c"/><stop offset="0.358" stop-color="#00000f"/><stop offset="0.474" stop-color="#0000b0"/><stop offset="0.506" stop-color="#0000fc"/><stop offset="0.520" stop-color="#0023ff"/><stop offset="0.552" stop-color="#00c1ff"/><stop offset="0.555" stop-color="#00ffe4"/><stop offset="0.578" stop-color="#00ff7d"/><stop offset="0.581" stop-color="#00ff5c"/><stop offset="0.584" stop-color="#00ff05"/><stop offset="0.587" stop-color="#9bff00"/><stop offset="0.590" stop-color="#ff6a00"/><stop offset="0.592" stop-color="#fff000"/><stop offset="0.595" stop-color="#23ff00"/><stop offset="0.598" stop-color="#00ff56"/><stop offset="0.601" stop-color="#00ff7e"/><stop offset="0.621" stop-color="#00ffd9"/><stop offset="0.624" stop-color="#00ceff"/><stop offset="0.659" stop-color="#0021ff"/><stop offset="0.682" stop-color="#00f"/><stop offset="0.853" stop-color="#000"/><stop offset="1.000" stop-color="#000"/></linearGradient><linearGradient id="a80" x1="0" y1="0" x2="0" y2="1"><stop offset="0.000" stop-color="#000"/><stop offset="0.142" stop-color="#000"/><stop offset="0.145" stop-color="#00000d"/><stop offset="0.165" stop-color="#0000c7"/><stop offset="0.168" stop-color="#003bff"/><stop offset="0.171" stop-color="#00baff"/><stop offset="0.173" stop-color="#00ffcf"/><stop offset="0.176" stop-color="#00ff8d"/><stop offset="0.182" stop-color="#00ff96"/><stop offset="0.185" stop-color="#00fff6"/><stop offset="0.191" stop-color="#0041ff"/><stop offset="0.194" stop-color="#002dff"/><stop offset="0.217" stop-color="#0001ff"/><stop offset="0.295" stop-color="#00007a"/><stop offset="0.361" stop-color="#002"/><stop offset="0.471" stop-color="#0000d1"/><stop offset="0.488" stop-color="#0000fc"/><stop offset="0.517" stop-color="#0048ff"/><stop offset="0.552" stop-color="#00e9ff"/><stop offset="0.555" stop-color="#0fd"/><stop offset="0.578" stop-color="#00ff74"/><stop offset="0.581" stop-color="#00ff3e"/><stop offset="0.584" stop-color="#3aff00"/><stop offset="0.587" stop-color="#fff700"/><stop offset="0.590" stop-color="#ff5400"/><stop offset="0.592" stop-color="#90ff00"/><stop offset="0.595" stop-color="#00ff1a"/><stop offset="0.598" stop-color="#00ff6b"/><stop offset="0.621" stop-color="#00ffe2"/><stop offset="0.624" stop-color="#00e4ff"/><stop offset="0.656" stop-color="#004eff"/><stop offset="0.705" stop-color="#00f"/><stop offset="0.844" stop-color="#000002"/><stop offset="1.000" stop-color="#000"/></linearGradient><linearGradient id="a81" x1="0" y1="0" x2="0" y2="1"><stop offset="0.000" stop-color="#000"/><stop offset="0.139" stop-color="#000"/><stop offset="0.142" stop-color="#000005"/><stop offset="0.162" stop-color="#0000a4"/><stop offset="0.165" stop-color="#0000d8"/><stop offset="0.168" stop-color="#0054ff"/><stop offset="0.171" stop-color="#00deff"/><stop offset="0.173" stop-color="#00ffab"/><stop offset="0.179" stop-color="#00ffab"/><stop offset="0.182" stop-color="#00f0ff"/><stop offset="0.188" stop-color="#0018ff"/><stop offset="0.191" stop-color="#0003ff"/><stop offset="0.280" stop-color="#00005a"/><stop offset="0.353" stop-color="#000007"/><stop offset="0.474" stop-color="#0000b3"/><stop offset="0.503" stop-color="#0000fb"/><stop offset="0.517" stop-color="#02f"/><stop offset="0.552" stop-color="#00cdff"/><stop offset="0.555" stop-color="#00ffdb"/><stop offset="0.575" stop-color="#00ff7f"/><stop offset="0.578" stop-color="#00ff65"/><stop offset="0.581" stop-color="#00ff14"/><stop offset="0.584" stop-color="#8cff00"/><stop offset="0.587" stop-color="#ff7000"/><stop offset="0.590" stop-color="#fff000"/><stop offset="0.592" stop-color="#3bff00"/><stop offset="0.595" stop-color="#00ff40"/><stop offset="0.598" stop-color="#00ff75"/><stop offset="0.618" stop-color="#00ffd9"/><stop offset="0.621" stop-color="#00cfff"/><stop offset="0.656" stop-color="#0023ff"/><stop offset="0.679" stop-color="#0001ff"/><stop offset="0.853" stop-color="#000"/><stop offset="1.000" stop-color="#000"/></linearGradient><linearGradient id="a82" x1="0" y1="0" x2="0" y2="1"><stop offset="0.000" stop-color="#000"/><stop offset="0.139" stop-color="#000"/><stop offset="0.162" stop-color="#0000d6"/><stop offset="0.165" stop-color="#0040ff"/><stop offset="0.168" stop-color="#00bfff"/><stop offset="0.171" stop-color="#00ffcd"/><stop offset="0.176" stop-color="#00ffc8"/><stop offset="0.179" stop-color="#00fff9"/><stop offset="0.185" stop-color="#003fff"/><stop offset="0.188" stop-color="#002bff"/><stop offset="0.205" stop-color="#0000fe"/><stop offset="0.286" stop-color="#00004e"/><stop offset="0.321" stop-color="#000017"/><stop offset="0.347" stop-color="#000"/><stop offset="0.474" stop-color="#0000d3"/><stop offset="0.488" stop-color="#0000fa"/><stop offset="0.517" stop-color="#004fff"/><stop offset="0.549" stop-color="#00e4ff"/><stop offset="0.552" stop-color="#00ffe5"/><stop offset="0.575" stop-color="#00ff7a"/><stop offset="0.578" stop-color="#00ff4b"/><stop offset="0.581" stop-color="#29ff00"/><stop offset="0.584" stop-color="#faff00"/><stop offset="0.587" stop-color="#ff6b00"/><stop offset="0.590" stop-color="#a0ff00"/><stop offset="0.592" stop-color="#02ff00"/><stop offset="0.595" stop-color="#00ff57"/><stop offset="0.598" stop-color="#00ff7b"/><stop offset="0.618" stop-color="#00ffdc"/><stop offset="0.621" stop-color="#00ecff"/><stop offset="0.656" stop-color="#004dff"/><stop offset="0.708" stop-color="#0001ff"/><stop offset="0.870" stop-color="#000"/><stop offset="1.000" stop-color="#000"/></linearGradient><linearGradient id="a83" x1="0" y1="0" x2="0" y2="1"><stop offset="0.000" stop-color="#000"/><stop offset="0.136" stop-color="#000"/><stop offset="0.159" stop-color="#0000a9"/><stop offset="0.162" stop-color="#0000d2"/><stop offset="0.165" stop-color="#004eff"/><stop offset="0.168" stop-color="#00dbff"/><stop offset="0.171" stop-color="#00ffe6"/><stop offset="0.173" stop-color="#00ffe6"/><stop offset="0.176" stop-color="#00e4ff"/><stop offset="0.182" stop-color="#000aff"/><stop offset="0.185" stop-color="#0000fa"/><stop offset="0.269" stop-color="#000050"/><stop offset="0.309" stop-color="#000019"/><stop offset="0.341" stop-color="#000"/><stop offset="0.474" stop-color="#0000ad"/><stop offset="0.506" stop-color="#0000fe"/><stop offset="0.517" stop-color="#0020ff"/><stop offset="0.549" stop-color="#00c0ff"/><stop offset="0.552" stop-color="#00ffe1"/><stop offset="0.575" stop-color="#00ff6e"/><stop offset="0.578" stop-color="#00ff23"/><stop offset="0.581" stop-color="#7dff00"/><stop offset="0.584" stop-color="#ff7600"/><stop offset="0.587" stop-color="#fff200"/><stop offset="0.590" stop-color="#4fff00"/><stop offset="0.592" stop-color="#00ff28"/><stop offset="0.595" stop-color="#00ff68"/><stop offset="0.598" stop-color="#00ff7e"/><stop offset="0.618" stop-color="#00ffe4"/><stop offset="0.621" stop-color="#00bcff"/><stop offset="0.653" stop-color="#001dff"/><stop offset="0.673" stop-color="#00f"/><stop offset="0.867" stop-color="#000002"/><stop offset="1.000" stop-color="#000"/></linearGradient><linearGradient id="a84" x1="0" y1="0" x2="0" y2="1"><stop offset="0.000" stop-color="#000"/><stop offset="0.133" stop-color="#000"/><stop offset="0.156" stop-color="#0000c8"/><stop offset="0.159" stop-color="#00f"/><stop offset="0.165" stop-color="#00fffd"/><stop offset="0.171" stop-color="#00fff9"/><stop offset="0.173" stop-color="#00caff"/><stop offset="0.176" stop-color="#0063ff"/><stop offset="0.179" stop-color="#0018ff"/><stop offset="0.188" stop-color="#0000fb"/><stop offset="0.249" stop-color="#000054"/><stop offset="0.298" stop-color="#000001"/><stop offset="0.355" stop-color="#000001"/><stop offset="0.477" stop-color="#0000c6"/><stop offset="0.497" stop-color="#0002ff"/><stop offset="0.517" stop-color="#0043ff"/><stop offset="0.549" stop-color="#00dcff"/><stop offset="0.552" stop-color="#00ffde"/><stop offset="0.572" stop-color="#00ff7d"/><stop offset="0.575" stop-color="#00ff58"/><stop offset="0.578" stop-color="#18ff00"/><stop offset="0.581" stop-color="#edff00"/><stop offset="0.584" stop-color="#ff8100"/><stop offset="0.587" stop-color="#af0"/><stop offset="0.590" stop-color="#17ff00"/><stop offset="0.592" stop-color="#0f4"/><stop offset="0.595" stop-color="#00ff71"/><stop offset="0.616" stop-color="#00ffd7"/><stop offset="0.618" stop-color="#00e2ff"/><stop offset="0.653" stop-color="#003cff"/><stop offset="0.697" stop-color="#0001ff"/><stop offset="0.887" stop-color="#000"/><stop offset="1.000" stop-color="#000"/></linearGradient><linearGradient id="a85" x1="0" y1="0" x2="0" y2="1"><stop offset="0.000" stop-color="#000"/><stop offset="0.127" stop-color="#000"/><stop offset="0.130" stop-color="#000006"/><stop offset="0.153" stop-color="#0000dc"/><stop offset="0.156" stop-color="#0020ff"/><stop offset="0.159" stop-color="#00a0ff"/><stop offset="0.162" stop-color="#00fdff"/><stop offset="0.168" stop-color="#00fdff"/><stop offset="0.171" stop-color="#00abff"/><stop offset="0.173" stop-color="#0046ff"/><stop offset="0.176" stop-color="#0027ff"/><stop offset="0.188" stop-color="#0004ff"/><stop offset="0.257" stop-color="#00004c"/><stop offset="0.306" stop-color="#000"/><stop offset="0.350" stop-color="#000003"/><stop offset="0.474" stop-color="#0000d2"/><stop offset="0.488" stop-color="#0000fb"/><stop offset="0.514" stop-color="#004bff"/><stop offset="0.549" stop-color="#0ef"/><stop offset="0.552" stop-color="#00ffd8"/><stop offset="0.572" stop-color="#00ff75"/><stop offset="0.575" stop-color="#00ff31"/><stop offset="0.578" stop-color="#6dff00"/><stop offset="0.581" stop-color="#ff7b00"/><stop offset="0.584" stop-color="#fff700"/><stop offset="0.587" stop-color="#5eff00"/><stop offset="0.590" stop-color="#00ff14"/><stop offset="0.592" stop-color="#00ff58"/><stop offset="0.595" stop-color="#00ff78"/><stop offset="0.616" stop-color="#00ffe0"/><stop offset="0.618" stop-color="#00e6ff"/><stop offset="0.650" stop-color="#0051ff"/><stop offset="0.705" stop-color="#0000fe"/><stop offset="0.884" stop-color="#000001"/><stop offset="1.000" stop-color="#000"/></linearGradient><linearGradient id="a86" x1="0" y1="0" x2="0" y2="1"><stop offset="0.000" stop-color="#000"/><stop offset="0.124" stop-color="#000"/><stop offset="0.150" stop-color="#0000b3"/><stop offset="0.153" stop-color="#0000f7"/><stop offset="0.156" stop-color="#0078ff"/><stop offset="0.159" stop-color="#00c1ff"/><stop offset="0.165" stop-color="#00b3ff"/><stop offset="0.168" stop-color="#04f"/><stop offset="0.171" stop-color="#0000f4"/><stop offset="0.243" stop-color="#00004c"/><stop offset="0.277" stop-color="#000016"/><stop offset="0.303" stop-color="#000"/><stop offset="0.341" stop-color="#000"/><stop offset="0.399" stop-color="#000046"/><stop offset="0.474" stop-color="#0000a9"/><stop offset="0.503" stop-color="#0000fc"/><stop offset="0.514" stop-color="#0027ff"/><stop offset="0.543" stop-color="#00bdff"/><stop offset="0.546" stop-color="#0fd"/><stop offset="0.569" stop-color="#00ff68"/><stop offset="0.572" stop-color="#00ff15"/><stop offset="0.575" stop-color="#94ff00"/><stop offset="0.578" stop-color="#ff5600"/><stop offset="0.581" stop-color="#f0ff00"/><stop offset="0.584" stop-color="#63ff00"/><stop offset="0.587" stop-color="#00ff02"/><stop offset="0.590" stop-color="#00ff45"/><stop offset="0.592" stop-color="#00ff6c"/><stop offset="0.598" stop-color="#00ff81"/><stop offset="0.613" stop-color="#00ffe0"/><stop offset="0.616" stop-color="#00b7ff"/><stop offset="0.647" stop-color="#0015ff"/><stop offset="0.659" stop-color="#00f"/><stop offset="0.720" stop-color="#0000a4"/><stop offset="0.855" stop-color="#000"/><stop offset="1.000" stop-color="#000"/></linearGradient><linearGradient id="a87" x1="0" y1="0" x2="0" y2="1"><stop offset="0.000" stop-color="#000"/><stop offset="0.121" stop-color="#000"/><stop offset="0.147" stop-color="#0000c5"/><stop offset="0.150" stop-color="#0017ff"/><stop offset="0.153" stop-color="#0098ff"/><stop offset="0.156" stop-color="#00b8ff"/><stop offset="0.159" stop-color="#00b8ff"/><stop offset="0.162" stop-color="#008eff"/><stop offset="0.165" stop-color="#0026ff"/><stop offset="0.168" stop-color="#0000f8"/><stop offset="0.223" stop-color="#00004d"/><stop offset="0.249" stop-color="#000016"/><stop offset="0.269" stop-color="#000"/><stop offset="0.350" stop-color="#000003"/><stop offset="0.474" stop-color="#0000b4"/><stop offset="0.494" stop-color="#0000fc"/><stop offset="0.506" stop-color="#002aff"/><stop offset="0.538" stop-color="#00caff"/><stop offset="0.540" stop-color="#00ffdc"/><stop offset="0.564" stop-color="#00ff72"/><stop offset="0.566" stop-color="#00ff3b"/><stop offset="0.569" stop-color="#3bff00"/><stop offset="0.572" stop-color="#fffd00"/><stop offset="0.575" stop-color="#ffc400"/><stop offset="0.578" stop-color="#b7ff00"/><stop offset="0.581" stop-color="#4fff00"/><stop offset="0.584" stop-color="#0f0"/><stop offset="0.590" stop-color="#00ff5f"/><stop offset="0.592" stop-color="#00ff75"/><stop offset="0.598" stop-color="#00ff82"/><stop offset="0.610" stop-color="#00ffd5"/><stop offset="0.613" stop-color="#0cf"/><stop offset="0.647" stop-color="#0020ff"/><stop offset="0.668" stop-color="#0000fd"/><stop offset="0.714" stop-color="#0000b3"/><stop offset="0.855" stop-color="#000002"/><stop offset="1.000" stop-color="#000"/></linearGradient><linearGradient id="a88" x1="0" y1="0" x2="0" y2="1"><stop offset="0.000" stop-color="#000"/><stop offset="0.116" stop-color="#000"/><stop offset="0.142" stop-color="#0000e7"/><stop offset="0.145" stop-color="#001fff"/><stop offset="0.147" stop-color="#009fff"/><stop offset="0.150" stop-color="#00c0ff"/><stop offset="0.153" stop-color="#00c0ff"/><stop offset="0.156" stop-color="#009eff"/><stop offset="0.159" stop-color="#0038ff"/><stop offset="0.171" stop-color="#0000fd"/><stop offset="0.225" stop-color="#000045"/><stop offset="0.249" stop-color="#000010"/><stop offset="0.263" stop-color="#000"/><stop offset="0.347" stop-color="#000003"/><stop offset="0.471" stop-color="#0000d4"/><stop offset="0.480" stop-color="#0000fa"/><stop offset="0.532" stop-color="#00edff"/><stop offset="0.535" stop-color="#00ffd9"/><stop offset="0.558" stop-color="#00ff78"/><stop offset="0.561" stop-color="#00ff53"/><stop offset="0.564" stop-color="#01ff00"/><stop offset="0.566" stop-color="#90ff00"/><stop offset="0.569" stop-color="#f90"/><stop offset="0.572" stop-color="#f1ff00"/><stop offset="0.575" stop-color="#8fff00"/><stop offset="0.581" stop-color="#0f0"/><stop offset="0.584" stop-color="#00ff30"/><stop offset="0.590" stop-color="#00ff6b"/><stop offset="0.598" stop-color="#00ff80"/><stop offset="0.610" stop-color="#00ffd2"/><stop offset="0.613" stop-color="#00ecff"/><stop offset="0.647" stop-color="#004aff"/><stop offset="0.694" stop-color="#0001ff"/><stop offset="0.887" stop-color="#000"/><stop offset="1.000" stop-color="#000"/></linearGradient><linearGradient id="a89" x1="0" y1="0" x2="0" y2="1"><stop offset="0.000" stop-color="#000"/><stop offset="0.110" stop-color="#000001"/><stop offset="0.136" stop-color="#0004ff"/><stop offset="0.139" stop-color="#003dff"/><stop offset="0.142" stop-color="#00b7ff"/><stop offset="0.147" stop-color="#00b7ff"/><stop offset="0.153" stop-color="#0043ff"/><stop offset="0.173" stop-color="#0000fa"/><stop offset="0.231" stop-color="#000047"/><stop offset="0.254" stop-color="#000013"/><stop offset="0.272" stop-color="#000"/><stop offset="0.341" stop-color="#000002"/><stop offset="0.468" stop-color="#0000e6"/><stop offset="0.474" stop-color="#0002ff"/><stop offset="0.529" stop-color="#00feff"/><stop offset="0.532" stop-color="#00ffd7"/><stop offset="0.552" stop-color="#0f7"/><stop offset="0.555" stop-color="#0f5"/><stop offset="0.558" stop-color="#00ff0e"/><stop offset="0.561" stop-color="#69ff00"/><stop offset="0.564" stop-color="#ffe700"/><stop offset="0.566" stop-color="#fff300"/><stop offset="0.572" stop-color="#65ff00"/><stop offset="0.575" stop-color="#26ff00"/><stop offset="0.578" stop-color="#00ff0d"/><stop offset="0.587" stop-color="#00ff68"/><stop offset="0.598" stop-color="#0f8"/><stop offset="0.610" stop-color="#00ffda"/><stop offset="0.613" stop-color="#00f9ff"/><stop offset="0.647" stop-color="#005fff"/><stop offset="0.708" stop-color="#0000fe"/><stop offset="0.890" stop-color="#000"/><stop offset="1.000" stop-color="#000"/></linearGradient><linearGradient id="a90" x1="0" y1="0" x2="0" y2="1"><stop offset="0.000" stop-color="#000"/><stop offset="0.101" stop-color="#000"/><stop offset="0.104" stop-color="#00000b"/><stop offset="0.127" stop-color="#0000f4"/><stop offset="0.130" stop-color="#01f"/><stop offset="0.133" stop-color="#0048ff"/><stop offset="0.136" stop-color="#009cff"/><stop offset="0.142" stop-color="#009cff"/><stop offset="0.145" stop-color="#004aff"/><stop offset="0.162" stop-color="#0000fc"/><stop offset="0.208" stop-color="#000049"/><stop offset="0.240" stop-color="#000"/><stop offset="0.350" stop-color="#000"/><stop offset="0.468" stop-color="#0000e6"/><stop offset="0.474" stop-color="#0000fe"/><stop offset="0.497" stop-color="#007cff"/><stop offset="0.526" stop-color="#00fdff"/><stop offset="0.529" stop-color="#00ffdb"/><stop offset="0.540" stop-color="#00ff8e"/><stop offset="0.546" stop-color="#0f7"/><stop offset="0.549" stop-color="#00ff59"/><stop offset="0.552" stop-color="#00ff1c"/><stop offset="0.555" stop-color="#48ff00"/><stop offset="0.558" stop-color="#daff00"/><stop offset="0.561" stop-color="#ffe100"/><stop offset="0.564" stop-color="#c9ff00"/><stop offset="0.566" stop-color="#81ff00"/><stop offset="0.572" stop-color="#10ff00"/><stop offset="0.575" stop-color="#00ff1a"/><stop offset="0.584" stop-color="#00ff68"/><stop offset="0.595" stop-color="#00ff7f"/><stop offset="0.607" stop-color="#00ffd9"/><stop offset="0.610" stop-color="#00fdff"/><stop offset="0.645" stop-color="#0064ff"/><stop offset="0.702" stop-color="#0000fd"/><stop offset="0.864" stop-color="#000002"/><stop offset="1.000" stop-color="#000"/></linearGradient><linearGradient id="a91" x1="0" y1="0" x2="0" y2="1"><stop offset="0.000" stop-color="#000"/><stop offset="0.095" stop-color="#000"/><stop offset="0.121" stop-color="#0000fa"/><stop offset="0.124" stop-color="#0016ff"/><stop offset="0.130" stop-color="#0078ff"/><stop offset="0.133" stop-color="#0078ff"/><stop offset="0.139" stop-color="#0047ff"/><stop offset="0.159" stop-color="#0000f9"/><stop offset="0.214" stop-color="#004"/><stop offset="0.237" stop-color="#00000f"/><stop offset="0.251" stop-color="#000"/><stop offset="0.344" stop-color="#000"/><stop offset="0.471" stop-color="#0000f6"/><stop offset="0.523" stop-color="#00f6ff"/><stop offset="0.538" stop-color="#0f8"/><stop offset="0.543" stop-color="#00ff71"/><stop offset="0.546" stop-color="#00ff4d"/><stop offset="0.549" stop-color="#00ff0b"/><stop offset="0.552" stop-color="#5dff00"/><stop offset="0.555" stop-color="#f1ff00"/><stop offset="0.558" stop-color="#fff600"/><stop offset="0.566" stop-color="#4f0"/><stop offset="0.569" stop-color="#14ff00"/><stop offset="0.572" stop-color="#00ff14"/><stop offset="0.581" stop-color="#00ff61"/><stop offset="0.595" stop-color="#00ff84"/><stop offset="0.607" stop-color="#00ffd6"/><stop offset="0.610" stop-color="#00fcff"/><stop offset="0.645" stop-color="#0061ff"/><stop offset="0.708" stop-color="#0000fd"/><stop offset="0.887" stop-color="#000"/><stop offset="1.000" stop-color="#000"/></linearGradient><linearGradient id="a92" x1="0" y1="0" x2="0" y2="1"><stop offset="0.000" stop-color="#000"/><stop offset="0.090" stop-color="#000"/><stop offset="0.116" stop-color="#0000fe"/><stop offset="0.118" stop-color="#001bff"/><stop offset="0.124" stop-color="#005cff"/><stop offset="0.127" stop-color="#005cff"/><stop offset="0.153" stop-color="#0000fd"/><stop offset="0.214" stop-color="#000047"/><stop offset="0.254" stop-color="#000"/><stop offset="0.341" stop-color="#000"/><stop offset="0.465" stop-color="#0000e8"/><stop offset="0.471" stop-color="#0001ff"/><stop offset="0.494" stop-color="#007eff"/><stop offset="0.523" stop-color="#00feff"/><stop offset="0.526" stop-color="#00ffd8"/><stop offset="0.535" stop-color="#00ff8c"/><stop offset="0.540" stop-color="#00ff74"/><stop offset="0.543" stop-color="#00ff53"/><stop offset="0.546" stop-color="#00ff14"/><stop offset="0.549" stop-color="#4eff00"/><stop offset="0.552" stop-color="#daff00"/><stop offset="0.555" stop-color="#fff300"/><stop offset="0.564" stop-color="#50ff00"/><stop offset="0.569" stop-color="#00ff07"/><stop offset="0.578" stop-color="#00ff58"/><stop offset="0.584" stop-color="#00ff73"/><stop offset="0.595" stop-color="#00ff86"/><stop offset="0.613" stop-color="#00faff"/><stop offset="0.645" stop-color="#006aff"/><stop offset="0.720" stop-color="#0000fe"/><stop offset="0.913" stop-color="#000002"/><stop offset="1.000" stop-color="#000"/></linearGradient><linearGradient id="a93" x1="0" y1="0" x2="0" y2="1"><stop offset="0.000" stop-color="#000"/><stop offset="0.087" stop-color="#000"/><stop offset="0.116" stop-color="#0008ff"/><stop offset="0.118" stop-color="#0021ff"/><stop offset="0.124" stop-color="#0021ff"/><stop offset="0.133" stop-color="#0000fb"/><stop offset="0.194" stop-color="#000048"/><stop offset="0.220" stop-color="#000012"/><stop offset="0.237" stop-color="#000"/><stop offset="0.347" stop-color="#000"/><stop offset="0.468" stop-color="#0000d7"/><stop offset="0.474" stop-color="#0000f5"/><stop offset="0.523" stop-color="#0ef"/><stop offset="0.526" stop-color="#00ffd0"/><stop offset="0.532" stop-color="#00ff92"/><stop offset="0.538" stop-color="#00ff76"/><stop offset="0.540" stop-color="#00ff59"/><stop offset="0.543" stop-color="#00ff1f"/><stop offset="0.546" stop-color="#3eff00"/><stop offset="0.549" stop-color="#c4ff00"/><stop offset="0.552" stop-color="#fff100"/><stop offset="0.561" stop-color="#57ff00"/><stop offset="0.566" stop-color="#01ff00"/><stop offset="0.575" stop-color="#00ff51"/><stop offset="0.584" stop-color="#0f7"/><stop offset="0.592" stop-color="#00ff7f"/><stop offset="0.607" stop-color="#00ffde"/><stop offset="0.610" stop-color="#00eaff"/><stop offset="0.645" stop-color="#004eff"/><stop offset="0.699" stop-color="#0000fe"/><stop offset="0.896" stop-color="#000"/><stop offset="1.000" stop-color="#000"/></linearGradient><linearGradient id="a94" x1="0" y1="0" x2="0" y2="1"><stop offset="0.000" stop-color="#000"/><stop offset="0.081" stop-color="#000"/><stop offset="0.084" stop-color="#000009"/><stop offset="0.113" stop-color="#0000f5"/><stop offset="0.116" stop-color="#0004ff"/><stop offset="0.121" stop-color="#0004ff"/><stop offset="0.150" stop-color="#0000a0"/><stop offset="0.188" stop-color="#00003e"/><stop offset="0.228" stop-color="#000"/><stop offset="0.350" stop-color="#000"/><stop offset="0.468" stop-color="#0000dc"/><stop offset="0.474" stop-color="#0000f7"/><stop offset="0.491" stop-color="#0065ff"/><stop offset="0.523" stop-color="#00f6ff"/><stop offset="0.526" stop-color="#00ffc7"/><stop offset="0.532" stop-color="#00ff80"/><stop offset="0.538" stop-color="#0f6"/><stop offset="0.540" stop-color="#00ff37"/><stop offset="0.543" stop-color="#1bff00"/><stop offset="0.546" stop-color="#96ff00"/><stop offset="0.549" stop-color="#ffe400"/><stop offset="0.552" stop-color="#d7ff00"/><stop offset="0.561" stop-color="#38ff00"/><stop offset="0.564" stop-color="#10ff00"/><stop offset="0.566" stop-color="#00ff12"/><stop offset="0.578" stop-color="#00ff67"/><stop offset="0.592" stop-color="#00ff7f"/><stop offset="0.607" stop-color="#00ffe2"/><stop offset="0.610" stop-color="#0ef"/><stop offset="0.642" stop-color="#005bff"/><stop offset="0.705" stop-color="#0000fe"/><stop offset="0.899" stop-color="#000"/><stop offset="1.000" stop-color="#000"/></linearGradient><linearGradient id="a95" x1="0" y1="0" x2="0" y2="1"><stop offset="0.000" stop-color="#000"/><stop offset="0.078" stop-color="#000"/><stop offset="0.113" stop-color="#0000a5"/><stop offset="0.168" stop-color="#000038"/><stop offset="0.211" stop-color="#000002"/><stop offset="0.353" stop-color="#000"/><stop offset="0.471" stop-color="#0000a4"/><stop offset="0.486" stop-color="#0000f9"/><stop offset="0.488" stop-color="#000cff"/><stop offset="0.523" stop-color="#00bfff"/><stop offset="0.526" stop-color="#00ffc8"/><stop offset="0.532" stop-color="#00ff81"/><stop offset="0.538" stop-color="#00ff61"/><stop offset="0.540" stop-color="#00ff28"/><stop offset="0.543" stop-color="#3cff00"/><stop offset="0.546" stop-color="#d0ff00"/><stop offset="0.549" stop-color="#f9ff00"/><stop offset="0.555" stop-color="#85ff00"/><stop offset="0.564" stop-color="#05ff00"/><stop offset="0.575" stop-color="#00ff5c"/><stop offset="0.584" stop-color="#00ff79"/><stop offset="0.592" stop-color="#00ff7f"/><stop offset="0.604" stop-color="#00ffd2"/><stop offset="0.607" stop-color="#00c0ff"/><stop offset="0.642" stop-color="#000fff"/><stop offset="0.653" stop-color="#00f"/><stop offset="0.725" stop-color="#0000a6"/><stop offset="0.896" stop-color="#000001"/><stop offset="1.000" stop-color="#000"/></linearGradient><linearGradient id="a96" x1="0" y1="0" x2="0" y2="1"><stop offset="0.000" stop-color="#000"/><stop offset="0.087" stop-color="#000"/><stop offset="0.118" stop-color="#00009f"/><stop offset="0.121" stop-color="#0000a1"/><stop offset="0.176" stop-color="#000038"/><stop offset="0.220" stop-color="#000003"/><stop offset="0.347" stop-color="#000"/><stop offset="0.471" stop-color="#0000b8"/><stop offset="0.483" stop-color="#00f"/><stop offset="0.486" stop-color="#0013ff"/><stop offset="0.523" stop-color="#00d2ff"/><stop offset="0.526" stop-color="#00ffc6"/><stop offset="0.532" stop-color="#00ff80"/><stop offset="0.535" stop-color="#00ff79"/><stop offset="0.538" stop-color="#00ff5a"/><stop offset="0.540" stop-color="#00ff13"/><stop offset="0.543" stop-color="#67ff00"/><stop offset="0.546" stop-color="#ffe300"/><stop offset="0.549" stop-color="#dbff00"/><stop offset="0.558" stop-color="#42ff00"/><stop offset="0.564" stop-color="#00ff07"/><stop offset="0.575" stop-color="#00ff60"/><stop offset="0.584" stop-color="#00ff7a"/><stop offset="0.592" stop-color="#00ff80"/><stop offset="0.604" stop-color="#00ffe2"/><stop offset="0.607" stop-color="#00c6ff"/><stop offset="0.639" stop-color="#0029ff"/><stop offset="0.668" stop-color="#0000fe"/><stop offset="0.876" stop-color="#000"/><stop offset="1.000" stop-color="#000"/></linearGradient><linearGradient id="a97" x1="0" y1="0" x2="0" y2="1"><stop offset="0.000" stop-color="#000"/><stop offset="0.101" stop-color="#000"/><stop offset="0.133" stop-color="#00009a"/><stop offset="0.136" stop-color="#00009c"/><stop offset="0.185" stop-color="#000036"/><stop offset="0.223" stop-color="#000003"/><stop offset="0.347" stop-color="#000001"/><stop offset="0.471" stop-color="#0000c5"/><stop offset="0.480" stop-color="#0000fa"/><stop offset="0.483" stop-color="#000fff"/><stop offset="0.491" stop-color="#0045ff"/><stop offset="0.523" stop-color="#00dfff"/><stop offset="0.526" stop-color="#00ffca"/><stop offset="0.532" stop-color="#00ff85"/><stop offset="0.538" stop-color="#00ff64"/><stop offset="0.540" stop-color="#00ff2b"/><stop offset="0.543" stop-color="#3aff00"/><stop offset="0.546" stop-color="#d4ff00"/><stop offset="0.549" stop-color="#d5ff00"/><stop offset="0.558" stop-color="#3fff00"/><stop offset="0.564" stop-color="#00ff09"/><stop offset="0.575" stop-color="#00ff60"/><stop offset="0.584" stop-color="#00ff7a"/><stop offset="0.592" stop-color="#00ff80"/><stop offset="0.601" stop-color="#00ffcd"/><stop offset="0.604" stop-color="#00e1ff"/><stop offset="0.639" stop-color="#003aff"/><stop offset="0.679" stop-color="#0000fd"/><stop offset="0.870" stop-color="#000002"/><stop offset="1.000" stop-color="#000"/></linearGradient><linearGradient id="a98" x1="0" y1="0" x2="0" y2="1"><stop offset="0.000" stop-color="#000"/><stop offset="0.121" stop-color="#000"/><stop offset="0.156" stop-color="#000093"/><stop offset="0.194" stop-color="#000028"/><stop offset="0.217" stop-color="#000"/><stop offset="0.350" stop-color="#000"/><stop offset="0.474" stop-color="#0000c1"/><stop offset="0.483" stop-color="#0000f9"/><stop offset="0.486" stop-color="#0010ff"/><stop offset="0.491" stop-color="#003aff"/><stop offset="0.523" stop-color="#00d4ff"/><stop offset="0.526" stop-color="#00ffdc"/><stop offset="0.532" stop-color="#00ff97"/><stop offset="0.538" stop-color="#00ff68"/><stop offset="0.543" stop-color="#00ff10"/><stop offset="0.546" stop-color="#2eff00"/><stop offset="0.552" stop-color="#c0ff00"/><stop offset="0.561" stop-color="#54ff00"/><stop offset="0.569" stop-color="#00ff05"/><stop offset="0.581" stop-color="#00ff5b"/><stop offset="0.592" stop-color="#00ff82"/><stop offset="0.601" stop-color="#00ffd5"/><stop offset="0.604" stop-color="#00d8ff"/><stop offset="0.636" stop-color="#003eff"/><stop offset="0.673" stop-color="#0000fd"/><stop offset="0.850" stop-color="#000001"/><stop offset="1.000" stop-color="#000"/></linearGradient><linearGradient id="a99" x1="0" y1="0" x2="0" y2="1"><stop offset="0.000" stop-color="#000"/><stop offset="0.145" stop-color="#000"/><stop offset="0.179" stop-color="#00a"/><stop offset="0.185" stop-color="#00009f"/><stop offset="0.188" stop-color="#007"/><stop offset="0.197" stop-color="#00003c"/><stop offset="0.211" stop-color="#000"/><stop offset="0.350" stop-color="#000"/><stop offset="0.477" stop-color="#0000df"/><stop offset="0.483" stop-color="#000cff"/><stop offset="0.494" stop-color="#0064ff"/><stop offset="0.526" stop-color="#00f5ff"/><stop offset="0.529" stop-color="#00ffce"/><stop offset="0.535" stop-color="#00ff8d"/><stop offset="0.543" stop-color="#00ff4e"/><stop offset="0.549" stop-color="#03ff00"/><stop offset="0.555" stop-color="#73ff00"/><stop offset="0.558" stop-color="#79ff00"/><stop offset="0.569" stop-color="#00ff04"/><stop offset="0.581" stop-color="#00ff5a"/><stop offset="0.592" stop-color="#00ff82"/><stop offset="0.604" stop-color="#00ffe5"/><stop offset="0.607" stop-color="#00edff"/><stop offset="0.639" stop-color="#005aff"/><stop offset="0.699" stop-color="#0000fe"/><stop offset="0.864" stop-color="#000001"/><stop offset="1.000" stop-color="#000"/></linearGradient><linearGradient id="a100" x1="0" y1="0" x2="0" y2="1"><stop offset="0.000" stop-color="#000"/><stop offset="0.147" stop-color="#000"/><stop offset="0.182" stop-color="#00007c"/><stop offset="0.185" stop-color="#00007c"/><stop offset="0.194" stop-color="#000036"/><stop offset="0.205" stop-color="#000002"/><stop offset="0.353" stop-color="#000001"/><stop offset="0.480" stop-color="#0000d5"/><stop offset="0.486" stop-color="#00f"/><stop offset="0.497" stop-color="#0059ff"/><stop offset="0.529" stop-color="#00edff"/><stop offset="0.532" stop-color="#00ffce"/><stop offset="0.538" stop-color="#00ff94"/><stop offset="0.546" stop-color="#00ff5c"/><stop offset="0.552" stop-color="#00ff19"/><stop offset="0.555" stop-color="#13ff00"/><stop offset="0.558" stop-color="#46ff00"/><stop offset="0.561" stop-color="#63ff00"/><stop offset="0.569" stop-color="#01ff00"/><stop offset="0.578" stop-color="#00ff49"/><stop offset="0.592" stop-color="#00ff8a"/><stop offset="0.601" stop-color="#00ffcf"/><stop offset="0.604" stop-color="#00efff"/><stop offset="0.639" stop-color="#004dff"/><stop offset="0.697" stop-color="#0000fe"/><stop offset="0.879" stop-color="#000"/><stop offset="1.000" stop-color="#000"/></linearGradient><linearGradient id="a101" x1="0" y1="0" x2="0" y2="1"><stop offset="0.000" stop-color="#000"/><stop offset="0.150" stop-color="#000"/><stop offset="0.185" stop-color="#000056"/><stop offset="0.188" stop-color="#000056"/><stop offset="0.191" stop-color="#00003a"/><stop offset="0.199" stop-color="#000013"/><stop offset="0.208" stop-color="#000"/><stop offset="0.347" stop-color="#000001"/><stop offset="0.480" stop-color="#0000d5"/><stop offset="0.488" stop-color="#000eff"/><stop offset="0.497" stop-color="#0050ff"/><stop offset="0.529" stop-color="#00e5ff"/><stop offset="0.532" stop-color="#00ffe4"/><stop offset="0.543" stop-color="#00ff7f"/><stop offset="0.549" stop-color="#00ff67"/><stop offset="0.558" stop-color="#00ff0c"/><stop offset="0.561" stop-color="#1eff00"/><stop offset="0.564" stop-color="#4dff00"/><stop offset="0.569" stop-color="#06ff00"/><stop offset="0.572" stop-color="#00ff18"/><stop offset="0.581" stop-color="#00ff5e"/><stop offset="0.590" stop-color="#00ff7f"/><stop offset="0.601" stop-color="#00ffd9"/><stop offset="0.604" stop-color="#00ebff"/><stop offset="0.639" stop-color="#004eff"/><stop offset="0.697" stop-color="#00f"/><stop offset="0.873" stop-color="#000002"/><stop offset="1.000" stop-color="#000"/></linearGradient><linearGradient id="a102" x1="0" y1="0" x2="0" y2="1"><stop offset="0.000" stop-color="#000"/><stop offset="0.150" stop-color="#000"/><stop offset="0.185" stop-color="#000034"/><stop offset="0.191" stop-color="#000034"/><stop offset="0.194" stop-color="#00001c"/><stop offset="0.205" stop-color="#000"/><stop offset="0.344" stop-color="#000"/><stop offset="0.483" stop-color="#0000e6"/><stop offset="0.486" stop-color="#0000fc"/><stop offset="0.488" stop-color="#0014ff"/><stop offset="0.500" stop-color="#0068ff"/><stop offset="0.532" stop-color="#00f8ff"/><stop offset="0.535" stop-color="#0fd"/><stop offset="0.555" stop-color="#00ff65"/><stop offset="0.564" stop-color="#00ff02"/><stop offset="0.566" stop-color="#2bff00"/><stop offset="0.572" stop-color="#00ff09"/><stop offset="0.581" stop-color="#00ff62"/><stop offset="0.590" stop-color="#00ff8e"/><stop offset="0.598" stop-color="#00ffd1"/><stop offset="0.601" stop-color="#00fdff"/><stop offset="0.636" stop-color="#0061ff"/><stop offset="0.702" stop-color="#0000fd"/><stop offset="0.850" stop-color="#000"/><stop offset="1.000" stop-color="#000"/></linearGradient><linearGradient id="a103" x1="0" y1="0" x2="0" y2="1"><stop offset="0.000" stop-color="#000"/><stop offset="0.150" stop-color="#000"/><stop offset="0.185" stop-color="#00002c"/><stop offset="0.191" stop-color="#00002c"/><stop offset="0.194" stop-color="#000016"/><stop offset="0.202" stop-color="#000"/><stop offset="0.353" stop-color="#000"/><stop offset="0.486" stop-color="#0000c9"/><stop offset="0.494" stop-color="#0009ff"/><stop offset="0.503" stop-color="#0047ff"/><stop offset="0.535" stop-color="#00e0ff"/><stop offset="0.538" stop-color="#00ffdb"/><stop offset="0.561" stop-color="#00ff63"/><stop offset="0.569" stop-color="#0aff00"/><stop offset="0.572" stop-color="#18ff00"/><stop offset="0.575" stop-color="#00ff1b"/><stop offset="0.581" stop-color="#00ff65"/><stop offset="0.598" stop-color="#00ffdf"/><stop offset="0.601" stop-color="#00daff"/><stop offset="0.633" stop-color="#0042ff"/><stop offset="0.673" stop-color="#0002ff"/><stop offset="0.827" stop-color="#000"/><stop offset="1.000" stop-color="#000"/></linearGradient><linearGradient id="a104" x1="0" y1="0" x2="0" y2="1"><stop offset="0.000" stop-color="#000"/><stop offset="0.150" stop-color="#000"/><stop offset="0.185" stop-color="#000028"/><stop offset="0.191" stop-color="#000028"/><stop offset="0.194" stop-color="#000015"/><stop offset="0.205" stop-color="#000"/><stop offset="0.350" stop-color="#000"/><stop offset="0.486" stop-color="#0000b9"/><stop offset="0.497" stop-color="#0003ff"/><stop offset="0.503" stop-color="#002cff"/><stop offset="0.535" stop-color="#00c8ff"/><stop offset="0.538" stop-color="#00ffe4"/><stop offset="0.564" stop-color="#00ff75"/><stop offset="0.572" stop-color="#00ff17"/><stop offset="0.575" stop-color="#1aff00"/><stop offset="0.578" stop-color="#0f3"/><stop offset="0.581" stop-color="#00ff68"/><stop offset="0.595" stop-color="#00ffd1"/><stop offset="0.598" stop-color="#00d5ff"/><stop offset="0.633" stop-color="#002aff"/><stop offset="0.662" stop-color="#0000fe"/><stop offset="0.818" stop-color="#000"/><stop offset="1.000" stop-color="#000"/></linearGradient><linearGradient id="a105" x1="0" y1="0" x2="0" y2="1"><stop offset="0.000" stop-color="#000"/><stop offset="0.150" stop-color="#000"/><stop offset="0.185" stop-color="#00002d"/><stop offset="0.191" stop-color="#00002d"/><stop offset="0.194" stop-color="#000017"/><stop offset="0.202" stop-color="#000001"/><stop offset="0.355" stop-color="#000"/><stop offset="0.488" stop-color="#00c"/><stop offset="0.497" stop-color="#000dff"/><stop offset="0.506" stop-color="#004dff"/><stop offset="0.538" stop-color="#00e4ff"/><stop offset="0.540" stop-color="#00ffdc"/><stop offset="0.564" stop-color="#00ff74"/><stop offset="0.566" stop-color="#00ff5b"/><stop offset="0.572" stop-color="#00ff08"/><stop offset="0.575" stop-color="#06ff00"/><stop offset="0.581" stop-color="#00ff6c"/><stop offset="0.595" stop-color="#00ffd5"/><stop offset="0.598" stop-color="#00e4ff"/><stop offset="0.633" stop-color="#0041ff"/><stop offset="0.673" stop-color="#0000fc"/><stop offset="0.801" stop-color="#000"/><stop offset="1.000" stop-color="#000"/></linearGradient><linearGradient id="a106" x1="0" y1="0" x2="0" y2="1"><stop offset="0.000" stop-color="#000"/><stop offset="0.150" stop-color="#000"/><stop offset="0.185" stop-color="#000037"/><stop offset="0.191" stop-color="#000037"/><stop offset="0.194" stop-color="#000016"/><stop offset="0.199" stop-color="#000001"/><stop offset="0.367" stop-color="#000"/><stop offset="0.494" stop-color="#0000f3"/><stop offset="0.497" stop-color="#0016ff"/><stop offset="0.506" stop-color="#0072ff"/><stop offset="0.538" stop-color="#00fffe"/><stop offset="0.540" stop-color="#00ffe2"/><stop offset="0.564" stop-color="#00ff73"/><stop offset="0.572" stop-color="#09ff00"/><stop offset="0.575" stop-color="#00ff0a"/><stop offset="0.581" stop-color="#00ff6e"/><stop offset="0.595" stop-color="#00ffd5"/><stop offset="0.598" stop-color="#00fff8"/><stop offset="0.633" stop-color="#006eff"/><stop offset="0.694" stop-color="#00f"/><stop offset="0.801" stop-color="#000"/><stop offset="1.000" stop-color="#000"/></linearGradient><linearGradient id="a107" x1="0" y1="0" x2="0" y2="1"><stop offset="0.000" stop-color="#000"/><stop offset="0.150" stop-color="#000"/><stop offset="0.185" stop-color="#000032"/><stop offset="0.191" stop-color="#000032"/><stop offset="0.194" stop-color="#000018"/><stop offset="0.202" stop-color="#000"/><stop offset="0.364" stop-color="#000"/><stop offset="0.491" stop-color="#0000db"/><stop offset="0.494" stop-color="#0000e3"/><stop offset="0.497" stop-color="#0002ff"/><stop offset="0.506" stop-color="#005aff"/><stop offset="0.538" stop-color="#00edff"/><stop offset="0.540" stop-color="#00ffe5"/><stop offset="0.564" stop-color="#00ff71"/><stop offset="0.569" stop-color="#00ff1f"/><stop offset="0.572" stop-color="#1eff00"/><stop offset="0.575" stop-color="#00ff16"/><stop offset="0.581" stop-color="#00ff6f"/><stop offset="0.598" stop-color="#00ffe3"/><stop offset="0.601" stop-color="#0ef"/><stop offset="0.633" stop-color="#005bff"/><stop offset="0.691" stop-color="#0000fd"/><stop offset="0.818" stop-color="#000"/><stop offset="1.000" stop-color="#000"/></linearGradient><linearGradient id="a108" x1="0" y1="0" x2="0" y2="1"><stop offset="0.000" stop-color="#000"/><stop offset="0.150" stop-color="#000"/><stop offset="0.185" stop-color="#00002a"/><stop offset="0.191" stop-color="#00002a"/><stop offset="0.205" stop-color="#000"/><stop offset="0.355" stop-color="#000"/><stop offset="0.491" stop-color="#0000c0"/><stop offset="0.500" stop-color="#00f"/><stop offset="0.503" stop-color="#0017ff"/><stop offset="0.540" stop-color="#00d9ff"/><stop offset="0.543" stop-color="#00ffda"/><stop offset="0.564" stop-color="#00ff7b"/><stop offset="0.566" stop-color="#00ff61"/><stop offset="0.572" stop-color="#04ff00"/><stop offset="0.575" stop-color="#08ff00"/><stop offset="0.581" stop-color="#00ff61"/><stop offset="0.584" stop-color="#00ff7c"/><stop offset="0.598" stop-color="#00ffdb"/><stop offset="0.601" stop-color="#00d5ff"/><stop offset="0.633" stop-color="#003aff"/><stop offset="0.671" stop-color="#0000fe"/><stop offset="0.827" stop-color="#000"/><stop offset="1.000" stop-color="#000"/></linearGradient><linearGradient id="a109" x1="0" y1="0" x2="0" y2="1"><stop offset="0.000" stop-color="#000"/><stop offset="0.150" stop-color="#000"/><stop offset="0.185" stop-color="#000037"/><stop offset="0.191" stop-color="#000037"/><stop offset="0.194" stop-color="#00001c"/><stop offset="0.202" stop-color="#000001"/><stop offset="0.361" stop-color="#000"/><stop offset="0.497" stop-color="#000aff"/><stop offset="0.509" stop-color="#0074ff"/><stop offset="0.540" stop-color="#00fffc"/><stop offset="0.566" stop-color="#00ff78"/><stop offset="0.572" stop-color="#00ff2b"/><stop offset="0.575" stop-color="#12ff00"/><stop offset="0.578" stop-color="#00ff04"/><stop offset="0.584" stop-color="#00ff6e"/><stop offset="0.601" stop-color="#00fff6"/><stop offset="0.610" stop-color="#00e6ff"/><stop offset="0.636" stop-color="#0071ff"/><stop offset="0.702" stop-color="#0001ff"/><stop offset="0.821" stop-color="#000"/><stop offset="1.000" stop-color="#000"/></linearGradient><linearGradient id="a110" x1="0" y1="0" x2="0" y2="1"><stop offset="0.000" stop-color="#000"/><stop offset="0.150" stop-color="#000"/><stop offset="0.185" stop-color="#000036"/><stop offset="0.191" stop-color="#000036"/><stop offset="0.194" stop-color="#000017"/><stop offset="0.202" stop-color="#000"/><stop offset="0.370" stop-color="#000"/><stop offset="0.497" stop-color="#0000ed"/><stop offset="0.500" stop-color="#0003ff"/><stop offset="0.512" stop-color="#0071ff"/><stop offset="0.543" stop-color="#0ff"/><stop offset="0.546" stop-color="#00ffe0"/><stop offset="0.569" stop-color="#00ff74"/><stop offset="0.575" stop-color="#00ff1f"/><stop offset="0.578" stop-color="#2f0"/><stop offset="0.581" stop-color="#00ff14"/><stop offset="0.584" stop-color="#00ff52"/><stop offset="0.587" stop-color="#00ff79"/><stop offset="0.598" stop-color="#00ffcf"/><stop offset="0.601" stop-color="#00fff9"/><stop offset="0.636" stop-color="#006bff"/><stop offset="0.699" stop-color="#0000fe"/><stop offset="0.818" stop-color="#000"/><stop offset="1.000" stop-color="#000"/></linearGradient><linearGradient id="a111" x1="0" y1="0" x2="0" y2="1"><stop offset="0.000" stop-color="#000"/><stop offset="0.150" stop-color="#000"/><stop offset="0.185" stop-color="#00002e"/><stop offset="0.191" stop-color="#00002e"/><stop offset="0.194" stop-color="#000015"/><stop offset="0.202" stop-color="#000"/><stop offset="0.364" stop-color="#000"/><stop offset="0.497" stop-color="#0000cf"/><stop offset="0.503" stop-color="#0000fb"/><stop offset="0.506" stop-color="#0014ff"/><stop offset="0.512" stop-color="#04f"/><stop offset="0.546" stop-color="#00e9ff"/><stop offset="0.549" stop-color="#00ffd9"/><stop offset="0.572" stop-color="#00ff6f"/><stop offset="0.578" stop-color="#00ff12"/><stop offset="0.581" stop-color="#3f0"/><stop offset="0.584" stop-color="#00ff25"/><stop offset="0.587" stop-color="#00ff63"/><stop offset="0.601" stop-color="#00ffe2"/><stop offset="0.604" stop-color="#00deff"/><stop offset="0.636" stop-color="#0047ff"/><stop offset="0.676" stop-color="#00f"/><stop offset="0.806" stop-color="#000001"/><stop offset="1.000" stop-color="#000"/></linearGradient><linearGradient id="a112" x1="0" y1="0" x2="0" y2="1"><stop offset="0.000" stop-color="#000"/><stop offset="0.150" stop-color="#000"/><stop offset="0.185" stop-color="#00002c"/><stop offset="0.191" stop-color="#00002c"/><stop offset="0.194" stop-color="#000018"/><stop offset="0.205" stop-color="#000"/><stop offset="0.355" stop-color="#000"/><stop offset="0.494" stop-color="#0000c7"/><stop offset="0.503" stop-color="#0000fc"/><stop offset="0.506" stop-color="#000fff"/><stop offset="0.546" stop-color="#0df"/><stop offset="0.549" stop-color="#0fd"/><stop offset="0.572" stop-color="#00ff7d"/><stop offset="0.575" stop-color="#00ff65"/><stop offset="0.581" stop-color="#0f0"/><stop offset="0.584" stop-color="#15ff00"/><stop offset="0.587" stop-color="#00ff42"/><stop offset="0.590" stop-color="#0f7"/><stop offset="0.601" stop-color="#00ffde"/><stop offset="0.604" stop-color="#00d8ff"/><stop offset="0.636" stop-color="#003fff"/><stop offset="0.668" stop-color="#0000fc"/><stop offset="0.783" stop-color="#000002"/><stop offset="1.000" stop-color="#000"/></linearGradient><linearGradient id="a113" x1="0" y1="0" x2="0" y2="1"><stop offset="0.000" stop-color="#000"/><stop offset="0.150" stop-color="#000"/><stop offset="0.185" stop-color="#000027"/><stop offset="0.191" stop-color="#000027"/><stop offset="0.197" stop-color="#00000c"/><stop offset="0.205" stop-color="#000"/><stop offset="0.361" stop-color="#000"/><stop offset="0.494" stop-color="#0000b5"/><stop offset="0.509" stop-color="#0004ff"/><stop offset="0.546" stop-color="#00c5ff"/><stop offset="0.549" stop-color="#00ffe4"/><stop offset="0.575" stop-color="#00ff79"/><stop offset="0.581" stop-color="#00ff2c"/><stop offset="0.584" stop-color="#13ff00"/><stop offset="0.587" stop-color="#00ff0c"/><stop offset="0.590" stop-color="#00ff5e"/><stop offset="0.592" stop-color="#00ff81"/><stop offset="0.601" stop-color="#00ffd0"/><stop offset="0.604" stop-color="#00d0ff"/><stop offset="0.636" stop-color="#0031ff"/><stop offset="0.659" stop-color="#0000fc"/><stop offset="0.786" stop-color="#000001"/><stop offset="1.000" stop-color="#000"/></linearGradient><linearGradient id="a114" x1="0" y1="0" x2="0" y2="1"><stop offset="0.000" stop-color="#000"/><stop offset="0.185" stop-color="#00000b"/><stop offset="0.202" stop-color="#000"/><stop offset="0.364" stop-color="#000"/><stop offset="0.497" stop-color="#0000cf"/><stop offset="0.506" stop-color="#0005ff"/><stop offset="0.517" stop-color="#004bff"/><stop offset="0.549" stop-color="#00e2ff"/><stop offset="0.552" stop-color="#00ffdf"/><stop offset="0.578" stop-color="#00ff73"/><stop offset="0.584" stop-color="#00ff1c"/><stop offset="0.587" stop-color="#27ff00"/><stop offset="0.590" stop-color="#00ff2e"/><stop offset="0.592" stop-color="#00ff75"/><stop offset="0.604" stop-color="#00ffdc"/><stop offset="0.607" stop-color="#00dfff"/><stop offset="0.639" stop-color="#0048ff"/><stop offset="0.673" stop-color="#0000fe"/><stop offset="0.792" stop-color="#000"/><stop offset="1.000" stop-color="#000"/></linearGradient><linearGradient id="a115" x1="0" y1="0" x2="0" y2="1"><stop offset="0.000" stop-color="#000"/><stop offset="0.355" stop-color="#000001"/><stop offset="0.491" stop-color="#00c"/><stop offset="0.503" stop-color="#0000fe"/><stop offset="0.506" stop-color="#000eff"/><stop offset="0.549" stop-color="#00e1ff"/><stop offset="0.552" stop-color="#00ffe2"/><stop offset="0.578" stop-color="#00ff7e"/><stop offset="0.581" stop-color="#00ff67"/><stop offset="0.587" stop-color="#00ff02"/><stop offset="0.590" stop-color="#1f0"/><stop offset="0.592" stop-color="#00ff5a"/><stop offset="0.595" stop-color="#00ff84"/><stop offset="0.604" stop-color="#00ffd4"/><stop offset="0.607" stop-color="#00e5ff"/><stop offset="0.642" stop-color="#0042ff"/><stop offset="0.673" stop-color="#0000fc"/><stop offset="0.786" stop-color="#000"/><stop offset="1.000" stop-color="#000"/></linearGradient><linearGradient id="b4" x1="0" y1="0" x2="0" y2="1"><stop offset="0.000" stop-color="#000"/><stop offset="0.546" stop-color="#000"/><stop offset="0.549" stop-color="#000008"/><stop offset="0.572" stop-color="#0000b1"/><stop offset="0.575" stop-color="#03f"/><stop offset="0.584" stop-color="#006eff"/><stop offset="0.590" stop-color="#0074ff"/><stop offset="0.601" stop-color="#002cff"/><stop offset="0.604" stop-color="#00009f"/><stop offset="0.618" stop-color="#000"/><stop offset="1.000" stop-color="#000"/></linearGradient><linearGradient id="b5" x1="0" y1="0" x2="0" y2="1"><stop offset="0.000" stop-color="#000"/><stop offset="0.540" stop-color="#000001"/><stop offset="0.569" stop-color="#00009b"/><stop offset="0.572" stop-color="#001bff"/><stop offset="0.584" stop-color="#00d8ff"/><stop offset="0.590" stop-color="#00d8ff"/><stop offset="0.601" stop-color="#0025ff"/><stop offset="0.604" stop-color="#00009a"/><stop offset="0.624" stop-color="#000"/><stop offset="1.000" stop-color="#000"/></linearGradient><linearGradient id="b6" x1="0" y1="0" x2="0" y2="1"><stop offset="0.000" stop-color="#000"/><stop offset="0.538" stop-color="#000001"/><stop offset="0.566" stop-color="#0000b1"/><stop offset="0.569" stop-color="#003bff"/><stop offset="0.578" stop-color="#00bcff"/><stop offset="0.581" stop-color="#00ffd9"/><stop offset="0.587" stop-color="#00ffd0"/><stop offset="0.590" stop-color="#0cf"/><stop offset="0.598" stop-color="#004aff"/><stop offset="0.601" stop-color="#0000b5"/><stop offset="0.621" stop-color="#000009"/><stop offset="0.624" stop-color="#000"/><stop offset="1.000" stop-color="#000"/></linearGradient><linearGradient id="b7" x1="0" y1="0" x2="0" y2="1"><stop offset="0.000" stop-color="#000"/><stop offset="0.535" stop-color="#000"/><stop offset="0.538" stop-color="#000002"/><stop offset="0.564" stop-color="#0000c9"/><stop offset="0.566" stop-color="#0062ff"/><stop offset="0.575" stop-color="#00e1ff"/><stop offset="0.578" stop-color="#00ffae"/><stop offset="0.581" stop-color="#00ffa6"/><stop offset="0.584" stop-color="#00ffbd"/><stop offset="0.587" stop-color="#00dcff"/><stop offset="0.595" stop-color="#0062ff"/><stop offset="0.598" stop-color="#0000c9"/><stop offset="0.621" stop-color="#000"/><stop offset="1.000" stop-color="#000"/></linearGradient><linearGradient id="b8" x1="0" y1="0" x2="0" y2="1"><stop offset="0.000" stop-color="#000"/><stop offset="0.535" stop-color="#000"/><stop offset="0.558" stop-color="#0000cf"/><stop offset="0.561" stop-color="#0065ff"/><stop offset="0.569" stop-color="#00e0ff"/><stop offset="0.572" stop-color="#00ffd3"/><stop offset="0.575" stop-color="#00ff80"/><stop offset="0.578" stop-color="#00ff80"/><stop offset="0.581" stop-color="#00ffb8"/><stop offset="0.584" stop-color="#00ecff"/><stop offset="0.592" stop-color="#0073ff"/><stop offset="0.595" stop-color="#0000d7"/><stop offset="0.618" stop-color="#000"/><stop offset="1.000" stop-color="#000"/></linearGradient><linearGradient id="b9" x1="0" y1="0" x2="0" y2="1"><stop offset="0.000" stop-color="#000"/><stop offset="0.535" stop-color="#000"/><stop offset="0.558" stop-color="#0000bd"/><stop offset="0.561" stop-color="#004dff"/><stop offset="0.569" stop-color="#00cbff"/><stop offset="0.572" stop-color="#00ffcb"/><stop offset="0.575" stop-color="#00ff7c"/><stop offset="0.578" stop-color="#00ff7b"/><stop offset="0.581" stop-color="#00ffc3"/><stop offset="0.584" stop-color="#00cdff"/><stop offset="0.592" stop-color="#0046ff"/><stop offset="0.595" stop-color="#0000b6"/><stop offset="0.616" stop-color="#000"/><stop offset="1.000" stop-color="#000"/></linearGradient><linearGradient id="b10" x1="0" y1="0" x2="0" y2="1"><stop offset="0.000" stop-color="#000"/><stop offset="0.535" stop-color="#000"/><stop offset="0.558" stop-color="#0000ad"/><stop offset="0.561" stop-color="#0039ff"/><stop offset="0.569" stop-color="#00baff"/><stop offset="0.572" stop-color="#00ffc4"/><stop offset="0.575" stop-color="#00ff76"/><stop offset="0.578" stop-color="#00ff7a"/><stop offset="0.581" stop-color="#00ffc4"/><stop offset="0.584" stop-color="#00bcff"/><stop offset="0.592" stop-color="#003eff"/><stop offset="0.595" stop-color="#0000b1"/><stop offset="0.618" stop-color="#000003"/><stop offset="0.621" stop-color="#000"/><stop offset="1.000" stop-color="#000"/></linearGradient><linearGradient id="b11" x1="0" y1="0" x2="0" y2="1"><stop offset="0.000" stop-color="#000"/><stop offset="0.535" stop-color="#000"/><stop offset="0.558" stop-color="#0000a5"/><stop offset="0.561" stop-color="#002fff"/><stop offset="0.569" stop-color="#00b3ff"/><stop offset="0.572" stop-color="#00ffbc"/><stop offset="0.575" stop-color="#00ff6c"/><stop offset="0.578" stop-color="#00ff7b"/><stop offset="0.581" stop-color="#0fc"/><stop offset="0.584" stop-color="#00aeff"/><stop offset="0.592" stop-color="#002eff"/><stop offset="0.595" stop-color="#0000a6"/><stop offset="0.618" stop-color="#000002"/><stop offset="0.621" stop-color="#000"/><stop offset="1.000" stop-color="#000"/></linearGradient><linearGradient id="b12" x1="0" y1="0" x2="0" y2="1"><stop offset="0.000" stop-color="#000"/><stop offset="0.535" stop-color="#000"/><stop offset="0.538" stop-color="#000009"/><stop offset="0.558" stop-color="#0000b3"/><stop offset="0.561" stop-color="#0042ff"/><stop offset="0.569" stop-color="#00c6ff"/><stop offset="0.572" stop-color="#00ffb5"/><stop offset="0.575" stop-color="#00ff5d"/><stop offset="0.578" stop-color="#00ff7d"/><stop offset="0.581" stop-color="#00ffd4"/><stop offset="0.584" stop-color="#0bf"/><stop offset="0.592" stop-color="#003bff"/><stop offset="0.595" stop-color="#0000b0"/><stop offset="0.618" stop-color="#000"/><stop offset="1.000" stop-color="#000"/></linearGradient><linearGradient id="b13" x1="0" y1="0" x2="0" y2="1"><stop offset="0.000" stop-color="#000"/><stop offset="0.535" stop-color="#000"/><stop offset="0.558" stop-color="#0000cb"/><stop offset="0.561" stop-color="#0063ff"/><stop offset="0.569" stop-color="#00e0ff"/><stop offset="0.572" stop-color="#0fa"/><stop offset="0.575" stop-color="#00ff2f"/><stop offset="0.581" stop-color="#00ffd1"/><stop offset="0.584" stop-color="#00d2ff"/><stop offset="0.592" stop-color="#005aff"/><stop offset="0.595" stop-color="#0000c7"/><stop offset="0.618" stop-color="#000009"/><stop offset="0.621" stop-color="#000"/><stop offset="1.000" stop-color="#000"/></linearGradient><linearGradient id="b14" x1="0" y1="0" x2="0" y2="1"><stop offset="0.000" stop-color="#000"/><stop offset="0.532" stop-color="#000"/><stop offset="0.535" stop-color="#000003"/><stop offset="0.558" stop-color="#0000b9"/><stop offset="0.561" stop-color="#004dff"/><stop offset="0.569" stop-color="#0cf"/><stop offset="0.572" stop-color="#00ffa1"/><stop offset="0.575" stop-color="#0bff00"/><stop offset="0.578" stop-color="#00ff7a"/><stop offset="0.581" stop-color="#00ffd5"/><stop offset="0.584" stop-color="#00b3ff"/><stop offset="0.592" stop-color="#0031ff"/><stop offset="0.595" stop-color="#0000a9"/><stop offset="0.618" stop-color="#000"/><stop offset="1.000" stop-color="#000"/></linearGradient><linearGradient id="b15" x1="0" y1="0" x2="0" y2="1"><stop offset="0.000" stop-color="#000"/><stop offset="0.535" stop-color="#000"/><stop offset="0.558" stop-color="#0000b9"/><stop offset="0.561" stop-color="#004eff"/><stop offset="0.569" stop-color="#00d0ff"/><stop offset="0.572" stop-color="#00ff9c"/><stop offset="0.575" stop-color="#43ff00"/><stop offset="0.578" stop-color="#00ff6c"/><stop offset="0.581" stop-color="#00ffc9"/><stop offset="0.584" stop-color="#00baff"/><stop offset="0.592" stop-color="#003bff"/><stop offset="0.595" stop-color="#0000af"/><stop offset="0.618" stop-color="#000"/><stop offset="1.000" stop-color="#000"/></linearGradient><linearGradient id="b16" x1="0" y1="0" x2="0" y2="1"><stop offset="0.000" stop-color="#000"/><stop offset="0.199" stop-color="#000"/><stop offset="0.303" stop-color="#0000e5"/><stop offset="0.350" stop-color="#00f"/><stop offset="0.523" stop-color="#005fff"/><stop offset="0.558" stop-color="#00f4ff"/><stop offset="0.569" stop-color="#00ff8b"/><stop offset="0.572" stop-color="#00ff51"/><stop offset="0.575" stop-color="#75ff00"/><stop offset="0.578" stop-color="#e4ff00"/><stop offset="0.590" stop-color="#4eff00"/><stop offset="0.598" stop-color="#00ff0b"/><stop offset="0.613" stop-color="#00ff6d"/><stop offset="0.645" stop-color="#00ffdf"/><stop offset="0.673" stop-color="#00fffc"/><stop offset="0.679" stop-color="#00f5ff"/><stop offset="0.708" stop-color="#0063ff"/><stop offset="0.711" stop-color="#0000d5"/><stop offset="0.737" stop-color="#000009"/><stop offset="0.740" stop-color="#000"/><stop offset="1.000" stop-color="#000"/></linearGradient><linearGradient id="b17" x1="0" y1="0" x2="0" y2="1"><stop offset="0.000" stop-color="#000"/><stop offset="0.199" stop-color="#000"/><stop offset="0.301" stop-color="#00d"/><stop offset="0.361" stop-color="#0002ff"/><stop offset="0.523" stop-color="#0059ff"/><stop offset="0.558" stop-color="#00f9ff"/><stop offset="0.561" stop-color="#00ffc9"/><stop offset="0.569" stop-color="#0f7"/><stop offset="0.572" stop-color="#00ff13"/><stop offset="0.575" stop-color="#af0"/><stop offset="0.578" stop-color="#d3ff00"/><stop offset="0.595" stop-color="#31ff00"/><stop offset="0.601" stop-color="#05ff00"/><stop offset="0.604" stop-color="#00ff0f"/><stop offset="0.618" stop-color="#00ff5d"/><stop offset="0.633" stop-color="#00ff80"/><stop offset="0.659" stop-color="#00ffe5"/><stop offset="0.694" stop-color="#00fffe"/><stop offset="0.702" stop-color="#0ef"/><stop offset="0.731" stop-color="#0064ff"/><stop offset="0.734" stop-color="#0000dc"/><stop offset="0.769" stop-color="#000005"/><stop offset="0.772" stop-color="#000"/><stop offset="1.000" stop-color="#000"/></linearGradient><linearGradient id="b18" x1="0" y1="0" x2="0" y2="1"><stop offset="0.000" stop-color="#000"/><stop offset="0.208" stop-color="#000"/><stop offset="0.306" stop-color="#0000ed"/><stop offset="0.335" stop-color="#0001ff"/><stop offset="0.520" stop-color="#006bff"/><stop offset="0.555" stop-color="#0ff"/><stop offset="0.566" stop-color="#00ff90"/><stop offset="0.569" stop-color="#00ff68"/><stop offset="0.572" stop-color="#02ff00"/><stop offset="0.575" stop-color="#a1ff00"/><stop offset="0.601" stop-color="#00ff01"/><stop offset="0.621" stop-color="#00ff5e"/><stop offset="0.645" stop-color="#00ff91"/><stop offset="0.668" stop-color="#00ffe6"/><stop offset="0.717" stop-color="#00fffb"/><stop offset="0.728" stop-color="#00d5ff"/><stop offset="0.749" stop-color="#006cff"/><stop offset="0.751" stop-color="#0000de"/><stop offset="0.786" stop-color="#000002"/><stop offset="1.000" stop-color="#000"/></linearGradient><linearGradient id="b19" x1="0" y1="0" x2="0" y2="1"><stop offset="0.000" stop-color="#000"/><stop offset="0.194" stop-color="#000"/><stop offset="0.275" stop-color="#0000d0"/><stop offset="0.324" stop-color="#00f"/><stop offset="0.402" stop-color="#0048ff"/><stop offset="0.436" stop-color="#00d8ff"/><stop offset="0.512" stop-color="#00fffc"/><stop offset="0.549" stop-color="#00ff8d"/><stop offset="0.569" stop-color="#07ff00"/><stop offset="0.572" stop-color="#24ff00"/><stop offset="0.581" stop-color="#00ff02"/><stop offset="0.616" stop-color="#0f7"/><stop offset="0.653" stop-color="#00ffb3"/><stop offset="0.679" stop-color="#00fffe"/><stop offset="0.740" stop-color="#00d4ff"/><stop offset="0.772" stop-color="#004bff"/><stop offset="0.775" stop-color="#0000c7"/><stop offset="0.815" stop-color="#000"/><stop offset="1.000" stop-color="#000"/></linearGradient><linearGradient id="b20" x1="0" y1="0" x2="0" y2="1"><stop offset="0.000" stop-color="#000"/><stop offset="0.173" stop-color="#000"/><stop offset="0.260" stop-color="#0000d3"/><stop offset="0.318" stop-color="#0002ff"/><stop offset="0.405" stop-color="#0047ff"/><stop offset="0.442" stop-color="#00e8ff"/><stop offset="0.477" stop-color="#00fffe"/><stop offset="0.509" stop-color="#00ffea"/><stop offset="0.543" stop-color="#00ff79"/><stop offset="0.552" stop-color="#00ff4b"/><stop offset="0.561" stop-color="#00ff06"/><stop offset="0.564" stop-color="#15ff00"/><stop offset="0.572" stop-color="#67ff00"/><stop offset="0.595" stop-color="#00ff05"/><stop offset="0.624" stop-color="#00ff64"/><stop offset="0.650" stop-color="#00ff8a"/><stop offset="0.676" stop-color="#00ffe7"/><stop offset="0.714" stop-color="#0ff"/><stop offset="0.754" stop-color="#00e1ff"/><stop offset="0.786" stop-color="#004fff"/><stop offset="0.792" stop-color="#0013ff"/><stop offset="0.795" stop-color="#00e"/><stop offset="0.798" stop-color="#0000d0"/><stop offset="0.850" stop-color="#000"/><stop offset="1.000" stop-color="#000"/></linearGradient><linearGradient id="b21" x1="0" y1="0" x2="0" y2="1"><stop offset="0.000" stop-color="#000"/><stop offset="0.165" stop-color="#000"/><stop offset="0.243" stop-color="#0000ca"/><stop offset="0.315" stop-color="#00f"/><stop offset="0.399" stop-color="#0041ff"/><stop offset="0.434" stop-color="#00e4ff"/><stop offset="0.471" stop-color="#0ff"/><stop offset="0.506" stop-color="#00ffe5"/><stop offset="0.540" stop-color="#00ff6a"/><stop offset="0.558" stop-color="#09ff00"/><stop offset="0.569" stop-color="#7fff00"/><stop offset="0.601" stop-color="#00ff05"/><stop offset="0.633" stop-color="#00ff5e"/><stop offset="0.662" stop-color="#00ff84"/><stop offset="0.688" stop-color="#00ffe7"/><stop offset="0.720" stop-color="#00fffe"/><stop offset="0.757" stop-color="#00e5ff"/><stop offset="0.803" stop-color="#0004ff"/><stop offset="0.806" stop-color="#0000f3"/><stop offset="0.864" stop-color="#000"/><stop offset="1.000" stop-color="#000"/></linearGradient><linearGradient id="b22" x1="0" y1="0" x2="0" y2="1"><stop offset="0.000" stop-color="#000"/><stop offset="0.153" stop-color="#000"/><stop offset="0.223" stop-color="#0000e1"/><stop offset="0.266" stop-color="#0002ff"/><stop offset="0.387" stop-color="#0059ff"/><stop offset="0.425" stop-color="#00eaff"/><stop offset="0.500" stop-color="#00fff2"/><stop offset="0.538" stop-color="#00ff96"/><stop offset="0.549" stop-color="#00ff5f"/><stop offset="0.564" stop-color="#09ff00"/><stop offset="0.566" stop-color="#23ff00"/><stop offset="0.569" stop-color="#2f0"/><stop offset="0.581" stop-color="#00ff04"/><stop offset="0.621" stop-color="#00ff6f"/><stop offset="0.647" stop-color="#00ff9a"/><stop offset="0.671" stop-color="#00ffab"/><stop offset="0.697" stop-color="#00fff1"/><stop offset="0.725" stop-color="#0ff"/><stop offset="0.766" stop-color="#00eaff"/><stop offset="0.827" stop-color="#0002ff"/><stop offset="0.887" stop-color="#000003"/><stop offset="1.000" stop-color="#000"/></linearGradient><linearGradient id="b23" x1="0" y1="0" x2="0" y2="1"><stop offset="0.000" stop-color="#000"/><stop offset="0.142" stop-color="#000"/><stop offset="0.208" stop-color="#0000f6"/><stop offset="0.220" stop-color="#0002ff"/><stop offset="0.379" stop-color="#0078ff"/><stop offset="0.393" stop-color="#00bcff"/><stop offset="0.413" stop-color="#00feff"/><stop offset="0.509" stop-color="#00ffe6"/><stop offset="0.540" stop-color="#00ff8f"/><stop offset="0.564" stop-color="#00ff06"/><stop offset="0.566" stop-color="#1f0"/><stop offset="0.575" stop-color="#0f0"/><stop offset="0.633" stop-color="#00ff87"/><stop offset="0.682" stop-color="#00ffb9"/><stop offset="0.699" stop-color="#00ffe6"/><stop offset="0.766" stop-color="#00fffe"/><stop offset="0.786" stop-color="#00c9ff"/><stop offset="0.806" stop-color="#0073ff"/><stop offset="0.850" stop-color="#0000fa"/><stop offset="0.908" stop-color="#000"/><stop offset="1.000" stop-color="#000"/></linearGradient><linearGradient id="b24" x1="0" y1="0" x2="0" y2="1"><stop offset="0.000" stop-color="#000"/><stop offset="0.142" stop-color="#000"/><stop offset="0.205" stop-color="#0000f4"/><stop offset="0.220" stop-color="#00f"/><stop offset="0.367" stop-color="#0070ff"/><stop offset="0.402" stop-color="#00fffc"/><stop offset="0.445" stop-color="#00ffe6"/><stop offset="0.494" stop-color="#00ffe5"/><stop offset="0.517" stop-color="#00ff8c"/><stop offset="0.532" stop-color="#00ff68"/><stop offset="0.552" stop-color="#0bff00"/><stop offset="0.569" stop-color="#9f0"/><stop offset="0.618" stop-color="#00ff05"/><stop offset="0.659" stop-color="#00ff5d"/><stop offset="0.699" stop-color="#00ff87"/><stop offset="0.725" stop-color="#00ffe6"/><stop offset="0.751" stop-color="#00ffe6"/><stop offset="0.775" stop-color="#00fffa"/><stop offset="0.809" stop-color="#006fff"/><stop offset="0.864" stop-color="#0000fd"/><stop offset="0.936" stop-color="#000"/><stop offset="1.000" stop-color="#000"/></linearGradient><linearGradient id="b25" x1="0" y1="0" x2="0" y2="1"><stop offset="0.000" stop-color="#000"/><stop offset="0.147" stop-color="#000"/><stop offset="0.208" stop-color="#0000d6"/><stop offset="0.263" stop-color="#0001ff"/><stop offset="0.361" stop-color="#004aff"/><stop offset="0.399" stop-color="#00efff"/><stop offset="0.431" stop-color="#0ff"/><stop offset="0.491" stop-color="#00ffe4"/><stop offset="0.517" stop-color="#00ff7f"/><stop offset="0.532" stop-color="#00ff5c"/><stop offset="0.549" stop-color="#02ff00"/><stop offset="0.572" stop-color="#b6ff00"/><stop offset="0.627" stop-color="#02ff00"/><stop offset="0.671" stop-color="#00ff5b"/><stop offset="0.708" stop-color="#00ff7f"/><stop offset="0.734" stop-color="#00ffe2"/><stop offset="0.757" stop-color="#00fffc"/><stop offset="0.775" stop-color="#00e6ff"/><stop offset="0.809" stop-color="#0049ff"/><stop offset="0.855" stop-color="#0000fd"/><stop offset="0.882" stop-color="#0000d1"/><stop offset="0.951" stop-color="#000004"/><stop offset="1.000" stop-color="#000"/></linearGradient><linearGradient id="b26" x1="0" y1="0" x2="0" y2="1"><stop offset="0.000" stop-color="#000"/><stop offset="0.145" stop-color="#000"/><stop offset="0.205" stop-color="#00b"/><stop offset="0.306" stop-color="#0002ff"/><stop offset="0.361" stop-color="#002cff"/><stop offset="0.396" stop-color="#00d7ff"/><stop offset="0.457" stop-color="#0ff"/><stop offset="0.480" stop-color="#00ffed"/><stop offset="0.491" stop-color="#0fd"/><stop offset="0.514" stop-color="#00ff81"/><stop offset="0.529" stop-color="#00ff62"/><stop offset="0.549" stop-color="#00ff02"/><stop offset="0.552" stop-color="#10ff00"/><stop offset="0.575" stop-color="#c8ff00"/><stop offset="0.578" stop-color="#d0ff00"/><stop offset="0.613" stop-color="#4cff00"/><stop offset="0.639" stop-color="#00ff04"/><stop offset="0.676" stop-color="#00ff58"/><stop offset="0.714" stop-color="#00ff80"/><stop offset="0.737" stop-color="#00ffdc"/><stop offset="0.749" stop-color="#00fffb"/><stop offset="0.775" stop-color="#00d3ff"/><stop offset="0.809" stop-color="#0028ff"/><stop offset="0.841" stop-color="#0002ff"/><stop offset="0.902" stop-color="#00b"/><stop offset="0.983" stop-color="#000002"/><stop offset="1.000" stop-color="#000"/></linearGradient><linearGradient id="b27" x1="0" y1="0" x2="0" y2="1"><stop offset="0.000" stop-color="#000"/><stop offset="0.153" stop-color="#000002"/><stop offset="0.208" stop-color="#0000b8"/><stop offset="0.309" stop-color="#0001ff"/><stop offset="0.358" stop-color="#0024ff"/><stop offset="0.396" stop-color="#00d2ff"/><stop offset="0.465" stop-color="#00fffe"/><stop offset="0.488" stop-color="#00ffeb"/><stop offset="0.514" stop-color="#00ff83"/><stop offset="0.532" stop-color="#00ff60"/><stop offset="0.552" stop-color="#00ff02"/><stop offset="0.555" stop-color="#0fff00"/><stop offset="0.581" stop-color="#d1ff00"/><stop offset="0.584" stop-color="#d2ff00"/><stop offset="0.616" stop-color="#53ff00"/><stop offset="0.642" stop-color="#00ff02"/><stop offset="0.679" stop-color="#00ff5b"/><stop offset="0.717" stop-color="#00ff84"/><stop offset="0.743" stop-color="#00ffed"/><stop offset="0.751" stop-color="#00fcff"/><stop offset="0.775" stop-color="#0cf"/><stop offset="0.809" stop-color="#0024ff"/><stop offset="0.847" stop-color="#0000fe"/><stop offset="0.922" stop-color="#0000b6"/><stop offset="1.000" stop-color="#000012"/></linearGradient><linearGradient id="b28" x1="0" y1="0" x2="0" y2="1"><stop offset="0.000" stop-color="#000"/><stop offset="0.147" stop-color="#000001"/><stop offset="0.202" stop-color="#0000e0"/><stop offset="0.243" stop-color="#0001ff"/><stop offset="0.361" stop-color="#005bff"/><stop offset="0.396" stop-color="#00fbff"/><stop offset="0.408" stop-color="#00fffe"/><stop offset="0.486" stop-color="#00ffdf"/><stop offset="0.509" stop-color="#00ff83"/><stop offset="0.535" stop-color="#00ff4a"/><stop offset="0.552" stop-color="#02ff00"/><stop offset="0.569" stop-color="#67ff00"/><stop offset="0.587" stop-color="#e5ff00"/><stop offset="0.590" stop-color="#e9ff00"/><stop offset="0.621" stop-color="#62ff00"/><stop offset="0.650" stop-color="#0f0"/><stop offset="0.688" stop-color="#00ff5a"/><stop offset="0.720" stop-color="#00ff7b"/><stop offset="0.746" stop-color="#00ffe2"/><stop offset="0.769" stop-color="#0ff"/><stop offset="0.806" stop-color="#005aff"/><stop offset="0.896" stop-color="#0000fd"/><stop offset="0.925" stop-color="#0000dc"/><stop offset="1.000" stop-color="#000019"/></linearGradient><linearGradient id="b29" x1="0" y1="0" x2="0" y2="1"><stop offset="0.000" stop-color="#000"/><stop offset="0.153" stop-color="#000001"/><stop offset="0.208" stop-color="#0000c2"/><stop offset="0.298" stop-color="#0001ff"/><stop offset="0.367" stop-color="#0031ff"/><stop offset="0.402" stop-color="#00daff"/><stop offset="0.451" stop-color="#0ff"/><stop offset="0.480" stop-color="#00ffe3"/><stop offset="0.506" stop-color="#00ff7f"/><stop offset="0.529" stop-color="#00ff5a"/><stop offset="0.555" stop-color="#05ff00"/><stop offset="0.595" stop-color="#e4ff00"/><stop offset="0.627" stop-color="#60ff00"/><stop offset="0.656" stop-color="#00ff02"/><stop offset="0.694" stop-color="#00ff5b"/><stop offset="0.728" stop-color="#00ff82"/><stop offset="0.754" stop-color="#00ffe8"/><stop offset="0.766" stop-color="#00fcff"/><stop offset="0.783" stop-color="#00d8ff"/><stop offset="0.818" stop-color="#0031ff"/><stop offset="0.882" stop-color="#00f"/><stop offset="0.965" stop-color="#0000bf"/><stop offset="1.000" stop-color="#000082"/></linearGradient><linearGradient id="b30" x1="0" y1="0" x2="0" y2="1"><stop offset="0.000" stop-color="#000"/><stop offset="0.168" stop-color="#000"/><stop offset="0.217" stop-color="#0000b6"/><stop offset="0.324" stop-color="#00f"/><stop offset="0.376" stop-color="#0026ff"/><stop offset="0.410" stop-color="#0cf"/><stop offset="0.465" stop-color="#0ff"/><stop offset="0.474" stop-color="#00fff5"/><stop offset="0.500" stop-color="#00ff8d"/><stop offset="0.529" stop-color="#00ff63"/><stop offset="0.561" stop-color="#03ff00"/><stop offset="0.601" stop-color="#caff00"/><stop offset="0.633" stop-color="#49ff00"/><stop offset="0.656" stop-color="#00ff04"/><stop offset="0.697" stop-color="#0f6"/><stop offset="0.731" stop-color="#00ff8b"/><stop offset="0.763" stop-color="#00fbff"/><stop offset="0.780" stop-color="#00cfff"/><stop offset="0.818" stop-color="#0023ff"/><stop offset="0.867" stop-color="#0000fd"/><stop offset="0.965" stop-color="#0000b6"/><stop offset="1.000" stop-color="#00007b"/></linearGradient><linearGradient id="b31" x1="0" y1="0" x2="0" y2="1"><stop offset="0.000" stop-color="#000"/><stop offset="0.168" stop-color="#000"/><stop offset="0.220" stop-color="#00009f"/><stop offset="0.370" stop-color="#0001ff"/><stop offset="0.379" stop-color="#0010ff"/><stop offset="0.410" stop-color="#00a7ff"/><stop offset="0.457" stop-color="#00e7ff"/><stop offset="0.462" stop-color="#00fff8"/><stop offset="0.465" stop-color="#00ffe0"/><stop offset="0.483" stop-color="#00ffa5"/><stop offset="0.523" stop-color="#00ff74"/><stop offset="0.569" stop-color="#05ff00"/><stop offset="0.607" stop-color="#90ff00"/><stop offset="0.650" stop-color="#00ff06"/><stop offset="0.697" stop-color="#00ff74"/><stop offset="0.740" stop-color="#00ffa5"/><stop offset="0.757" stop-color="#00ffe0"/><stop offset="0.760" stop-color="#00fff9"/><stop offset="0.763" stop-color="#00f1ff"/><stop offset="0.786" stop-color="#00adff"/><stop offset="0.824" stop-color="#0004ff"/><stop offset="0.962" stop-color="#00009f"/><stop offset="1.000" stop-color="#000067"/></linearGradient><linearGradient id="b32" x1="0" y1="0" x2="0" y2="1"><stop offset="0.000" stop-color="#000"/><stop offset="0.153" stop-color="#000001"/><stop offset="0.211" stop-color="#0000a8"/><stop offset="0.350" stop-color="#0001ff"/><stop offset="0.373" stop-color="#0010ff"/><stop offset="0.408" stop-color="#0094ff"/><stop offset="0.442" stop-color="#00c5ff"/><stop offset="0.460" stop-color="#00fff5"/><stop offset="0.468" stop-color="#00ffd6"/><stop offset="0.503" stop-color="#00ffc1"/><stop offset="0.540" stop-color="#00ff90"/><stop offset="0.610" stop-color="#04ff00"/><stop offset="0.616" stop-color="#00ff01"/><stop offset="0.679" stop-color="#00ff92"/><stop offset="0.714" stop-color="#00ffc3"/><stop offset="0.746" stop-color="#00ffd7"/><stop offset="0.757" stop-color="#00f5ff"/><stop offset="0.772" stop-color="#00c2ff"/><stop offset="0.798" stop-color="#0098ff"/><stop offset="0.832" stop-color="#01f"/><stop offset="0.855" stop-color="#0000fe"/><stop offset="0.977" stop-color="#0000a8"/><stop offset="1.000" stop-color="#000087"/></linearGradient><linearGradient id="b33" x1="0" y1="0" x2="0" y2="1"><stop offset="0.000" stop-color="#000"/><stop offset="0.147" stop-color="#000"/><stop offset="0.208" stop-color="#0000cf"/><stop offset="0.272" stop-color="#00f"/><stop offset="0.373" stop-color="#0047ff"/><stop offset="0.408" stop-color="#00e1ff"/><stop offset="0.422" stop-color="#00fffa"/><stop offset="0.454" stop-color="#00ff93"/><stop offset="0.506" stop-color="#00ff63"/><stop offset="0.558" stop-color="#0f0"/><stop offset="0.616" stop-color="#a2ff00"/><stop offset="0.668" stop-color="#00ff04"/><stop offset="0.711" stop-color="#0f6"/><stop offset="0.751" stop-color="#00ff8e"/><stop offset="0.775" stop-color="#00ffe4"/><stop offset="0.789" stop-color="#0ff"/><stop offset="0.803" stop-color="#00e3ff"/><stop offset="0.838" stop-color="#0048ff"/><stop offset="0.925" stop-color="#0000fe"/><stop offset="0.977" stop-color="#0000d2"/><stop offset="1.000" stop-color="#0000ab"/></linearGradient><linearGradient id="b34" x1="0" y1="0" x2="0" y2="1"><stop offset="0.000" stop-color="#000"/><stop offset="0.153" stop-color="#000"/><stop offset="0.214" stop-color="#0000f1"/><stop offset="0.228" stop-color="#0001ff"/><stop offset="0.376" stop-color="#0076ff"/><stop offset="0.408" stop-color="#00fffb"/><stop offset="0.428" stop-color="#00ffde"/><stop offset="0.451" stop-color="#00ff84"/><stop offset="0.500" stop-color="#00ff5b"/><stop offset="0.552" stop-color="#0f0"/><stop offset="0.621" stop-color="#b8ff00"/><stop offset="0.676" stop-color="#01ff00"/><stop offset="0.720" stop-color="#00ff5d"/><stop offset="0.757" stop-color="#00ff82"/><stop offset="0.783" stop-color="#00ffe6"/><stop offset="0.798" stop-color="#00ffe7"/><stop offset="0.809" stop-color="#00feff"/><stop offset="0.841" stop-color="#0073ff"/><stop offset="0.960" stop-color="#0001ff"/><stop offset="1.000" stop-color="#0000b7"/></linearGradient><linearGradient id="b35" x1="0" y1="0" x2="0" y2="1"><stop offset="0.000" stop-color="#000"/><stop offset="0.153" stop-color="#000"/><stop offset="0.217" stop-color="#0000e3"/><stop offset="0.254" stop-color="#0002ff"/><stop offset="0.376" stop-color="#005fff"/><stop offset="0.390" stop-color="#00a3ff"/><stop offset="0.416" stop-color="#00fffe"/><stop offset="0.431" stop-color="#00ffe2"/><stop offset="0.448" stop-color="#00ffa8"/><stop offset="0.512" stop-color="#00ff7b"/><stop offset="0.590" stop-color="#04ff00"/><stop offset="0.624" stop-color="#51ff00"/><stop offset="0.656" stop-color="#00ff03"/><stop offset="0.702" stop-color="#00ff69"/><stop offset="0.731" stop-color="#00ff92"/><stop offset="0.763" stop-color="#0fa"/><stop offset="0.780" stop-color="#00ffe4"/><stop offset="0.801" stop-color="#00fcff"/><stop offset="0.812" stop-color="#00dfff"/><stop offset="0.844" stop-color="#005cff"/><stop offset="0.936" stop-color="#0000fe"/><stop offset="0.962" stop-color="#0000e3"/><stop offset="1.000" stop-color="#000095"/></linearGradient><linearGradient id="b36" x1="0" y1="0" x2="0" y2="1"><stop offset="0.000" stop-color="#000"/><stop offset="0.156" stop-color="#000"/><stop offset="0.220" stop-color="#0000db"/><stop offset="0.260" stop-color="#00f"/><stop offset="0.376" stop-color="#0059ff"/><stop offset="0.413" stop-color="#00fdff"/><stop offset="0.416" stop-color="#00fff4"/><stop offset="0.445" stop-color="#00ff94"/><stop offset="0.506" stop-color="#00ff6d"/><stop offset="0.581" stop-color="#05ff00"/><stop offset="0.630" stop-color="#6eff00"/><stop offset="0.671" stop-color="#00ff05"/><stop offset="0.723" stop-color="#00ff6d"/><stop offset="0.769" stop-color="#00ff97"/><stop offset="0.789" stop-color="#00ffe0"/><stop offset="0.809" stop-color="#00fcff"/><stop offset="0.821" stop-color="#00d8ff"/><stop offset="0.850" stop-color="#0059ff"/><stop offset="0.939" stop-color="#0000fe"/><stop offset="0.968" stop-color="#0000e0"/><stop offset="1.000" stop-color="#0000a0"/></linearGradient><linearGradient id="b37" x1="0" y1="0" x2="0" y2="1"><stop offset="0.000" stop-color="#000"/><stop offset="0.171" stop-color="#000"/><stop offset="0.228" stop-color="#0000d0"/><stop offset="0.289" stop-color="#0002ff"/><stop offset="0.376" stop-color="#0045ff"/><stop offset="0.416" stop-color="#00fffe"/><stop offset="0.445" stop-color="#00ff8d"/><stop offset="0.506" stop-color="#00ff67"/><stop offset="0.578" stop-color="#02ff00"/><stop offset="0.633" stop-color="#74ff00"/><stop offset="0.673" stop-color="#0f0"/><stop offset="0.723" stop-color="#00ff65"/><stop offset="0.766" stop-color="#00ff8d"/><stop offset="0.792" stop-color="#00ffe8"/><stop offset="0.803" stop-color="#00fdff"/><stop offset="0.815" stop-color="#00e3ff"/><stop offset="0.850" stop-color="#0046ff"/><stop offset="0.922" stop-color="#00f"/><stop offset="0.968" stop-color="#0000d1"/><stop offset="1.000" stop-color="#000094"/></linearGradient><linearGradient id="b38" x1="0" y1="0" x2="0" y2="1"><stop offset="0.000" stop-color="#000"/><stop offset="0.168" stop-color="#000"/><stop offset="0.225" stop-color="#0000b2"/><stop offset="0.335" stop-color="#0001ff"/><stop offset="0.376" stop-color="#02f"/><stop offset="0.408" stop-color="#00b7ff"/><stop offset="0.419" stop-color="#00fffd"/><stop offset="0.425" stop-color="#00ffdc"/><stop offset="0.445" stop-color="#00ff97"/><stop offset="0.512" stop-color="#00ff6f"/><stop offset="0.592" stop-color="#03ff00"/><stop offset="0.636" stop-color="#57ff00"/><stop offset="0.668" stop-color="#01ff00"/><stop offset="0.720" stop-color="#00ff6c"/><stop offset="0.769" stop-color="#00ff9c"/><stop offset="0.795" stop-color="#00f9ff"/><stop offset="0.818" stop-color="#00c4ff"/><stop offset="0.855" stop-color="#001dff"/><stop offset="0.890" stop-color="#0000fe"/><stop offset="1.000" stop-color="#009"/></linearGradient><linearGradient id="b39" x1="0" y1="0" x2="0" y2="1"><stop offset="0.000" stop-color="#000"/><stop offset="0.153" stop-color="#000"/><stop offset="0.214" stop-color="#0000b7"/><stop offset="0.318" stop-color="#00f"/><stop offset="0.370" stop-color="#0025ff"/><stop offset="0.384" stop-color="#0068ff"/><stop offset="0.428" stop-color="#00fff6"/><stop offset="0.442" stop-color="#00ffc4"/><stop offset="0.535" stop-color="#00ff8f"/><stop offset="0.639" stop-color="#00ff09"/><stop offset="0.708" stop-color="#00ff8f"/><stop offset="0.769" stop-color="#00ffc8"/><stop offset="0.786" stop-color="#00f7ff"/><stop offset="0.795" stop-color="#00dcff"/><stop offset="0.824" stop-color="#00adff"/><stop offset="0.858" stop-color="#0024ff"/><stop offset="0.905" stop-color="#0000fe"/><stop offset="1.000" stop-color="#0000ae"/></linearGradient><linearGradient id="b40" x1="0" y1="0" x2="0" y2="1"><stop offset="0.000" stop-color="#000"/><stop offset="0.150" stop-color="#000"/><stop offset="0.211" stop-color="#0000c7"/><stop offset="0.283" stop-color="#0002ff"/><stop offset="0.350" stop-color="#0038ff"/><stop offset="0.384" stop-color="#00caff"/><stop offset="0.416" stop-color="#00fffd"/><stop offset="0.439" stop-color="#00ffaf"/><stop offset="0.523" stop-color="#00ff7f"/><stop offset="0.621" stop-color="#02ff00"/><stop offset="0.645" stop-color="#26ff00"/><stop offset="0.659" stop-color="#00ff04"/><stop offset="0.714" stop-color="#00ff7e"/><stop offset="0.763" stop-color="#00ffae"/><stop offset="0.789" stop-color="#00fbff"/><stop offset="0.815" stop-color="#00c8ff"/><stop offset="0.850" stop-color="#0037ff"/><stop offset="0.910" stop-color="#0000fe"/><stop offset="0.971" stop-color="#0000c5"/><stop offset="1.000" stop-color="#000091"/></linearGradient><linearGradient id="b41" x1="0" y1="0" x2="0" y2="1"><stop offset="0.000" stop-color="#000"/><stop offset="0.168" stop-color="#000"/><stop offset="0.223" stop-color="#0000b0"/><stop offset="0.301" stop-color="#00f"/><stop offset="0.327" stop-color="#001bff"/><stop offset="0.361" stop-color="#00beff"/><stop offset="0.413" stop-color="#00fff5"/><stop offset="0.439" stop-color="#00ff92"/><stop offset="0.509" stop-color="#00ff6a"/><stop offset="0.590" stop-color="#0f0"/><stop offset="0.647" stop-color="#68ff00"/><stop offset="0.679" stop-color="#00ff02"/><stop offset="0.723" stop-color="#00ff69"/><stop offset="0.763" stop-color="#00ff96"/><stop offset="0.789" stop-color="#00fdff"/><stop offset="0.812" stop-color="#00c3ff"/><stop offset="0.850" stop-color="#0019ff"/><stop offset="0.879" stop-color="#00f"/><stop offset="0.974" stop-color="#0000ae"/><stop offset="1.000" stop-color="#000084"/></linearGradient><linearGradient id="b42" x1="0" y1="0" x2="0" y2="1"><stop offset="0.000" stop-color="#000"/><stop offset="0.171" stop-color="#000003"/><stop offset="0.223" stop-color="#0000d4"/><stop offset="0.251" stop-color="#00f"/><stop offset="0.301" stop-color="#0049ff"/><stop offset="0.335" stop-color="#00e6ff"/><stop offset="0.379" stop-color="#00fffe"/><stop offset="0.408" stop-color="#00ffed"/><stop offset="0.436" stop-color="#00ff8f"/><stop offset="0.506" stop-color="#00ff68"/><stop offset="0.587" stop-color="#02ff00"/><stop offset="0.650" stop-color="#7f0"/><stop offset="0.685" stop-color="#00ff05"/><stop offset="0.725" stop-color="#00ff6a"/><stop offset="0.760" stop-color="#00ff90"/><stop offset="0.783" stop-color="#00ffe3"/><stop offset="0.798" stop-color="#00fffe"/><stop offset="0.815" stop-color="#00dfff"/><stop offset="0.850" stop-color="#0047ff"/><stop offset="0.934" stop-color="#00f"/><stop offset="0.983" stop-color="#0000d5"/><stop offset="1.000" stop-color="#0000b8"/></linearGradient><linearGradient id="b43" x1="0" y1="0" x2="0" y2="1"><stop offset="0.000" stop-color="#000"/><stop offset="0.168" stop-color="#000"/><stop offset="0.214" stop-color="#0000ca"/><stop offset="0.240" stop-color="#0001ff"/><stop offset="0.272" stop-color="#0041ff"/><stop offset="0.306" stop-color="#0df"/><stop offset="0.350" stop-color="#00fffe"/><stop offset="0.370" stop-color="#00ffef"/><stop offset="0.396" stop-color="#00ff92"/><stop offset="0.477" stop-color="#00ff69"/><stop offset="0.569" stop-color="#01ff00"/><stop offset="0.653" stop-color="#8cff00"/><stop offset="0.688" stop-color="#00ff01"/><stop offset="0.725" stop-color="#00ff6a"/><stop offset="0.757" stop-color="#00ff91"/><stop offset="0.783" stop-color="#00ffec"/><stop offset="0.795" stop-color="#00fdff"/><stop offset="0.812" stop-color="#00dbff"/><stop offset="0.847" stop-color="#0042ff"/><stop offset="0.928" stop-color="#00f"/><stop offset="1.000" stop-color="#0000b9"/></linearGradient><linearGradient id="b44" x1="0" y1="0" x2="0" y2="1"><stop offset="0.000" stop-color="#000"/><stop offset="0.159" stop-color="#000"/><stop offset="0.205" stop-color="#0000c6"/><stop offset="0.225" stop-color="#0001ff"/><stop offset="0.243" stop-color="#03f"/><stop offset="0.277" stop-color="#00d4ff"/><stop offset="0.321" stop-color="#00fffd"/><stop offset="0.332" stop-color="#00ffec"/><stop offset="0.358" stop-color="#00ff8e"/><stop offset="0.445" stop-color="#00ff67"/><stop offset="0.546" stop-color="#01ff00"/><stop offset="0.656" stop-color="#af0"/><stop offset="0.694" stop-color="#00ff05"/><stop offset="0.725" stop-color="#00ff67"/><stop offset="0.754" stop-color="#00ff8e"/><stop offset="0.786" stop-color="#00feff"/><stop offset="0.803" stop-color="#00d7ff"/><stop offset="0.838" stop-color="#0035ff"/><stop offset="0.902" stop-color="#0000fe"/><stop offset="0.971" stop-color="#0000c4"/><stop offset="1.000" stop-color="#000096"/></linearGradient><linearGradient id="b45" x1="0" y1="0" x2="0" y2="1"><stop offset="0.000" stop-color="#000"/><stop offset="0.145" stop-color="#000"/><stop offset="0.194" stop-color="#0000a5"/><stop offset="0.231" stop-color="#0000fd"/><stop offset="0.240" stop-color="#0019ff"/><stop offset="0.272" stop-color="#00bdff"/><stop offset="0.321" stop-color="#00fffc"/><stop offset="0.353" stop-color="#00ff84"/><stop offset="0.434" stop-color="#00ff60"/><stop offset="0.529" stop-color="#01ff00"/><stop offset="0.656" stop-color="#caff00"/><stop offset="0.697" stop-color="#0f0"/><stop offset="0.725" stop-color="#00ff5e"/><stop offset="0.754" stop-color="#00ff8b"/><stop offset="0.783" stop-color="#00f6ff"/><stop offset="0.801" stop-color="#00beff"/><stop offset="0.835" stop-color="#000dff"/><stop offset="0.853" stop-color="#0000fd"/><stop offset="0.965" stop-color="#0000a4"/><stop offset="1.000" stop-color="#000071"/></linearGradient><linearGradient id="b46" x1="0" y1="0" x2="0" y2="1"><stop offset="0.000" stop-color="#000"/><stop offset="0.127" stop-color="#000"/><stop offset="0.182" stop-color="#0000af"/><stop offset="0.220" stop-color="#0000fe"/><stop offset="0.231" stop-color="#001bff"/><stop offset="0.266" stop-color="#00caff"/><stop offset="0.309" stop-color="#00fffb"/><stop offset="0.321" stop-color="#00ffe1"/><stop offset="0.347" stop-color="#00ff7d"/><stop offset="0.425" stop-color="#00ff5a"/><stop offset="0.514" stop-color="#0f0"/><stop offset="0.584" stop-color="#63ff00"/><stop offset="0.656" stop-color="#e2ff00"/><stop offset="0.679" stop-color="#5dff00"/><stop offset="0.699" stop-color="#00ff02"/><stop offset="0.725" stop-color="#00ff59"/><stop offset="0.751" stop-color="#00ff82"/><stop offset="0.783" stop-color="#00f6ff"/><stop offset="0.798" stop-color="#00c1ff"/><stop offset="0.832" stop-color="#0016ff"/><stop offset="0.858" stop-color="#0000fe"/><stop offset="0.954" stop-color="#0000ac"/><stop offset="1.000" stop-color="#000060"/></linearGradient><linearGradient id="b47" x1="0" y1="0" x2="0" y2="1"><stop offset="0.000" stop-color="#000"/><stop offset="0.127" stop-color="#000"/><stop offset="0.179" stop-color="#0000b9"/><stop offset="0.208" stop-color="#0000fd"/><stop offset="0.228" stop-color="#002dff"/><stop offset="0.266" stop-color="#00cdff"/><stop offset="0.318" stop-color="#00fff9"/><stop offset="0.341" stop-color="#00ffa4"/><stop offset="0.442" stop-color="#00ff74"/><stop offset="0.558" stop-color="#02ff00"/><stop offset="0.656" stop-color="#94ff00"/><stop offset="0.685" stop-color="#02ff00"/><stop offset="0.714" stop-color="#00ff67"/><stop offset="0.731" stop-color="#00ff8f"/><stop offset="0.749" stop-color="#00ffa2"/><stop offset="0.775" stop-color="#00fcff"/><stop offset="0.795" stop-color="#00c6ff"/><stop offset="0.829" stop-color="#002eff"/><stop offset="0.879" stop-color="#00f"/><stop offset="0.948" stop-color="#0000bf"/><stop offset="1.000" stop-color="#00005f"/></linearGradient><linearGradient id="b48" x1="0" y1="0" x2="0" y2="1"><stop offset="0.000" stop-color="#000"/><stop offset="0.139" stop-color="#000"/><stop offset="0.191" stop-color="#0000ba"/><stop offset="0.220" stop-color="#0000fd"/><stop offset="0.237" stop-color="#0029ff"/><stop offset="0.272" stop-color="#00ceff"/><stop offset="0.318" stop-color="#00fffc"/><stop offset="0.324" stop-color="#00fff4"/><stop offset="0.350" stop-color="#00ff8c"/><stop offset="0.436" stop-color="#00ff63"/><stop offset="0.532" stop-color="#01ff00"/><stop offset="0.653" stop-color="#c1ff00"/><stop offset="0.691" stop-color="#01ff00"/><stop offset="0.720" stop-color="#00ff64"/><stop offset="0.746" stop-color="#00ff8c"/><stop offset="0.775" stop-color="#00fdff"/><stop offset="0.789" stop-color="#00ceff"/><stop offset="0.827" stop-color="#0023ff"/><stop offset="0.864" stop-color="#00f"/><stop offset="0.942" stop-color="#0000b8"/><stop offset="1.000" stop-color="#00004f"/></linearGradient><linearGradient id="b49" x1="0" y1="0" x2="0" y2="1"><stop offset="0.000" stop-color="#000"/><stop offset="0.139" stop-color="#000001"/><stop offset="0.188" stop-color="#0000cf"/><stop offset="0.208" stop-color="#0000fd"/><stop offset="0.240" stop-color="#0046ff"/><stop offset="0.275" stop-color="#00e7ff"/><stop offset="0.306" stop-color="#0ff"/><stop offset="0.338" stop-color="#00ffe6"/><stop offset="0.364" stop-color="#00ff86"/><stop offset="0.442" stop-color="#00ff63"/><stop offset="0.538" stop-color="#03ff00"/><stop offset="0.650" stop-color="#baff00"/><stop offset="0.688" stop-color="#01ff00"/><stop offset="0.717" stop-color="#00ff61"/><stop offset="0.743" stop-color="#00ff89"/><stop offset="0.777" stop-color="#00feff"/><stop offset="0.786" stop-color="#00e8ff"/><stop offset="0.824" stop-color="#0043ff"/><stop offset="0.899" stop-color="#0000fe"/><stop offset="0.951" stop-color="#0000cd"/><stop offset="1.000" stop-color="#00006c"/></linearGradient><linearGradient id="b50" x1="0" y1="0" x2="0" y2="1"><stop offset="0.000" stop-color="#000"/><stop offset="0.139" stop-color="#000"/><stop offset="0.188" stop-color="#0000c1"/><stop offset="0.220" stop-color="#0002ff"/><stop offset="0.243" stop-color="#0031ff"/><stop offset="0.280" stop-color="#00daff"/><stop offset="0.332" stop-color="#00fffd"/><stop offset="0.350" stop-color="#00ffef"/><stop offset="0.376" stop-color="#00ff8b"/><stop offset="0.457" stop-color="#00ff62"/><stop offset="0.546" stop-color="#01ff00"/><stop offset="0.647" stop-color="#a7ff00"/><stop offset="0.685" stop-color="#00ff07"/><stop offset="0.714" stop-color="#00ff64"/><stop offset="0.740" stop-color="#00ff8a"/><stop offset="0.772" stop-color="#00feff"/><stop offset="0.786" stop-color="#00d9ff"/><stop offset="0.821" stop-color="#03f"/><stop offset="0.887" stop-color="#0000fe"/><stop offset="0.965" stop-color="#0000c2"/><stop offset="1.000" stop-color="#000087"/></linearGradient><linearGradient id="b51" x1="0" y1="0" x2="0" y2="1"><stop offset="0.000" stop-color="#000"/><stop offset="0.124" stop-color="#000"/><stop offset="0.176" stop-color="#0000de"/><stop offset="0.197" stop-color="#0000fe"/><stop offset="0.251" stop-color="#0054ff"/><stop offset="0.286" stop-color="#00f4ff"/><stop offset="0.309" stop-color="#00fffe"/><stop offset="0.367" stop-color="#00ffe6"/><stop offset="0.396" stop-color="#00ff82"/><stop offset="0.468" stop-color="#00ff5d"/><stop offset="0.552" stop-color="#02ff00"/><stop offset="0.645" stop-color="#9fff00"/><stop offset="0.679" stop-color="#00ff07"/><stop offset="0.705" stop-color="#00ff5d"/><stop offset="0.731" stop-color="#00ff85"/><stop offset="0.754" stop-color="#00ffdf"/><stop offset="0.783" stop-color="#00fdff"/><stop offset="0.792" stop-color="#00edff"/><stop offset="0.827" stop-color="#0053ff"/><stop offset="0.936" stop-color="#00f"/><stop offset="0.980" stop-color="#00d"/><stop offset="1.000" stop-color="#00b"/></linearGradient><linearGradient id="b52" x1="0" y1="0" x2="0" y2="1"><stop offset="0.000" stop-color="#000"/><stop offset="0.107" stop-color="#000"/><stop offset="0.156" stop-color="#0000de"/><stop offset="0.185" stop-color="#00f"/><stop offset="0.275" stop-color="#005aff"/><stop offset="0.309" stop-color="#00f4ff"/><stop offset="0.332" stop-color="#0ff"/><stop offset="0.399" stop-color="#00ffe6"/><stop offset="0.425" stop-color="#00ff8d"/><stop offset="0.497" stop-color="#00ff67"/><stop offset="0.584" stop-color="#04ff00"/><stop offset="0.639" stop-color="#62ff00"/><stop offset="0.659" stop-color="#00ff04"/><stop offset="0.682" stop-color="#00ff5f"/><stop offset="0.708" stop-color="#00ff8f"/><stop offset="0.731" stop-color="#00ffe4"/><stop offset="0.780" stop-color="#0ff"/><stop offset="0.798" stop-color="#0ef"/><stop offset="0.832" stop-color="#0059ff"/><stop offset="0.934" stop-color="#0000fe"/><stop offset="0.965" stop-color="#0000e1"/><stop offset="1.000" stop-color="#00009a"/></linearGradient><linearGradient id="b53" x1="0" y1="0" x2="0" y2="1"><stop offset="0.000" stop-color="#000"/><stop offset="0.116" stop-color="#000"/><stop offset="0.159" stop-color="#0000d5"/><stop offset="0.205" stop-color="#0000fe"/><stop offset="0.292" stop-color="#004aff"/><stop offset="0.306" stop-color="#008dff"/><stop offset="0.327" stop-color="#00ceff"/><stop offset="0.419" stop-color="#00efff"/><stop offset="0.428" stop-color="#00fffe"/><stop offset="0.448" stop-color="#00ffd2"/><stop offset="0.535" stop-color="#00ffa6"/><stop offset="0.633" stop-color="#00ff36"/><stop offset="0.671" stop-color="#00ffae"/><stop offset="0.717" stop-color="#00fdff"/><stop offset="0.723" stop-color="#00efff"/><stop offset="0.801" stop-color="#00cfff"/><stop offset="0.824" stop-color="#08f"/><stop offset="0.838" stop-color="#0049ff"/><stop offset="0.916" stop-color="#0001ff"/><stop offset="0.962" stop-color="#0000d5"/><stop offset="1.000" stop-color="#00008b"/></linearGradient><linearGradient id="b54" x1="0" y1="0" x2="0" y2="1"><stop offset="0.000" stop-color="#000"/><stop offset="0.127" stop-color="#000"/><stop offset="0.168" stop-color="#0000c5"/><stop offset="0.228" stop-color="#00f"/><stop offset="0.283" stop-color="#0035ff"/><stop offset="0.298" stop-color="#0075ff"/><stop offset="0.321" stop-color="#00b3ff"/><stop offset="0.425" stop-color="#00d0ff"/><stop offset="0.445" stop-color="#0ff"/><stop offset="0.454" stop-color="#0fe"/><stop offset="0.546" stop-color="#00ffbc"/><stop offset="0.627" stop-color="#00ff62"/><stop offset="0.671" stop-color="#00ffc6"/><stop offset="0.711" stop-color="#00fffb"/><stop offset="0.734" stop-color="#00d0ff"/><stop offset="0.803" stop-color="#00b1ff"/><stop offset="0.824" stop-color="#0078ff"/><stop offset="0.838" stop-color="#0036ff"/><stop offset="0.902" stop-color="#0000fe"/><stop offset="0.968" stop-color="#0000c5"/><stop offset="1.000" stop-color="#00008a"/></linearGradient><linearGradient id="b55" x1="0" y1="0" x2="0" y2="1"><stop offset="0.000" stop-color="#000"/><stop offset="0.118" stop-color="#000"/><stop offset="0.162" stop-color="#0000b3"/><stop offset="0.240" stop-color="#0000fe"/><stop offset="0.272" stop-color="#0020ff"/><stop offset="0.306" stop-color="#00b9ff"/><stop offset="0.428" stop-color="#00ecff"/><stop offset="0.434" stop-color="#0ff"/><stop offset="0.439" stop-color="#00ffdf"/><stop offset="0.457" stop-color="#0fa"/><stop offset="0.526" stop-color="#00ff7a"/><stop offset="0.604" stop-color="#01ff00"/><stop offset="0.621" stop-color="#24ff00"/><stop offset="0.633" stop-color="#04ff00"/><stop offset="0.676" stop-color="#00ff79"/><stop offset="0.717" stop-color="#00ffad"/><stop offset="0.740" stop-color="#00f5ff"/><stop offset="0.801" stop-color="#00baff"/><stop offset="0.838" stop-color="#001dff"/><stop offset="0.873" stop-color="#00f"/><stop offset="0.965" stop-color="#0000b2"/><stop offset="1.000" stop-color="#007"/></linearGradient><linearGradient id="b56" x1="0" y1="0" x2="0" y2="1"><stop offset="0.000" stop-color="#000"/><stop offset="0.098" stop-color="#000"/><stop offset="0.147" stop-color="#00c"/><stop offset="0.185" stop-color="#0000fe"/><stop offset="0.240" stop-color="#04f"/><stop offset="0.275" stop-color="#00e9ff"/><stop offset="0.338" stop-color="#0ff"/><stop offset="0.434" stop-color="#00ffe2"/><stop offset="0.460" stop-color="#00ff7a"/><stop offset="0.506" stop-color="#00ff57"/><stop offset="0.558" stop-color="#03ff00"/><stop offset="0.618" stop-color="#9bff00"/><stop offset="0.659" stop-color="#0f0"/><stop offset="0.694" stop-color="#00ff59"/><stop offset="0.725" stop-color="#00ff7f"/><stop offset="0.751" stop-color="#00ffe3"/><stop offset="0.783" stop-color="#0ff"/><stop offset="0.803" stop-color="#00ecff"/><stop offset="0.841" stop-color="#0043ff"/><stop offset="0.922" stop-color="#0000fe"/><stop offset="0.977" stop-color="#0000d0"/><stop offset="1.000" stop-color="#0000a7"/></linearGradient><linearGradient id="b57" x1="0" y1="0" x2="0" y2="1"><stop offset="0.000" stop-color="#000"/><stop offset="0.098" stop-color="#000"/><stop offset="0.150" stop-color="#0000e7"/><stop offset="0.162" stop-color="#0001ff"/><stop offset="0.208" stop-color="#0065ff"/><stop offset="0.243" stop-color="#00fffc"/><stop offset="0.439" stop-color="#00ffdf"/><stop offset="0.465" stop-color="#00ff75"/><stop offset="0.503" stop-color="#00ff56"/><stop offset="0.549" stop-color="#04ff00"/><stop offset="0.613" stop-color="#c4ff00"/><stop offset="0.665" stop-color="#0f0"/><stop offset="0.699" stop-color="#00ff54"/><stop offset="0.731" stop-color="#00ff76"/><stop offset="0.757" stop-color="#00ffe0"/><stop offset="0.806" stop-color="#00f5ff"/><stop offset="0.838" stop-color="#0062ff"/><stop offset="0.951" stop-color="#0001ff"/><stop offset="0.977" stop-color="#0000e8"/><stop offset="1.000" stop-color="#0000bf"/></linearGradient><linearGradient id="b58" x1="0" y1="0" x2="0" y2="1"><stop offset="0.000" stop-color="#000"/><stop offset="0.107" stop-color="#000"/><stop offset="0.156" stop-color="#0000ab"/><stop offset="0.173" stop-color="#000aff"/><stop offset="0.214" stop-color="#00d0ff"/><stop offset="0.387" stop-color="#0ff"/><stop offset="0.442" stop-color="#00ffeb"/><stop offset="0.471" stop-color="#00ff81"/><stop offset="0.509" stop-color="#00ff5b"/><stop offset="0.549" stop-color="#0f0"/><stop offset="0.607" stop-color="#c9ff00"/><stop offset="0.662" stop-color="#02ff00"/><stop offset="0.702" stop-color="#00ff5d"/><stop offset="0.737" stop-color="#00ff81"/><stop offset="0.766" stop-color="#00fff0"/><stop offset="0.775" stop-color="#00fcff"/><stop offset="0.801" stop-color="#00cdff"/><stop offset="0.835" stop-color="#02f"/><stop offset="0.879" stop-color="#0000fe"/><stop offset="0.974" stop-color="#0000b4"/><stop offset="1.000" stop-color="#00008c"/></linearGradient><linearGradient id="b59" x1="0" y1="0" x2="0" y2="1"><stop offset="0.000" stop-color="#000"/><stop offset="0.121" stop-color="#000004"/><stop offset="0.168" stop-color="#0000bc"/><stop offset="0.173" stop-color="#0000f4"/><stop offset="0.176" stop-color="#01f"/><stop offset="0.179" stop-color="#002dff"/><stop offset="0.191" stop-color="#0064ff"/><stop offset="0.214" stop-color="#00bdff"/><stop offset="0.451" stop-color="#00e8ff"/><stop offset="0.460" stop-color="#00fff9"/><stop offset="0.477" stop-color="#00ffbd"/><stop offset="0.526" stop-color="#00ff87"/><stop offset="0.581" stop-color="#02ff00"/><stop offset="0.604" stop-color="#4cff00"/><stop offset="0.627" stop-color="#0f0"/><stop offset="0.682" stop-color="#00ff87"/><stop offset="0.731" stop-color="#0fb"/><stop offset="0.751" stop-color="#00feff"/><stop offset="0.760" stop-color="#00e5ff"/><stop offset="0.792" stop-color="#0bf"/><stop offset="0.827" stop-color="#002cff"/><stop offset="0.879" stop-color="#0000fe"/><stop offset="0.957" stop-color="#0000bc"/><stop offset="1.000" stop-color="#000074"/></linearGradient><linearGradient id="b60" x1="0" y1="0" x2="0" y2="1"><stop offset="0.000" stop-color="#000"/><stop offset="0.104" stop-color="#000"/><stop offset="0.156" stop-color="#0000ca"/><stop offset="0.162" stop-color="#0000f7"/><stop offset="0.165" stop-color="#0010ff"/><stop offset="0.171" stop-color="#0041ff"/><stop offset="0.205" stop-color="#00dcff"/><stop offset="0.399" stop-color="#0ff"/><stop offset="0.457" stop-color="#00fff4"/><stop offset="0.483" stop-color="#00ff9a"/><stop offset="0.517" stop-color="#00ff70"/><stop offset="0.561" stop-color="#09ff00"/><stop offset="0.601" stop-color="#a7ff00"/><stop offset="0.630" stop-color="#35ff00"/><stop offset="0.647" stop-color="#00ff06"/><stop offset="0.688" stop-color="#00ff6d"/><stop offset="0.728" stop-color="#00ff9e"/><stop offset="0.751" stop-color="#00ffef"/><stop offset="0.763" stop-color="#00fdff"/><stop offset="0.789" stop-color="#00d7ff"/><stop offset="0.824" stop-color="#0040ff"/><stop offset="0.899" stop-color="#0000fe"/><stop offset="0.954" stop-color="#0000ce"/><stop offset="1.000" stop-color="#000081"/></linearGradient><linearGradient id="b61" x1="0" y1="0" x2="0" y2="1"><stop offset="0.000" stop-color="#000"/><stop offset="0.101" stop-color="#000"/><stop offset="0.156" stop-color="#0000e8"/><stop offset="0.159" stop-color="#0006ff"/><stop offset="0.168" stop-color="#0056ff"/><stop offset="0.202" stop-color="#00f5ff"/><stop offset="0.260" stop-color="#0ff"/><stop offset="0.462" stop-color="#00ffdf"/><stop offset="0.488" stop-color="#0f7"/><stop offset="0.514" stop-color="#00ff53"/><stop offset="0.540" stop-color="#00ff04"/><stop offset="0.564" stop-color="#5eff00"/><stop offset="0.592" stop-color="#fbff00"/><stop offset="0.595" stop-color="#fff100"/><stop offset="0.601" stop-color="#fcff00"/><stop offset="0.636" stop-color="#5aff00"/><stop offset="0.662" stop-color="#00ff05"/><stop offset="0.694" stop-color="#00ff56"/><stop offset="0.723" stop-color="#00ff79"/><stop offset="0.749" stop-color="#00ffe1"/><stop offset="0.775" stop-color="#00fdff"/><stop offset="0.780" stop-color="#00f5ff"/><stop offset="0.815" stop-color="#004fff"/><stop offset="0.902" stop-color="#0000fe"/><stop offset="0.942" stop-color="#0000d8"/><stop offset="1.000" stop-color="#00006e"/></linearGradient><linearGradient id="b62" x1="0" y1="0" x2="0" y2="1"><stop offset="0.000" stop-color="#000"/><stop offset="0.107" stop-color="#000004"/><stop offset="0.153" stop-color="#0000e4"/><stop offset="0.156" stop-color="#0010ff"/><stop offset="0.162" stop-color="#0058ff"/><stop offset="0.194" stop-color="#00efff"/><stop offset="0.249" stop-color="#0ff"/><stop offset="0.474" stop-color="#00ffe0"/><stop offset="0.500" stop-color="#00ff7d"/><stop offset="0.532" stop-color="#00ff5f"/><stop offset="0.546" stop-color="#00ff35"/><stop offset="0.558" stop-color="#01ff00"/><stop offset="0.572" stop-color="#61ff00"/><stop offset="0.590" stop-color="#fff700"/><stop offset="0.592" stop-color="#ffd500"/><stop offset="0.598" stop-color="#fdff00"/><stop offset="0.618" stop-color="#65ff00"/><stop offset="0.639" stop-color="#00ff05"/><stop offset="0.653" stop-color="#00ff38"/><stop offset="0.671" stop-color="#00ff5f"/><stop offset="0.708" stop-color="#00ff76"/><stop offset="0.737" stop-color="#00ffe3"/><stop offset="0.766" stop-color="#00feff"/><stop offset="0.772" stop-color="#00f6ff"/><stop offset="0.806" stop-color="#0052ff"/><stop offset="0.896" stop-color="#0000fd"/><stop offset="0.934" stop-color="#0000d9"/><stop offset="1.000" stop-color="#00006e"/></linearGradient><linearGradient id="b63" x1="0" y1="0" x2="0" y2="1"><stop offset="0.000" stop-color="#000"/><stop offset="0.113" stop-color="#000"/><stop offset="0.118" stop-color="#002"/><stop offset="0.145" stop-color="#0008ff"/><stop offset="0.147" stop-color="#0043ff"/><stop offset="0.156" stop-color="#004bff"/><stop offset="0.188" stop-color="#00e5ff"/><stop offset="0.191" stop-color="#00e8ff"/><stop offset="0.327" stop-color="#0ff"/><stop offset="0.491" stop-color="#00ffe2"/><stop offset="0.517" stop-color="#00ff7d"/><stop offset="0.543" stop-color="#00ff5c"/><stop offset="0.561" stop-color="#00ff04"/><stop offset="0.572" stop-color="#62ff00"/><stop offset="0.584" stop-color="#f2ff00"/><stop offset="0.587" stop-color="#ffe100"/><stop offset="0.590" stop-color="#ffbe00"/><stop offset="0.595" stop-color="#fffe00"/><stop offset="0.616" stop-color="#4dff00"/><stop offset="0.627" stop-color="#05ff00"/><stop offset="0.630" stop-color="#00ff0a"/><stop offset="0.656" stop-color="#00ff62"/><stop offset="0.688" stop-color="#00ff7a"/><stop offset="0.714" stop-color="#00ffe0"/><stop offset="0.731" stop-color="#0ff"/><stop offset="0.746" stop-color="#00e3ff"/><stop offset="0.780" stop-color="#003eff"/><stop offset="0.827" stop-color="#0003ff"/><stop offset="0.870" stop-color="#0000ca"/><stop offset="0.988" stop-color="#000003"/><stop offset="1.000" stop-color="#000"/></linearGradient><linearGradient id="b64" x1="0" y1="0" x2="0" y2="1"><stop offset="0.000" stop-color="#000"/><stop offset="0.113" stop-color="#000"/><stop offset="0.116" stop-color="#000008"/><stop offset="0.139" stop-color="#0000e6"/><stop offset="0.142" stop-color="#0029ff"/><stop offset="0.145" stop-color="#00a9ff"/><stop offset="0.147" stop-color="#0ff"/><stop offset="0.153" stop-color="#0ff"/><stop offset="0.159" stop-color="#0048ff"/><stop offset="0.202" stop-color="#0001ff"/><stop offset="0.214" stop-color="#0000fb"/><stop offset="0.220" stop-color="#005cff"/><stop offset="0.254" stop-color="#00f7ff"/><stop offset="0.509" stop-color="#00ffe4"/><stop offset="0.535" stop-color="#00ff80"/><stop offset="0.549" stop-color="#00ff6c"/><stop offset="0.558" stop-color="#00ff3e"/><stop offset="0.564" stop-color="#00ff0b"/><stop offset="0.566" stop-color="#15ff00"/><stop offset="0.572" stop-color="#64ff00"/><stop offset="0.581" stop-color="#fffa00"/><stop offset="0.584" stop-color="#ffb900"/><stop offset="0.587" stop-color="#ffb700"/><stop offset="0.592" stop-color="#f5ff00"/><stop offset="0.607" stop-color="#52ff00"/><stop offset="0.618" stop-color="#00ff09"/><stop offset="0.639" stop-color="#00ff65"/><stop offset="0.665" stop-color="#00ff80"/><stop offset="0.691" stop-color="#00ffe3"/><stop offset="0.714" stop-color="#00fdff"/><stop offset="0.751" stop-color="#005bff"/><stop offset="0.809" stop-color="#00f"/><stop offset="0.942" stop-color="#000002"/><stop offset="1.000" stop-color="#000"/></linearGradient><linearGradient id="b65" x1="0" y1="0" x2="0" y2="1"><stop offset="0.000" stop-color="#000"/><stop offset="0.116" stop-color="#000002"/><stop offset="0.139" stop-color="#0000b5"/><stop offset="0.142" stop-color="#0000e9"/><stop offset="0.145" stop-color="#0067ff"/><stop offset="0.147" stop-color="#00eaff"/><stop offset="0.153" stop-color="#00eaff"/><stop offset="0.156" stop-color="#009aff"/><stop offset="0.159" stop-color="#0031ff"/><stop offset="0.162" stop-color="#0010ff"/><stop offset="0.171" stop-color="#0004ff"/><stop offset="0.332" stop-color="#00004b"/><stop offset="0.396" stop-color="#0000b2"/><stop offset="0.413" stop-color="#0000f8"/><stop offset="0.425" stop-color="#002aff"/><stop offset="0.457" stop-color="#00cbff"/><stop offset="0.506" stop-color="#00feff"/><stop offset="0.523" stop-color="#00ffe8"/><stop offset="0.549" stop-color="#00ff82"/><stop offset="0.555" stop-color="#00ff7a"/><stop offset="0.561" stop-color="#00ff57"/><stop offset="0.566" stop-color="#00ff06"/><stop offset="0.569" stop-color="#37ff00"/><stop offset="0.575" stop-color="#e6ff00"/><stop offset="0.578" stop-color="#ffa500"/><stop offset="0.581" stop-color="#ff7400"/><stop offset="0.587" stop-color="#fff900"/><stop offset="0.595" stop-color="#68ff00"/><stop offset="0.604" stop-color="#00ff06"/><stop offset="0.610" stop-color="#00ff39"/><stop offset="0.618" stop-color="#00ff68"/><stop offset="0.636" stop-color="#00ff83"/><stop offset="0.665" stop-color="#00fffe"/><stop offset="0.668" stop-color="#00f3ff"/><stop offset="0.711" stop-color="#0024ff"/><stop offset="0.737" stop-color="#0001ff"/><stop offset="0.803" stop-color="#0000b1"/><stop offset="0.893" stop-color="#000002"/><stop offset="1.000" stop-color="#000"/></linearGradient><linearGradient id="b66" x1="0" y1="0" x2="0" y2="1"><stop offset="0.000" stop-color="#000"/><stop offset="0.116" stop-color="#000"/><stop offset="0.139" stop-color="#0000e0"/><stop offset="0.142" stop-color="#0018ff"/><stop offset="0.145" stop-color="#009bff"/><stop offset="0.147" stop-color="#00fff1"/><stop offset="0.153" stop-color="#00ffe7"/><stop offset="0.156" stop-color="#00f0ff"/><stop offset="0.159" stop-color="#0090ff"/><stop offset="0.162" stop-color="#004aff"/><stop offset="0.205" stop-color="#0000fe"/><stop offset="0.295" stop-color="#000072"/><stop offset="0.361" stop-color="#000024"/><stop offset="0.462" stop-color="#0000e3"/><stop offset="0.468" stop-color="#0000fb"/><stop offset="0.491" stop-color="#0058ff"/><stop offset="0.526" stop-color="#00f6ff"/><stop offset="0.561" stop-color="#00ff76"/><stop offset="0.564" stop-color="#00ff5c"/><stop offset="0.566" stop-color="#00ff2d"/><stop offset="0.569" stop-color="#1eff00"/><stop offset="0.572" stop-color="#89ff00"/><stop offset="0.575" stop-color="#ffe800"/><stop offset="0.578" stop-color="#f30"/><stop offset="0.584" stop-color="#fff200"/><stop offset="0.592" stop-color="#3eff00"/><stop offset="0.595" stop-color="#0dff00"/><stop offset="0.598" stop-color="#00ff1b"/><stop offset="0.604" stop-color="#00ff54"/><stop offset="0.610" stop-color="#00ff73"/><stop offset="0.621" stop-color="#00ff89"/><stop offset="0.653" stop-color="#00fcff"/><stop offset="0.688" stop-color="#005eff"/><stop offset="0.757" stop-color="#0001ff"/><stop offset="0.780" stop-color="#0000de"/><stop offset="0.853" stop-color="#000"/><stop offset="1.000" stop-color="#000"/></linearGradient><linearGradient id="b67" x1="0" y1="0" x2="0" y2="1"><stop offset="0.000" stop-color="#000"/><stop offset="0.116" stop-color="#000"/><stop offset="0.139" stop-color="#0000d5"/><stop offset="0.142" stop-color="#0007ff"/><stop offset="0.147" stop-color="#00fffd"/><stop offset="0.150" stop-color="#00ffe6"/><stop offset="0.156" stop-color="#00fff7"/><stop offset="0.162" stop-color="#0045ff"/><stop offset="0.208" stop-color="#0000fc"/><stop offset="0.292" stop-color="#000084"/><stop offset="0.364" stop-color="#000030"/><stop offset="0.460" stop-color="#0000d9"/><stop offset="0.471" stop-color="#0002ff"/><stop offset="0.494" stop-color="#005aff"/><stop offset="0.529" stop-color="#00fffe"/><stop offset="0.532" stop-color="#00ffe6"/><stop offset="0.561" stop-color="#00ff7c"/><stop offset="0.564" stop-color="#00ff69"/><stop offset="0.566" stop-color="#00ff3d"/><stop offset="0.569" stop-color="#0dff00"/><stop offset="0.572" stop-color="#7cff00"/><stop offset="0.575" stop-color="#ffe800"/><stop offset="0.578" stop-color="#ff2000"/><stop offset="0.581" stop-color="#ff9e00"/><stop offset="0.584" stop-color="#f4ff00"/><stop offset="0.587" stop-color="#98ff00"/><stop offset="0.592" stop-color="#0eff00"/><stop offset="0.595" stop-color="#00ff23"/><stop offset="0.598" stop-color="#00ff48"/><stop offset="0.604" stop-color="#00ff73"/><stop offset="0.613" stop-color="#00ff83"/><stop offset="0.642" stop-color="#00fffd"/><stop offset="0.645" stop-color="#00efff"/><stop offset="0.679" stop-color="#0054ff"/><stop offset="0.749" stop-color="#0001ff"/><stop offset="0.777" stop-color="#00d"/><stop offset="0.850" stop-color="#000"/><stop offset="1.000" stop-color="#000"/></linearGradient><linearGradient id="b68" x1="0" y1="0" x2="0" y2="1"><stop offset="0.000" stop-color="#000"/><stop offset="0.118" stop-color="#000001"/><stop offset="0.142" stop-color="#0000df"/><stop offset="0.145" stop-color="#0032ff"/><stop offset="0.147" stop-color="#00b2ff"/><stop offset="0.150" stop-color="#00ffe6"/><stop offset="0.156" stop-color="#00ffe6"/><stop offset="0.159" stop-color="#00ecff"/><stop offset="0.162" stop-color="#008bff"/><stop offset="0.165" stop-color="#0046ff"/><stop offset="0.211" stop-color="#0002ff"/><stop offset="0.370" stop-color="#00003b"/><stop offset="0.460" stop-color="#0000db"/><stop offset="0.468" stop-color="#0000f8"/><stop offset="0.494" stop-color="#0058ff"/><stop offset="0.529" stop-color="#00f8ff"/><stop offset="0.564" stop-color="#00ff74"/><stop offset="0.566" stop-color="#00ff4f"/><stop offset="0.569" stop-color="#00ff08"/><stop offset="0.572" stop-color="#6cff00"/><stop offset="0.575" stop-color="#ffec00"/><stop offset="0.578" stop-color="#ff0d00"/><stop offset="0.581" stop-color="#ffaf00"/><stop offset="0.584" stop-color="#caff00"/><stop offset="0.587" stop-color="#60ff00"/><stop offset="0.590" stop-color="#0dff00"/><stop offset="0.592" stop-color="#00ff2f"/><stop offset="0.598" stop-color="#00ff71"/><stop offset="0.630" stop-color="#00ffe4"/><stop offset="0.633" stop-color="#00fffe"/><stop offset="0.636" stop-color="#00edff"/><stop offset="0.668" stop-color="#005aff"/><stop offset="0.751" stop-color="#0001ff"/><stop offset="0.783" stop-color="#0000de"/><stop offset="0.858" stop-color="#000001"/><stop offset="1.000" stop-color="#000"/></linearGradient><linearGradient id="b69" x1="0" y1="0" x2="0" y2="1"><stop offset="0.000" stop-color="#000"/><stop offset="0.118" stop-color="#000"/><stop offset="0.121" stop-color="#000008"/><stop offset="0.145" stop-color="#0000c1"/><stop offset="0.147" stop-color="#002cff"/><stop offset="0.150" stop-color="#00afff"/><stop offset="0.153" stop-color="#00ffe6"/><stop offset="0.159" stop-color="#00ffe6"/><stop offset="0.162" stop-color="#00a3ff"/><stop offset="0.165" stop-color="#003bff"/><stop offset="0.168" stop-color="#001aff"/><stop offset="0.191" stop-color="#00f"/><stop offset="0.384" stop-color="#00004e"/><stop offset="0.457" stop-color="#0000b8"/><stop offset="0.480" stop-color="#0000fc"/><stop offset="0.494" stop-color="#002aff"/><stop offset="0.526" stop-color="#00c7ff"/><stop offset="0.532" stop-color="#00f2ff"/><stop offset="0.535" stop-color="#0fe"/><stop offset="0.564" stop-color="#00ff7c"/><stop offset="0.566" stop-color="#00ff63"/><stop offset="0.569" stop-color="#00ff27"/><stop offset="0.572" stop-color="#43ff00"/><stop offset="0.575" stop-color="#e4ff00"/><stop offset="0.578" stop-color="#ff3900"/><stop offset="0.581" stop-color="#ffa200"/><stop offset="0.584" stop-color="#b7ff00"/><stop offset="0.587" stop-color="#3bff00"/><stop offset="0.590" stop-color="#00ff1d"/><stop offset="0.592" stop-color="#0f5"/><stop offset="0.595" stop-color="#00ff73"/><stop offset="0.624" stop-color="#00ffdf"/><stop offset="0.627" stop-color="#00d3ff"/><stop offset="0.662" stop-color="#0028ff"/><stop offset="0.705" stop-color="#0001ff"/><stop offset="0.786" stop-color="#0000ba"/><stop offset="0.867" stop-color="#000"/><stop offset="1.000" stop-color="#000"/></linearGradient><linearGradient id="b70" x1="0" y1="0" x2="0" y2="1"><stop offset="0.000" stop-color="#000"/><stop offset="0.121" stop-color="#000"/><stop offset="0.145" stop-color="#0000de"/><stop offset="0.147" stop-color="#000cff"/><stop offset="0.150" stop-color="#0090ff"/><stop offset="0.153" stop-color="#00fff9"/><stop offset="0.156" stop-color="#00ffe6"/><stop offset="0.162" stop-color="#00ffec"/><stop offset="0.165" stop-color="#0bf"/><stop offset="0.168" stop-color="#0057ff"/><stop offset="0.246" stop-color="#0000fd"/><stop offset="0.387" stop-color="#00006c"/><stop offset="0.462" stop-color="#0000f9"/><stop offset="0.494" stop-color="#0063ff"/><stop offset="0.529" stop-color="#00fffe"/><stop offset="0.566" stop-color="#00ff75"/><stop offset="0.569" stop-color="#00ff4f"/><stop offset="0.572" stop-color="#00ff03"/><stop offset="0.575" stop-color="#7aff00"/><stop offset="0.578" stop-color="#ffcf00"/><stop offset="0.581" stop-color="#ff2100"/><stop offset="0.584" stop-color="#ffed00"/><stop offset="0.587" stop-color="#76ff00"/><stop offset="0.590" stop-color="#07ff00"/><stop offset="0.592" stop-color="#00ff42"/><stop offset="0.595" stop-color="#00ff6c"/><stop offset="0.624" stop-color="#00ffe1"/><stop offset="0.627" stop-color="#00f8ff"/><stop offset="0.662" stop-color="#0061ff"/><stop offset="0.757" stop-color="#00f"/><stop offset="0.780" stop-color="#0000e7"/><stop offset="0.853" stop-color="#000001"/><stop offset="1.000" stop-color="#000"/></linearGradient><linearGradient id="b71" x1="0" y1="0" x2="0" y2="1"><stop offset="0.000" stop-color="#000"/><stop offset="0.124" stop-color="#000"/><stop offset="0.147" stop-color="#0000ea"/><stop offset="0.150" stop-color="#0026ff"/><stop offset="0.153" stop-color="#0af"/><stop offset="0.156" stop-color="#00ffe8"/><stop offset="0.165" stop-color="#00ffec"/><stop offset="0.168" stop-color="#00bcff"/><stop offset="0.171" stop-color="#0063ff"/><stop offset="0.263" stop-color="#0000fd"/><stop offset="0.390" stop-color="#00007c"/><stop offset="0.460" stop-color="#0000fc"/><stop offset="0.494" stop-color="#006fff"/><stop offset="0.526" stop-color="#00feff"/><stop offset="0.540" stop-color="#00ffde"/><stop offset="0.566" stop-color="#00ff7d"/><stop offset="0.569" stop-color="#00ff69"/><stop offset="0.572" stop-color="#00ff36"/><stop offset="0.575" stop-color="#27ff00"/><stop offset="0.578" stop-color="#b7ff00"/><stop offset="0.581" stop-color="#ff7d00"/><stop offset="0.584" stop-color="#ff7500"/><stop offset="0.587" stop-color="#caff00"/><stop offset="0.590" stop-color="#3dff00"/><stop offset="0.592" stop-color="#00ff23"/><stop offset="0.595" stop-color="#00ff5d"/><stop offset="0.598" stop-color="#00ff78"/><stop offset="0.630" stop-color="#00f8ff"/><stop offset="0.662" stop-color="#006eff"/><stop offset="0.775" stop-color="#0002ff"/><stop offset="0.792" stop-color="#0000ec"/><stop offset="0.870" stop-color="#000"/><stop offset="1.000" stop-color="#000"/></linearGradient><linearGradient id="b72" x1="0" y1="0" x2="0" y2="1"><stop offset="0.000" stop-color="#000"/><stop offset="0.127" stop-color="#000"/><stop offset="0.130" stop-color="#00000b"/><stop offset="0.153" stop-color="#0000d8"/><stop offset="0.156" stop-color="#0053ff"/><stop offset="0.159" stop-color="#00d2ff"/><stop offset="0.162" stop-color="#00ffe6"/><stop offset="0.168" stop-color="#00ffeb"/><stop offset="0.171" stop-color="#00adff"/><stop offset="0.173" stop-color="#0047ff"/><stop offset="0.176" stop-color="#0032ff"/><stop offset="0.223" stop-color="#0001ff"/><stop offset="0.390" stop-color="#000064"/><stop offset="0.457" stop-color="#0000cb"/><stop offset="0.474" stop-color="#00f"/><stop offset="0.494" stop-color="#003eff"/><stop offset="0.535" stop-color="#0ff"/><stop offset="0.569" stop-color="#00ff78"/><stop offset="0.572" stop-color="#00ff59"/><stop offset="0.575" stop-color="#00ff17"/><stop offset="0.578" stop-color="#58ff00"/><stop offset="0.581" stop-color="#faff00"/><stop offset="0.584" stop-color="#ff2500"/><stop offset="0.587" stop-color="#ffc900"/><stop offset="0.590" stop-color="#82ff00"/><stop offset="0.592" stop-color="#06ff00"/><stop offset="0.595" stop-color="#00ff49"/><stop offset="0.598" stop-color="#00ff71"/><stop offset="0.624" stop-color="#00ffe5"/><stop offset="0.627" stop-color="#00d9ff"/><stop offset="0.659" stop-color="#0041ff"/><stop offset="0.728" stop-color="#0001ff"/><stop offset="0.786" stop-color="#00c"/><stop offset="0.861" stop-color="#000002"/><stop offset="1.000" stop-color="#000"/></linearGradient><linearGradient id="b73" x1="0" y1="0" x2="0" y2="1"><stop offset="0.000" stop-color="#000"/><stop offset="0.133" stop-color="#000003"/><stop offset="0.156" stop-color="#0000c0"/><stop offset="0.159" stop-color="#0019ff"/><stop offset="0.162" stop-color="#09f"/><stop offset="0.165" stop-color="#00ffe6"/><stop offset="0.171" stop-color="#00ffe6"/><stop offset="0.173" stop-color="#00bdff"/><stop offset="0.176" stop-color="#0054ff"/><stop offset="0.179" stop-color="#0020ff"/><stop offset="0.208" stop-color="#00f"/><stop offset="0.390" stop-color="#000056"/><stop offset="0.457" stop-color="#0000ba"/><stop offset="0.480" stop-color="#0000fd"/><stop offset="0.497" stop-color="#0035ff"/><stop offset="0.538" stop-color="#00feff"/><stop offset="0.569" stop-color="#00ff7e"/><stop offset="0.572" stop-color="#00ff6f"/><stop offset="0.575" stop-color="#0f4"/><stop offset="0.578" stop-color="#0eff00"/><stop offset="0.581" stop-color="#8eff00"/><stop offset="0.584" stop-color="#ffba00"/><stop offset="0.587" stop-color="#ff3a00"/><stop offset="0.590" stop-color="#e1ff00"/><stop offset="0.592" stop-color="#3fff00"/><stop offset="0.595" stop-color="#00ff2b"/><stop offset="0.598" stop-color="#00ff65"/><stop offset="0.601" stop-color="#00ff7d"/><stop offset="0.621" stop-color="#00ffda"/><stop offset="0.624" stop-color="#00d5ff"/><stop offset="0.659" stop-color="#002cff"/><stop offset="0.708" stop-color="#0002ff"/><stop offset="0.786" stop-color="#0000be"/><stop offset="0.861" stop-color="#000002"/><stop offset="1.000" stop-color="#000"/></linearGradient><linearGradient id="b74" x1="0" y1="0" x2="0" y2="1"><stop offset="0.000" stop-color="#000"/><stop offset="0.136" stop-color="#000"/><stop offset="0.159" stop-color="#0000f4"/><stop offset="0.162" stop-color="#0037ff"/><stop offset="0.165" stop-color="#00bcff"/><stop offset="0.168" stop-color="#00ffe6"/><stop offset="0.176" stop-color="#00ffea"/><stop offset="0.179" stop-color="#00c0ff"/><stop offset="0.182" stop-color="#006bff"/><stop offset="0.266" stop-color="#00f"/><stop offset="0.387" stop-color="#000072"/><stop offset="0.460" stop-color="#0000f9"/><stop offset="0.494" stop-color="#0073ff"/><stop offset="0.526" stop-color="#0ff"/><stop offset="0.535" stop-color="#00ffe6"/><stop offset="0.543" stop-color="#00ffe6"/><stop offset="0.572" stop-color="#00ff7b"/><stop offset="0.575" stop-color="#00ff62"/><stop offset="0.578" stop-color="#00ff29"/><stop offset="0.581" stop-color="#39ff00"/><stop offset="0.584" stop-color="#cbff00"/><stop offset="0.587" stop-color="#ff6900"/><stop offset="0.590" stop-color="#ff9d00"/><stop offset="0.592" stop-color="#8cff00"/><stop offset="0.595" stop-color="#00ff02"/><stop offset="0.598" stop-color="#00ff54"/><stop offset="0.601" stop-color="#00ff79"/><stop offset="0.627" stop-color="#00fcff"/><stop offset="0.656" stop-color="#007aff"/><stop offset="0.769" stop-color="#0001ff"/><stop offset="0.777" stop-color="#0000f0"/><stop offset="0.841" stop-color="#000"/><stop offset="1.000" stop-color="#000"/></linearGradient><linearGradient id="b75" x1="0" y1="0" x2="0" y2="1"><stop offset="0.000" stop-color="#000"/><stop offset="0.139" stop-color="#000"/><stop offset="0.142" stop-color="#00000f"/><stop offset="0.165" stop-color="#0000f1"/><stop offset="0.168" stop-color="#07f"/><stop offset="0.171" stop-color="#00f0ff"/><stop offset="0.173" stop-color="#00ffe6"/><stop offset="0.179" stop-color="#00ffe7"/><stop offset="0.182" stop-color="#00c1ff"/><stop offset="0.185" stop-color="#005dff"/><stop offset="0.188" stop-color="#004dff"/><stop offset="0.254" stop-color="#00f"/><stop offset="0.393" stop-color="#000070"/><stop offset="0.465" stop-color="#0000f9"/><stop offset="0.494" stop-color="#0056ff"/><stop offset="0.532" stop-color="#00feff"/><stop offset="0.546" stop-color="#00ffe1"/><stop offset="0.575" stop-color="#00ff73"/><stop offset="0.578" stop-color="#00ff4f"/><stop offset="0.581" stop-color="#00ff07"/><stop offset="0.584" stop-color="#6bff00"/><stop offset="0.587" stop-color="#ffef00"/><stop offset="0.590" stop-color="#ff1200"/><stop offset="0.592" stop-color="#fffe00"/><stop offset="0.595" stop-color="#41ff00"/><stop offset="0.598" stop-color="#00ff34"/><stop offset="0.601" stop-color="#00ff6f"/><stop offset="0.621" stop-color="#00ffe4"/><stop offset="0.624" stop-color="#00efff"/><stop offset="0.656" stop-color="#005cff"/><stop offset="0.751" stop-color="#0001ff"/><stop offset="0.783" stop-color="#0000e1"/><stop offset="0.853" stop-color="#000002"/><stop offset="1.000" stop-color="#000"/></linearGradient><linearGradient id="b76" x1="0" y1="0" x2="0" y2="1"><stop offset="0.000" stop-color="#000"/><stop offset="0.142" stop-color="#000"/><stop offset="0.145" stop-color="#000005"/><stop offset="0.168" stop-color="#0000bf"/><stop offset="0.171" stop-color="#001dff"/><stop offset="0.173" stop-color="#009dff"/><stop offset="0.176" stop-color="#00ffe6"/><stop offset="0.182" stop-color="#00ffe6"/><stop offset="0.185" stop-color="#00b3ff"/><stop offset="0.188" stop-color="#004aff"/><stop offset="0.191" stop-color="#001aff"/><stop offset="0.214" stop-color="#0000fc"/><stop offset="0.387" stop-color="#000048"/><stop offset="0.460" stop-color="#0000b7"/><stop offset="0.483" stop-color="#0000fb"/><stop offset="0.497" stop-color="#002aff"/><stop offset="0.540" stop-color="#00f9ff"/><stop offset="0.575" stop-color="#00ff7b"/><stop offset="0.578" stop-color="#00ff62"/><stop offset="0.581" stop-color="#00ff2b"/><stop offset="0.584" stop-color="#34ff00"/><stop offset="0.587" stop-color="#c1ff00"/><stop offset="0.590" stop-color="#ff7900"/><stop offset="0.592" stop-color="#ff9800"/><stop offset="0.595" stop-color="#7fff00"/><stop offset="0.598" stop-color="#00ff14"/><stop offset="0.601" stop-color="#00ff62"/><stop offset="0.604" stop-color="#00ff7d"/><stop offset="0.621" stop-color="#00ffe0"/><stop offset="0.624" stop-color="#00caff"/><stop offset="0.656" stop-color="#002dff"/><stop offset="0.708" stop-color="#0001ff"/><stop offset="0.798" stop-color="#0000ba"/><stop offset="0.879" stop-color="#000"/><stop offset="1.000" stop-color="#000"/></linearGradient><linearGradient id="b77" x1="0" y1="0" x2="0" y2="1"><stop offset="0.000" stop-color="#000"/><stop offset="0.145" stop-color="#000"/><stop offset="0.147" stop-color="#00000a"/><stop offset="0.171" stop-color="#0000e3"/><stop offset="0.173" stop-color="#06f"/><stop offset="0.176" stop-color="#00e2ff"/><stop offset="0.179" stop-color="#00ffd8"/><stop offset="0.185" stop-color="#00ffd8"/><stop offset="0.188" stop-color="#00ceff"/><stop offset="0.191" stop-color="#006aff"/><stop offset="0.194" stop-color="#003bff"/><stop offset="0.231" stop-color="#0002ff"/><stop offset="0.379" stop-color="#000047"/><stop offset="0.460" stop-color="#0000d3"/><stop offset="0.474" stop-color="#0001ff"/><stop offset="0.497" stop-color="#004cff"/><stop offset="0.538" stop-color="#00fffd"/><stop offset="0.575" stop-color="#00ff7c"/><stop offset="0.578" stop-color="#00ff65"/><stop offset="0.581" stop-color="#00ff2f"/><stop offset="0.584" stop-color="#2fff00"/><stop offset="0.587" stop-color="#bcff00"/><stop offset="0.590" stop-color="#ff7e00"/><stop offset="0.592" stop-color="#ff9d00"/><stop offset="0.595" stop-color="#7aff00"/><stop offset="0.598" stop-color="#00ff18"/><stop offset="0.601" stop-color="#00ff64"/><stop offset="0.618" stop-color="#00ffd7"/><stop offset="0.621" stop-color="#00ecff"/><stop offset="0.656" stop-color="#004cff"/><stop offset="0.740" stop-color="#0001ff"/><stop offset="0.786" stop-color="#0000d2"/><stop offset="0.855" stop-color="#000001"/><stop offset="1.000" stop-color="#000"/></linearGradient><linearGradient id="b78" x1="0" y1="0" x2="0" y2="1"><stop offset="0.000" stop-color="#000"/><stop offset="0.147" stop-color="#000"/><stop offset="0.171" stop-color="#000097"/><stop offset="0.173" stop-color="#0000cb"/><stop offset="0.176" stop-color="#0046ff"/><stop offset="0.179" stop-color="#00deff"/><stop offset="0.182" stop-color="#00ffca"/><stop offset="0.188" stop-color="#00ffda"/><stop offset="0.191" stop-color="#008cff"/><stop offset="0.194" stop-color="#0020ff"/><stop offset="0.197" stop-color="#0000f5"/><stop offset="0.283" stop-color="#000081"/><stop offset="0.370" stop-color="#00002d"/><stop offset="0.460" stop-color="#0000a0"/><stop offset="0.494" stop-color="#00f"/><stop offset="0.514" stop-color="#005aff"/><stop offset="0.543" stop-color="#00f8ff"/><stop offset="0.549" stop-color="#00ffdc"/><stop offset="0.575" stop-color="#00ff7c"/><stop offset="0.578" stop-color="#0f6"/><stop offset="0.581" stop-color="#00ff32"/><stop offset="0.584" stop-color="#2bff00"/><stop offset="0.587" stop-color="#b8ff00"/><stop offset="0.590" stop-color="#ff8200"/><stop offset="0.592" stop-color="#ffa000"/><stop offset="0.595" stop-color="#79ff00"/><stop offset="0.598" stop-color="#00ff18"/><stop offset="0.601" stop-color="#00ff64"/><stop offset="0.618" stop-color="#00ffd9"/><stop offset="0.621" stop-color="#00b7ff"/><stop offset="0.653" stop-color="#01f"/><stop offset="0.665" stop-color="#0001ff"/><stop offset="0.786" stop-color="#0000a0"/><stop offset="0.858" stop-color="#000"/><stop offset="1.000" stop-color="#000"/></linearGradient><linearGradient id="b79" x1="0" y1="0" x2="0" y2="1"><stop offset="0.000" stop-color="#000"/><stop offset="0.150" stop-color="#000"/><stop offset="0.173" stop-color="#0000b1"/><stop offset="0.176" stop-color="#0009ff"/><stop offset="0.179" stop-color="#0089ff"/><stop offset="0.182" stop-color="#00ffdc"/><stop offset="0.185" stop-color="#00ffbc"/><stop offset="0.188" stop-color="#00ffbc"/><stop offset="0.191" stop-color="#00ffdf"/><stop offset="0.194" stop-color="#00a1ff"/><stop offset="0.197" stop-color="#0038ff"/><stop offset="0.199" stop-color="#0006ff"/><stop offset="0.202" stop-color="#0000fe"/><stop offset="0.280" stop-color="#000064"/><stop offset="0.350" stop-color="#00000a"/><stop offset="0.462" stop-color="#0000b4"/><stop offset="0.486" stop-color="#0000f9"/><stop offset="0.500" stop-color="#0029ff"/><stop offset="0.543" stop-color="#0ff"/><stop offset="0.575" stop-color="#00ff7d"/><stop offset="0.578" stop-color="#00ff69"/><stop offset="0.581" stop-color="#00ff37"/><stop offset="0.584" stop-color="#24ff00"/><stop offset="0.587" stop-color="#b1ff00"/><stop offset="0.590" stop-color="#f80"/><stop offset="0.592" stop-color="#ffa100"/><stop offset="0.595" stop-color="#7cff00"/><stop offset="0.598" stop-color="#00ff14"/><stop offset="0.601" stop-color="#00ff62"/><stop offset="0.618" stop-color="#00ffd3"/><stop offset="0.621" stop-color="#00d1ff"/><stop offset="0.656" stop-color="#0025ff"/><stop offset="0.705" stop-color="#00f"/><stop offset="0.803" stop-color="#0000b6"/><stop offset="0.887" stop-color="#000"/><stop offset="1.000" stop-color="#000"/></linearGradient><linearGradient id="b80" x1="0" y1="0" x2="0" y2="1"><stop offset="0.000" stop-color="#000"/><stop offset="0.150" stop-color="#000"/><stop offset="0.153" stop-color="#00000d"/><stop offset="0.173" stop-color="#0000d8"/><stop offset="0.176" stop-color="#001dff"/><stop offset="0.179" stop-color="#00a0ff"/><stop offset="0.182" stop-color="#00ffed"/><stop offset="0.185" stop-color="#00ffb8"/><stop offset="0.191" stop-color="#00ffba"/><stop offset="0.194" stop-color="#00f9ff"/><stop offset="0.199" stop-color="#003bff"/><stop offset="0.220" stop-color="#0000f8"/><stop offset="0.280" stop-color="#00004c"/><stop offset="0.324" stop-color="#000"/><stop offset="0.350" stop-color="#000"/><stop offset="0.474" stop-color="#0006ff"/><stop offset="0.500" stop-color="#0063ff"/><stop offset="0.535" stop-color="#00fffe"/><stop offset="0.549" stop-color="#00ffde"/><stop offset="0.575" stop-color="#00ff7e"/><stop offset="0.578" stop-color="#00ff6c"/><stop offset="0.581" stop-color="#00ff3b"/><stop offset="0.584" stop-color="#1fff00"/><stop offset="0.587" stop-color="#abff00"/><stop offset="0.590" stop-color="#ff8d00"/><stop offset="0.592" stop-color="#ffa500"/><stop offset="0.595" stop-color="#7f0"/><stop offset="0.598" stop-color="#00ff18"/><stop offset="0.601" stop-color="#00ff64"/><stop offset="0.618" stop-color="#00ffdc"/><stop offset="0.621" stop-color="#00f9ff"/><stop offset="0.656" stop-color="#0062ff"/><stop offset="0.766" stop-color="#00f"/><stop offset="0.792" stop-color="#0000e4"/><stop offset="0.867" stop-color="#000"/><stop offset="1.000" stop-color="#000"/></linearGradient><linearGradient id="b81" x1="0" y1="0" x2="0" y2="1"><stop offset="0.000" stop-color="#000"/><stop offset="0.150" stop-color="#000003"/><stop offset="0.173" stop-color="#0000ec"/><stop offset="0.176" stop-color="#0067ff"/><stop offset="0.179" stop-color="#00e2ff"/><stop offset="0.182" stop-color="#00ffc9"/><stop offset="0.188" stop-color="#00ffc9"/><stop offset="0.191" stop-color="#00fff6"/><stop offset="0.194" stop-color="#00aeff"/><stop offset="0.197" stop-color="#0047ff"/><stop offset="0.214" stop-color="#0001ff"/><stop offset="0.275" stop-color="#000046"/><stop offset="0.298" stop-color="#000014"/><stop offset="0.315" stop-color="#000"/><stop offset="0.350" stop-color="#000004"/><stop offset="0.471" stop-color="#00f"/><stop offset="0.500" stop-color="#0065ff"/><stop offset="0.535" stop-color="#00fffe"/><stop offset="0.549" stop-color="#00ffdf"/><stop offset="0.575" stop-color="#00ff7e"/><stop offset="0.578" stop-color="#00ff6e"/><stop offset="0.581" stop-color="#00ff3e"/><stop offset="0.584" stop-color="#1bff00"/><stop offset="0.587" stop-color="#a6ff00"/><stop offset="0.590" stop-color="#ff9100"/><stop offset="0.592" stop-color="#ffab00"/><stop offset="0.595" stop-color="#70ff00"/><stop offset="0.598" stop-color="#00ff1e"/><stop offset="0.601" stop-color="#00ff67"/><stop offset="0.616" stop-color="#00ffd4"/><stop offset="0.618" stop-color="#0ff"/><stop offset="0.653" stop-color="#0065ff"/><stop offset="0.751" stop-color="#00f"/><stop offset="0.772" stop-color="#0000ea"/><stop offset="0.835" stop-color="#000"/><stop offset="1.000" stop-color="#000"/></linearGradient><linearGradient id="b82" x1="0" y1="0" x2="0" y2="1"><stop offset="0.000" stop-color="#000"/><stop offset="0.147" stop-color="#000"/><stop offset="0.171" stop-color="#0000ea"/><stop offset="0.173" stop-color="#0031ff"/><stop offset="0.176" stop-color="#00b4ff"/><stop offset="0.179" stop-color="#00ffe6"/><stop offset="0.182" stop-color="#00ffda"/><stop offset="0.188" stop-color="#00ffe6"/><stop offset="0.191" stop-color="#00c7ff"/><stop offset="0.194" stop-color="#0062ff"/><stop offset="0.197" stop-color="#003bff"/><stop offset="0.214" stop-color="#0000f9"/><stop offset="0.263" stop-color="#000053"/><stop offset="0.301" stop-color="#000001"/><stop offset="0.344" stop-color="#000"/><stop offset="0.468" stop-color="#0001ff"/><stop offset="0.500" stop-color="#006dff"/><stop offset="0.532" stop-color="#00fcff"/><stop offset="0.549" stop-color="#00ffe0"/><stop offset="0.575" stop-color="#00ff7f"/><stop offset="0.578" stop-color="#00ff6f"/><stop offset="0.581" stop-color="#00ff41"/><stop offset="0.584" stop-color="#17ff00"/><stop offset="0.587" stop-color="#a2ff00"/><stop offset="0.590" stop-color="#ff9600"/><stop offset="0.592" stop-color="#ffad00"/><stop offset="0.595" stop-color="#70ff00"/><stop offset="0.598" stop-color="#00ff1d"/><stop offset="0.601" stop-color="#0f6"/><stop offset="0.616" stop-color="#00ffd4"/><stop offset="0.618" stop-color="#00fff9"/><stop offset="0.621" stop-color="#00fbff"/><stop offset="0.653" stop-color="#006eff"/><stop offset="0.763" stop-color="#00f"/><stop offset="0.777" stop-color="#0000ef"/><stop offset="0.844" stop-color="#000"/><stop offset="1.000" stop-color="#000"/></linearGradient><linearGradient id="b83" x1="0" y1="0" x2="0" y2="1"><stop offset="0.000" stop-color="#000"/><stop offset="0.145" stop-color="#000"/><stop offset="0.171" stop-color="#0000e9"/><stop offset="0.173" stop-color="#006bff"/><stop offset="0.176" stop-color="#00e8ff"/><stop offset="0.179" stop-color="#00ffec"/><stop offset="0.185" stop-color="#00feff"/><stop offset="0.191" stop-color="#0036ff"/><stop offset="0.194" stop-color="#001aff"/><stop offset="0.199" stop-color="#0004ff"/><stop offset="0.257" stop-color="#000046"/><stop offset="0.295" stop-color="#000"/><stop offset="0.341" stop-color="#000"/><stop offset="0.462" stop-color="#0000d6"/><stop offset="0.474" stop-color="#0000fb"/><stop offset="0.500" stop-color="#0051ff"/><stop offset="0.538" stop-color="#00fdff"/><stop offset="0.575" stop-color="#00ff7b"/><stop offset="0.578" stop-color="#00ff62"/><stop offset="0.581" stop-color="#00ff2a"/><stop offset="0.584" stop-color="#36ff00"/><stop offset="0.587" stop-color="#c5ff00"/><stop offset="0.590" stop-color="#ff7500"/><stop offset="0.592" stop-color="#ffdc00"/><stop offset="0.595" stop-color="#59ff00"/><stop offset="0.598" stop-color="#00ff25"/><stop offset="0.601" stop-color="#00ff68"/><stop offset="0.616" stop-color="#00ffd7"/><stop offset="0.618" stop-color="#00e9ff"/><stop offset="0.653" stop-color="#004bff"/><stop offset="0.737" stop-color="#00f"/><stop offset="0.783" stop-color="#0000d6"/><stop offset="0.853" stop-color="#000002"/><stop offset="1.000" stop-color="#000"/></linearGradient><linearGradient id="b84" x1="0" y1="0" x2="0" y2="1"><stop offset="0.000" stop-color="#000"/><stop offset="0.142" stop-color="#000"/><stop offset="0.168" stop-color="#00d"/><stop offset="0.171" stop-color="#005aff"/><stop offset="0.173" stop-color="#00dcff"/><stop offset="0.179" stop-color="#00e7ff"/><stop offset="0.182" stop-color="#00b1ff"/><stop offset="0.185" stop-color="#004aff"/><stop offset="0.188" stop-color="#0014ff"/><stop offset="0.194" stop-color="#0002ff"/><stop offset="0.260" stop-color="#00004b"/><stop offset="0.289" stop-color="#000015"/><stop offset="0.309" stop-color="#000"/><stop offset="0.332" stop-color="#000004"/><stop offset="0.457" stop-color="#0000c4"/><stop offset="0.477" stop-color="#0000fd"/><stop offset="0.497" stop-color="#0039ff"/><stop offset="0.538" stop-color="#00f8ff"/><stop offset="0.575" stop-color="#00ff73"/><stop offset="0.578" stop-color="#00ff50"/><stop offset="0.581" stop-color="#00ff10"/><stop offset="0.584" stop-color="#5f0"/><stop offset="0.587" stop-color="#e5ff00"/><stop offset="0.590" stop-color="#ff5800"/><stop offset="0.592" stop-color="#f9ff00"/><stop offset="0.595" stop-color="#43ff00"/><stop offset="0.598" stop-color="#00ff2f"/><stop offset="0.601" stop-color="#00ff6a"/><stop offset="0.607" stop-color="#00ff8e"/><stop offset="0.616" stop-color="#00ffe0"/><stop offset="0.618" stop-color="#00d5ff"/><stop offset="0.650" stop-color="#003bff"/><stop offset="0.714" stop-color="#0001ff"/><stop offset="0.780" stop-color="#0000c7"/><stop offset="0.850" stop-color="#000002"/><stop offset="1.000" stop-color="#000"/></linearGradient><linearGradient id="b85" x1="0" y1="0" x2="0" y2="1"><stop offset="0.000" stop-color="#000"/><stop offset="0.136" stop-color="#000"/><stop offset="0.139" stop-color="#000005"/><stop offset="0.165" stop-color="#0000db"/><stop offset="0.168" stop-color="#0054ff"/><stop offset="0.171" stop-color="#00bdff"/><stop offset="0.176" stop-color="#00bdff"/><stop offset="0.182" stop-color="#000cff"/><stop offset="0.185" stop-color="#0001ff"/><stop offset="0.240" stop-color="#00004f"/><stop offset="0.266" stop-color="#000015"/><stop offset="0.283" stop-color="#000"/><stop offset="0.338" stop-color="#000002"/><stop offset="0.460" stop-color="#0000bc"/><stop offset="0.480" stop-color="#0000f8"/><stop offset="0.497" stop-color="#0030ff"/><stop offset="0.538" stop-color="#00f6ff"/><stop offset="0.572" stop-color="#00ff7c"/><stop offset="0.575" stop-color="#00ff69"/><stop offset="0.578" stop-color="#00ff40"/><stop offset="0.581" stop-color="#07ff00"/><stop offset="0.584" stop-color="#70ff00"/><stop offset="0.587" stop-color="#fffd00"/><stop offset="0.590" stop-color="#ff4000"/><stop offset="0.592" stop-color="#d6ff00"/><stop offset="0.595" stop-color="#3f0"/><stop offset="0.598" stop-color="#00ff35"/><stop offset="0.601" stop-color="#00ff6b"/><stop offset="0.607" stop-color="#00ff8d"/><stop offset="0.616" stop-color="#00ffe2"/><stop offset="0.618" stop-color="#00cbff"/><stop offset="0.650" stop-color="#0030ff"/><stop offset="0.708" stop-color="#00f"/><stop offset="0.792" stop-color="#00b"/><stop offset="0.867" stop-color="#000"/><stop offset="1.000" stop-color="#000"/></linearGradient><linearGradient id="b86" x1="0" y1="0" x2="0" y2="1"><stop offset="0.000" stop-color="#000"/><stop offset="0.133" stop-color="#000"/><stop offset="0.136" stop-color="#000009"/><stop offset="0.162" stop-color="#0005ff"/><stop offset="0.165" stop-color="#0076ff"/><stop offset="0.168" stop-color="#00caff"/><stop offset="0.173" stop-color="#00caff"/><stop offset="0.176" stop-color="#006dff"/><stop offset="0.179" stop-color="#0029ff"/><stop offset="0.188" stop-color="#0000fb"/><stop offset="0.228" stop-color="#000046"/><stop offset="0.246" stop-color="#000010"/><stop offset="0.257" stop-color="#000"/><stop offset="0.347" stop-color="#000"/><stop offset="0.462" stop-color="#0000dc"/><stop offset="0.471" stop-color="#0000f9"/><stop offset="0.494" stop-color="#0056ff"/><stop offset="0.529" stop-color="#00f4ff"/><stop offset="0.566" stop-color="#00ff7c"/><stop offset="0.569" stop-color="#00ff6a"/><stop offset="0.572" stop-color="#00ff42"/><stop offset="0.575" stop-color="#01ff00"/><stop offset="0.578" stop-color="#65ff00"/><stop offset="0.581" stop-color="#ef0"/><stop offset="0.584" stop-color="#ff5d00"/><stop offset="0.587" stop-color="#e7ff00"/><stop offset="0.590" stop-color="#58ff00"/><stop offset="0.592" stop-color="#00ff0e"/><stop offset="0.595" stop-color="#00ff4f"/><stop offset="0.598" stop-color="#00ff72"/><stop offset="0.604" stop-color="#00ff89"/><stop offset="0.613" stop-color="#00ffd1"/><stop offset="0.616" stop-color="#00f7ff"/><stop offset="0.650" stop-color="#0059ff"/><stop offset="0.754" stop-color="#00f"/><stop offset="0.789" stop-color="#0000df"/><stop offset="0.864" stop-color="#000"/><stop offset="1.000" stop-color="#000"/></linearGradient><linearGradient id="b87" x1="0" y1="0" x2="0" y2="1"><stop offset="0.000" stop-color="#000"/><stop offset="0.130" stop-color="#000"/><stop offset="0.133" stop-color="#00000e"/><stop offset="0.156" stop-color="#0002ff"/><stop offset="0.159" stop-color="#001eff"/><stop offset="0.162" stop-color="#0084ff"/><stop offset="0.165" stop-color="#00c9ff"/><stop offset="0.168" stop-color="#00c9ff"/><stop offset="0.171" stop-color="#00c4ff"/><stop offset="0.173" stop-color="#005eff"/><stop offset="0.176" stop-color="#0042ff"/><stop offset="0.191" stop-color="#0000f7"/><stop offset="0.231" stop-color="#000043"/><stop offset="0.257" stop-color="#000"/><stop offset="0.344" stop-color="#000"/><stop offset="0.465" stop-color="#0000fd"/><stop offset="0.523" stop-color="#00fdff"/><stop offset="0.561" stop-color="#00ff7b"/><stop offset="0.564" stop-color="#00ff69"/><stop offset="0.566" stop-color="#00ff43"/><stop offset="0.569" stop-color="#00ff03"/><stop offset="0.572" stop-color="#5bff00"/><stop offset="0.575" stop-color="#dcff00"/><stop offset="0.578" stop-color="#ff7b00"/><stop offset="0.581" stop-color="#efff00"/><stop offset="0.584" stop-color="#71ff00"/><stop offset="0.587" stop-color="#12ff00"/><stop offset="0.592" stop-color="#00ff5d"/><stop offset="0.595" stop-color="#00ff75"/><stop offset="0.601" stop-color="#00ff86"/><stop offset="0.616" stop-color="#00fff6"/><stop offset="0.618" stop-color="#00feff"/><stop offset="0.650" stop-color="#0072ff"/><stop offset="0.780" stop-color="#00f"/><stop offset="0.795" stop-color="#0000ec"/><stop offset="0.873" stop-color="#000"/><stop offset="1.000" stop-color="#000"/></linearGradient><linearGradient id="b88" x1="0" y1="0" x2="0" y2="1"><stop offset="0.000" stop-color="#000"/><stop offset="0.127" stop-color="#000"/><stop offset="0.130" stop-color="#001"/><stop offset="0.153" stop-color="#0000f2"/><stop offset="0.156" stop-color="#000eff"/><stop offset="0.159" stop-color="#0063ff"/><stop offset="0.162" stop-color="#09f"/><stop offset="0.165" stop-color="#09f"/><stop offset="0.168" stop-color="#08f"/><stop offset="0.171" stop-color="#003bff"/><stop offset="0.185" stop-color="#0000f7"/><stop offset="0.228" stop-color="#00004a"/><stop offset="0.246" stop-color="#000017"/><stop offset="0.260" stop-color="#000"/><stop offset="0.341" stop-color="#000002"/><stop offset="0.460" stop-color="#0000df"/><stop offset="0.468" stop-color="#0001ff"/><stop offset="0.523" stop-color="#00f6ff"/><stop offset="0.526" stop-color="#00ffe3"/><stop offset="0.555" stop-color="#00ff7b"/><stop offset="0.561" stop-color="#0f4"/><stop offset="0.564" stop-color="#00ff07"/><stop offset="0.566" stop-color="#52ff00"/><stop offset="0.569" stop-color="#caff00"/><stop offset="0.572" stop-color="#ff9700"/><stop offset="0.575" stop-color="#ef0"/><stop offset="0.578" stop-color="#80ff00"/><stop offset="0.581" stop-color="#29ff00"/><stop offset="0.584" stop-color="#00ff18"/><stop offset="0.590" stop-color="#0f6"/><stop offset="0.598" stop-color="#00ff83"/><stop offset="0.613" stop-color="#00ffdc"/><stop offset="0.616" stop-color="#00f5ff"/><stop offset="0.650" stop-color="#005bff"/><stop offset="0.757" stop-color="#0001ff"/><stop offset="0.792" stop-color="#0000e2"/><stop offset="0.873" stop-color="#000"/><stop offset="1.000" stop-color="#000"/></linearGradient><linearGradient id="b89" x1="0" y1="0" x2="0" y2="1"><stop offset="0.000" stop-color="#000"/><stop offset="0.124" stop-color="#000"/><stop offset="0.150" stop-color="#0000f1"/><stop offset="0.153" stop-color="#000cff"/><stop offset="0.156" stop-color="#0053ff"/><stop offset="0.159" stop-color="#007aff"/><stop offset="0.162" stop-color="#007aff"/><stop offset="0.168" stop-color="#03f"/><stop offset="0.179" stop-color="#0000fb"/><stop offset="0.223" stop-color="#000049"/><stop offset="0.243" stop-color="#00000f"/><stop offset="0.254" stop-color="#000"/><stop offset="0.341" stop-color="#000004"/><stop offset="0.460" stop-color="#0000db"/><stop offset="0.468" stop-color="#0000fe"/><stop offset="0.520" stop-color="#00f1ff"/><stop offset="0.523" stop-color="#00ffdf"/><stop offset="0.552" stop-color="#00ff69"/><stop offset="0.555" stop-color="#00ff46"/><stop offset="0.558" stop-color="#00ff0c"/><stop offset="0.561" stop-color="#47ff00"/><stop offset="0.564" stop-color="#b8ff00"/><stop offset="0.566" stop-color="#ffb400"/><stop offset="0.569" stop-color="#e9ff00"/><stop offset="0.575" stop-color="#3bff00"/><stop offset="0.578" stop-color="#00ff03"/><stop offset="0.581" stop-color="#0f3"/><stop offset="0.587" stop-color="#00ff6c"/><stop offset="0.595" stop-color="#00ff81"/><stop offset="0.613" stop-color="#0fd"/><stop offset="0.616" stop-color="#00f1ff"/><stop offset="0.650" stop-color="#05f"/><stop offset="0.757" stop-color="#00f"/><stop offset="0.798" stop-color="#0000de"/><stop offset="0.884" stop-color="#000"/><stop offset="1.000" stop-color="#000"/></linearGradient><linearGradient id="b90" x1="0" y1="0" x2="0" y2="1"><stop offset="0.000" stop-color="#000"/><stop offset="0.121" stop-color="#000"/><stop offset="0.150" stop-color="#0000ea"/><stop offset="0.153" stop-color="#0020ff"/><stop offset="0.156" stop-color="#0036ff"/><stop offset="0.159" stop-color="#0036ff"/><stop offset="0.162" stop-color="#001bff"/><stop offset="0.168" stop-color="#0004ff"/><stop offset="0.223" stop-color="#000051"/><stop offset="0.263" stop-color="#000002"/><stop offset="0.350" stop-color="#00001a"/><stop offset="0.457" stop-color="#00b"/><stop offset="0.471" stop-color="#0000f5"/><stop offset="0.483" stop-color="#0028ff"/><stop offset="0.517" stop-color="#00d2ff"/><stop offset="0.520" stop-color="#00ffde"/><stop offset="0.546" stop-color="#00ff76"/><stop offset="0.552" stop-color="#00ff34"/><stop offset="0.555" stop-color="#0fff00"/><stop offset="0.558" stop-color="#6dff00"/><stop offset="0.561" stop-color="#e9ff00"/><stop offset="0.564" stop-color="#ffde00"/><stop offset="0.566" stop-color="#beff00"/><stop offset="0.572" stop-color="#29ff00"/><stop offset="0.575" stop-color="#00ff0e"/><stop offset="0.578" stop-color="#00ff37"/><stop offset="0.584" stop-color="#00ff6b"/><stop offset="0.595" stop-color="#00ff8b"/><stop offset="0.613" stop-color="#00ffe1"/><stop offset="0.616" stop-color="#00ceff"/><stop offset="0.647" stop-color="#0032ff"/><stop offset="0.708" stop-color="#00f"/><stop offset="0.795" stop-color="#0000bf"/><stop offset="0.882" stop-color="#000"/><stop offset="1.000" stop-color="#000"/></linearGradient><linearGradient id="b91" x1="0" y1="0" x2="0" y2="1"><stop offset="0.000" stop-color="#000"/><stop offset="0.116" stop-color="#000"/><stop offset="0.142" stop-color="#0000fa"/><stop offset="0.145" stop-color="#0016ff"/><stop offset="0.150" stop-color="#04f"/><stop offset="0.153" stop-color="#04f"/><stop offset="0.171" stop-color="#0002ff"/><stop offset="0.225" stop-color="#000058"/><stop offset="0.266" stop-color="#000005"/><stop offset="0.364" stop-color="#000039"/><stop offset="0.457" stop-color="#0000e0"/><stop offset="0.462" stop-color="#0000f7"/><stop offset="0.514" stop-color="#00f4ff"/><stop offset="0.517" stop-color="#00ffe2"/><stop offset="0.543" stop-color="#00ff76"/><stop offset="0.546" stop-color="#00ff5f"/><stop offset="0.549" stop-color="#00ff32"/><stop offset="0.552" stop-color="#14ff00"/><stop offset="0.555" stop-color="#7f0"/><stop offset="0.558" stop-color="#faff00"/><stop offset="0.561" stop-color="#fff100"/><stop offset="0.566" stop-color="#67ff00"/><stop offset="0.569" stop-color="#28ff00"/><stop offset="0.572" stop-color="#00ff0c"/><stop offset="0.581" stop-color="#00ff68"/><stop offset="0.592" stop-color="#00ff85"/><stop offset="0.610" stop-color="#00ffd9"/><stop offset="0.613" stop-color="#00fbff"/><stop offset="0.647" stop-color="#005eff"/><stop offset="0.757" stop-color="#0002ff"/><stop offset="0.792" stop-color="#0000e0"/><stop offset="0.873" stop-color="#000"/><stop offset="1.000" stop-color="#000"/></linearGradient><linearGradient id="b92" x1="0" y1="0" x2="0" y2="1"><stop offset="0.000" stop-color="#000"/><stop offset="0.110" stop-color="#000005"/><stop offset="0.142" stop-color="#0004ff"/><stop offset="0.147" stop-color="#0004ff"/><stop offset="0.220" stop-color="#000048"/><stop offset="0.266" stop-color="#000004"/><stop offset="0.364" stop-color="#00002b"/><stop offset="0.460" stop-color="#0000cd"/><stop offset="0.468" stop-color="#0000fb"/><stop offset="0.514" stop-color="#00e7ff"/><stop offset="0.517" stop-color="#00ffd9"/><stop offset="0.540" stop-color="#0f7"/><stop offset="0.543" stop-color="#00ff5f"/><stop offset="0.546" stop-color="#00ff31"/><stop offset="0.549" stop-color="#19ff00"/><stop offset="0.552" stop-color="#81ff00"/><stop offset="0.555" stop-color="#fff100"/><stop offset="0.558" stop-color="#fdff00"/><stop offset="0.564" stop-color="#62ff00"/><stop offset="0.566" stop-color="#26ff00"/><stop offset="0.569" stop-color="#00ff0a"/><stop offset="0.578" stop-color="#00ff64"/><stop offset="0.590" stop-color="#00ff80"/><stop offset="0.610" stop-color="#00ffdf"/><stop offset="0.613" stop-color="#00e2ff"/><stop offset="0.647" stop-color="#0043ff"/><stop offset="0.728" stop-color="#00f"/><stop offset="0.786" stop-color="#0000ce"/><stop offset="0.864" stop-color="#000"/><stop offset="1.000" stop-color="#000"/></linearGradient><linearGradient id="b93" x1="0" y1="0" x2="0" y2="1"><stop offset="0.000" stop-color="#000"/><stop offset="0.101" stop-color="#000"/><stop offset="0.136" stop-color="#0000c3"/><stop offset="0.220" stop-color="#00004b"/><stop offset="0.280" stop-color="#001"/><stop offset="0.399" stop-color="#00005e"/><stop offset="0.457" stop-color="#0000b4"/><stop offset="0.471" stop-color="#00f"/><stop offset="0.474" stop-color="#01f"/><stop offset="0.512" stop-color="#00cfff"/><stop offset="0.514" stop-color="#00ffda"/><stop offset="0.538" stop-color="#0f7"/><stop offset="0.540" stop-color="#00ff5e"/><stop offset="0.543" stop-color="#00ff2d"/><stop offset="0.546" stop-color="#20ff00"/><stop offset="0.549" stop-color="#8eff00"/><stop offset="0.552" stop-color="#ffdc00"/><stop offset="0.555" stop-color="#edff00"/><stop offset="0.561" stop-color="#5dff00"/><stop offset="0.566" stop-color="#00ff0a"/><stop offset="0.575" stop-color="#00ff62"/><stop offset="0.590" stop-color="#00ff89"/><stop offset="0.607" stop-color="#00ffdb"/><stop offset="0.610" stop-color="#00ceff"/><stop offset="0.645" stop-color="#0025ff"/><stop offset="0.688" stop-color="#00f"/><stop offset="0.775" stop-color="#0000b7"/><stop offset="0.847" stop-color="#000"/><stop offset="1.000" stop-color="#000"/></linearGradient><linearGradient id="b94" x1="0" y1="0" x2="0" y2="1"><stop offset="0.000" stop-color="#000"/><stop offset="0.095" stop-color="#000"/><stop offset="0.127" stop-color="#0000b7"/><stop offset="0.130" stop-color="#0000b9"/><stop offset="0.223" stop-color="#000052"/><stop offset="0.286" stop-color="#00001d"/><stop offset="0.387" stop-color="#000083"/><stop offset="0.408" stop-color="#000084"/><stop offset="0.457" stop-color="#0000d7"/><stop offset="0.465" stop-color="#000dff"/><stop offset="0.477" stop-color="#0059ff"/><stop offset="0.509" stop-color="#00edff"/><stop offset="0.512" stop-color="#0fd"/><stop offset="0.535" stop-color="#0f7"/><stop offset="0.538" stop-color="#00ff5d"/><stop offset="0.540" stop-color="#00ff2a"/><stop offset="0.543" stop-color="#27ff00"/><stop offset="0.546" stop-color="#9cff00"/><stop offset="0.549" stop-color="#ffcb00"/><stop offset="0.552" stop-color="#e0ff00"/><stop offset="0.558" stop-color="#58ff00"/><stop offset="0.564" stop-color="#00ff09"/><stop offset="0.572" stop-color="#00ff5f"/><stop offset="0.578" stop-color="#00ff78"/><stop offset="0.587" stop-color="#00ff84"/><stop offset="0.607" stop-color="#00ffe2"/><stop offset="0.610" stop-color="#00e8ff"/><stop offset="0.642" stop-color="#0054ff"/><stop offset="0.728" stop-color="#00f"/><stop offset="0.769" stop-color="#0000d9"/><stop offset="0.835" stop-color="#000"/><stop offset="1.000" stop-color="#000"/></linearGradient><linearGradient id="b95" x1="0" y1="0" x2="0" y2="1"><stop offset="0.000" stop-color="#000"/><stop offset="0.090" stop-color="#000"/><stop offset="0.124" stop-color="#000063"/><stop offset="0.283" stop-color="#00000d"/><stop offset="0.379" stop-color="#000039"/><stop offset="0.460" stop-color="#0000ab"/><stop offset="0.471" stop-color="#0001ff"/><stop offset="0.506" stop-color="#00b7ff"/><stop offset="0.509" stop-color="#00ffe5"/><stop offset="0.532" stop-color="#00ff7b"/><stop offset="0.535" stop-color="#00ff67"/><stop offset="0.538" stop-color="#00ff3b"/><stop offset="0.540" stop-color="#0fff00"/><stop offset="0.543" stop-color="#7dff00"/><stop offset="0.546" stop-color="#ffea00"/><stop offset="0.549" stop-color="#eaff00"/><stop offset="0.555" stop-color="#65ff00"/><stop offset="0.561" stop-color="#04ff00"/><stop offset="0.566" stop-color="#00ff3f"/><stop offset="0.572" stop-color="#00ff67"/><stop offset="0.587" stop-color="#00ff87"/><stop offset="0.607" stop-color="#0fd"/><stop offset="0.610" stop-color="#00c3ff"/><stop offset="0.645" stop-color="#0017ff"/><stop offset="0.673" stop-color="#00f"/><stop offset="0.780" stop-color="#0000ad"/><stop offset="0.855" stop-color="#000002"/><stop offset="1.000" stop-color="#000"/></linearGradient><linearGradient id="b96" x1="0" y1="0" x2="0" y2="1"><stop offset="0.000" stop-color="#000"/><stop offset="0.087" stop-color="#000"/><stop offset="0.121" stop-color="#000037"/><stop offset="0.280" stop-color="#00000e"/><stop offset="0.396" stop-color="#000052"/><stop offset="0.457" stop-color="#0000a7"/><stop offset="0.460" stop-color="#0000ad"/><stop offset="0.471" stop-color="#0006ff"/><stop offset="0.506" stop-color="#0bf"/><stop offset="0.509" stop-color="#00ffe1"/><stop offset="0.532" stop-color="#00ff79"/><stop offset="0.535" stop-color="#00ff61"/><stop offset="0.538" stop-color="#00ff32"/><stop offset="0.540" stop-color="#1bff00"/><stop offset="0.543" stop-color="#8cff00"/><stop offset="0.546" stop-color="#ffdb00"/><stop offset="0.549" stop-color="#d6ff00"/><stop offset="0.555" stop-color="#58ff00"/><stop offset="0.561" stop-color="#00ff05"/><stop offset="0.566" stop-color="#0f4"/><stop offset="0.572" stop-color="#00ff6a"/><stop offset="0.587" stop-color="#0f8"/><stop offset="0.607" stop-color="#00ffda"/><stop offset="0.610" stop-color="#00c5ff"/><stop offset="0.645" stop-color="#0015ff"/><stop offset="0.671" stop-color="#0001ff"/><stop offset="0.789" stop-color="#0000ab"/><stop offset="0.873" stop-color="#000"/><stop offset="1.000" stop-color="#000"/></linearGradient><linearGradient id="b97" x1="0" y1="0" x2="0" y2="1"><stop offset="0.000" stop-color="#000"/><stop offset="0.087" stop-color="#000"/><stop offset="0.118" stop-color="#00000e"/><stop offset="0.263" stop-color="#000005"/><stop offset="0.387" stop-color="#00007c"/><stop offset="0.419" stop-color="#00007c"/><stop offset="0.457" stop-color="#0000b1"/><stop offset="0.468" stop-color="#0003ff"/><stop offset="0.506" stop-color="#00c8ff"/><stop offset="0.509" stop-color="#00ffdb"/><stop offset="0.532" stop-color="#00ff75"/><stop offset="0.535" stop-color="#00ff5b"/><stop offset="0.538" stop-color="#00ff28"/><stop offset="0.540" stop-color="#28ff00"/><stop offset="0.546" stop-color="#fff200"/><stop offset="0.555" stop-color="#47ff00"/><stop offset="0.558" stop-color="#17ff00"/><stop offset="0.561" stop-color="#0f1"/><stop offset="0.566" stop-color="#00ff4c"/><stop offset="0.572" stop-color="#00ff6e"/><stop offset="0.584" stop-color="#00ff81"/><stop offset="0.607" stop-color="#00ffe5"/><stop offset="0.610" stop-color="#00bdff"/><stop offset="0.642" stop-color="#001eff"/><stop offset="0.679" stop-color="#00f"/><stop offset="0.777" stop-color="#0000af"/><stop offset="0.850" stop-color="#000"/><stop offset="1.000" stop-color="#000"/></linearGradient><linearGradient id="b98" x1="0" y1="0" x2="0" y2="1"><stop offset="0.000" stop-color="#000"/><stop offset="0.257" stop-color="#000"/><stop offset="0.387" stop-color="#00008f"/><stop offset="0.419" stop-color="#000090"/><stop offset="0.457" stop-color="#00c"/><stop offset="0.462" stop-color="#0000f7"/><stop offset="0.465" stop-color="#0010ff"/><stop offset="0.471" stop-color="#003fff"/><stop offset="0.506" stop-color="#00e5ff"/><stop offset="0.509" stop-color="#00ffd8"/><stop offset="0.532" stop-color="#00ff72"/><stop offset="0.535" stop-color="#00ff54"/><stop offset="0.538" stop-color="#00ff1f"/><stop offset="0.540" stop-color="#34ff00"/><stop offset="0.543" stop-color="#a7ff00"/><stop offset="0.546" stop-color="#f6ff00"/><stop offset="0.555" stop-color="#3aff00"/><stop offset="0.558" stop-color="#0dff00"/><stop offset="0.561" stop-color="#00ff19"/><stop offset="0.566" stop-color="#00ff51"/><stop offset="0.572" stop-color="#00ff70"/><stop offset="0.584" stop-color="#00ff83"/><stop offset="0.607" stop-color="#00ffe5"/><stop offset="0.610" stop-color="#00d9ff"/><stop offset="0.642" stop-color="#0041ff"/><stop offset="0.720" stop-color="#00f"/><stop offset="0.780" stop-color="#0000cd"/><stop offset="0.855" stop-color="#000"/><stop offset="1.000" stop-color="#000"/></linearGradient><linearGradient id="b99" x1="0" y1="0" x2="0" y2="1"><stop offset="0.000" stop-color="#000"/><stop offset="0.257" stop-color="#000"/><stop offset="0.387" stop-color="#000081"/><stop offset="0.416" stop-color="#000082"/><stop offset="0.457" stop-color="#0000c0"/><stop offset="0.465" stop-color="#0004ff"/><stop offset="0.471" stop-color="#03f"/><stop offset="0.503" stop-color="#00ceff"/><stop offset="0.506" stop-color="#00ffe4"/><stop offset="0.532" stop-color="#00ff6e"/><stop offset="0.535" stop-color="#00ff4e"/><stop offset="0.538" stop-color="#00ff15"/><stop offset="0.540" stop-color="#3fff00"/><stop offset="0.543" stop-color="#b3ff00"/><stop offset="0.546" stop-color="#e1ff00"/><stop offset="0.552" stop-color="#61ff00"/><stop offset="0.558" stop-color="#02ff00"/><stop offset="0.564" stop-color="#00ff3f"/><stop offset="0.569" stop-color="#0f6"/><stop offset="0.584" stop-color="#00ff85"/><stop offset="0.604" stop-color="#00ffda"/><stop offset="0.607" stop-color="#00daff"/><stop offset="0.642" stop-color="#0032ff"/><stop offset="0.702" stop-color="#0001ff"/><stop offset="0.783" stop-color="#0000c1"/><stop offset="0.861" stop-color="#000"/><stop offset="1.000" stop-color="#000"/></linearGradient><linearGradient id="b100" x1="0" y1="0" x2="0" y2="1"><stop offset="0.000" stop-color="#000"/><stop offset="0.257" stop-color="#000"/><stop offset="0.399" stop-color="#000073"/><stop offset="0.460" stop-color="#0000db"/><stop offset="0.465" stop-color="#00f"/><stop offset="0.468" stop-color="#001bff"/><stop offset="0.477" stop-color="#0061ff"/><stop offset="0.509" stop-color="#00f4ff"/><stop offset="0.512" stop-color="#00ffda"/><stop offset="0.532" stop-color="#00ff68"/><stop offset="0.538" stop-color="#00ff10"/><stop offset="0.540" stop-color="#2fff00"/><stop offset="0.546" stop-color="#cf0"/><stop offset="0.558" stop-color="#2dff00"/><stop offset="0.561" stop-color="#0cff00"/><stop offset="0.564" stop-color="#00ff12"/><stop offset="0.575" stop-color="#00ff6a"/><stop offset="0.604" stop-color="#00ffe3"/><stop offset="0.607" stop-color="#00edff"/><stop offset="0.639" stop-color="#005aff"/><stop offset="0.749" stop-color="#0001ff"/><stop offset="0.792" stop-color="#0000da"/><stop offset="0.870" stop-color="#000"/><stop offset="1.000" stop-color="#000"/></linearGradient><linearGradient id="b101" x1="0" y1="0" x2="0" y2="1"><stop offset="0.000" stop-color="#000"/><stop offset="0.257" stop-color="#000"/><stop offset="0.396" stop-color="#000051"/><stop offset="0.465" stop-color="#0000b0"/><stop offset="0.477" stop-color="#00f"/><stop offset="0.514" stop-color="#00c8ff"/><stop offset="0.517" stop-color="#00ffd9"/><stop offset="0.535" stop-color="#00ff6c"/><stop offset="0.540" stop-color="#00ff24"/><stop offset="0.543" stop-color="#10ff00"/><stop offset="0.549" stop-color="#76ff00"/><stop offset="0.561" stop-color="#00ff08"/><stop offset="0.572" stop-color="#00ff5e"/><stop offset="0.584" stop-color="#00ff87"/><stop offset="0.598" stop-color="#00ffd8"/><stop offset="0.601" stop-color="#00caff"/><stop offset="0.636" stop-color="#001eff"/><stop offset="0.676" stop-color="#0002ff"/><stop offset="0.792" stop-color="#0000b3"/><stop offset="0.873" stop-color="#000"/><stop offset="1.000" stop-color="#000"/></linearGradient><linearGradient id="b102" x1="0" y1="0" x2="0" y2="1"><stop offset="0.000" stop-color="#000"/><stop offset="0.257" stop-color="#000"/><stop offset="0.387" stop-color="#000094"/><stop offset="0.416" stop-color="#000094"/><stop offset="0.465" stop-color="#0000e7"/><stop offset="0.471" stop-color="#0006ff"/><stop offset="0.486" stop-color="#006cff"/><stop offset="0.517" stop-color="#00fcff"/><stop offset="0.520" stop-color="#0fd"/><stop offset="0.538" stop-color="#00ff6f"/><stop offset="0.546" stop-color="#00ff0a"/><stop offset="0.549" stop-color="#28ff00"/><stop offset="0.552" stop-color="#42ff00"/><stop offset="0.558" stop-color="#06ff00"/><stop offset="0.569" stop-color="#00ff54"/><stop offset="0.584" stop-color="#00ff8c"/><stop offset="0.598" stop-color="#00ffe0"/><stop offset="0.601" stop-color="#00faff"/><stop offset="0.636" stop-color="#0065ff"/><stop offset="0.766" stop-color="#0002ff"/><stop offset="0.795" stop-color="#0000ea"/><stop offset="0.870" stop-color="#000"/><stop offset="1.000" stop-color="#000"/></linearGradient><linearGradient id="b103" x1="0" y1="0" x2="0" y2="1"><stop offset="0.000" stop-color="#000"/><stop offset="0.257" stop-color="#000"/><stop offset="0.387" stop-color="#00008f"/><stop offset="0.419" stop-color="#00008f"/><stop offset="0.468" stop-color="#0000e0"/><stop offset="0.474" stop-color="#0004ff"/><stop offset="0.488" stop-color="#0060ff"/><stop offset="0.520" stop-color="#00f2ff"/><stop offset="0.523" stop-color="#0fd"/><stop offset="0.543" stop-color="#00ff5e"/><stop offset="0.552" stop-color="#08ff00"/><stop offset="0.555" stop-color="#1cff00"/><stop offset="0.558" stop-color="#00ff01"/><stop offset="0.569" stop-color="#00ff5c"/><stop offset="0.581" stop-color="#00ff85"/><stop offset="0.595" stop-color="#00ffd8"/><stop offset="0.598" stop-color="#00f7ff"/><stop offset="0.633" stop-color="#005aff"/><stop offset="0.743" stop-color="#0002ff"/><stop offset="0.783" stop-color="#0000dc"/><stop offset="0.844" stop-color="#000002"/><stop offset="1.000" stop-color="#000"/></linearGradient><linearGradient id="b104" x1="0" y1="0" x2="0" y2="1"><stop offset="0.000" stop-color="#000"/><stop offset="0.257" stop-color="#000"/><stop offset="0.399" stop-color="#00005c"/><stop offset="0.471" stop-color="#0000d2"/><stop offset="0.480" stop-color="#0006ff"/><stop offset="0.491" stop-color="#004eff"/><stop offset="0.523" stop-color="#00e4ff"/><stop offset="0.526" stop-color="#00ffde"/><stop offset="0.546" stop-color="#00ff67"/><stop offset="0.555" stop-color="#0f1"/><stop offset="0.558" stop-color="#0eff00"/><stop offset="0.561" stop-color="#00ff10"/><stop offset="0.572" stop-color="#00ff68"/><stop offset="0.581" stop-color="#00ff85"/><stop offset="0.598" stop-color="#00ffe4"/><stop offset="0.601" stop-color="#00e1ff"/><stop offset="0.633" stop-color="#004bff"/><stop offset="0.728" stop-color="#00f"/><stop offset="0.786" stop-color="#0000d3"/><stop offset="0.847" stop-color="#000002"/><stop offset="1.000" stop-color="#000"/></linearGradient><linearGradient id="b105" x1="0" y1="0" x2="0" y2="1"><stop offset="0.000" stop-color="#000"/><stop offset="0.257" stop-color="#000"/><stop offset="0.379" stop-color="#000035"/><stop offset="0.474" stop-color="#0000d9"/><stop offset="0.483" stop-color="#000eff"/><stop offset="0.494" stop-color="#0057ff"/><stop offset="0.526" stop-color="#00ebff"/><stop offset="0.529" stop-color="#00ffe0"/><stop offset="0.552" stop-color="#00ff5c"/><stop offset="0.561" stop-color="#00ff01"/><stop offset="0.572" stop-color="#00ff5f"/><stop offset="0.598" stop-color="#00ffdc"/><stop offset="0.601" stop-color="#00efff"/><stop offset="0.636" stop-color="#0051ff"/><stop offset="0.746" stop-color="#0001ff"/><stop offset="0.798" stop-color="#0000d7"/><stop offset="0.861" stop-color="#000"/><stop offset="1.000" stop-color="#000"/></linearGradient><linearGradient id="b106" x1="0" y1="0" x2="0" y2="1"><stop offset="0.000" stop-color="#000"/><stop offset="0.257" stop-color="#000"/><stop offset="0.390" stop-color="#00004b"/><stop offset="0.474" stop-color="#0000e2"/><stop offset="0.480" stop-color="#0000fe"/><stop offset="0.483" stop-color="#01f"/><stop offset="0.497" stop-color="#0067ff"/><stop offset="0.529" stop-color="#00f7ff"/><stop offset="0.532" stop-color="#00ffde"/><stop offset="0.555" stop-color="#0f6"/><stop offset="0.564" stop-color="#00ff17"/><stop offset="0.566" stop-color="#00ff17"/><stop offset="0.575" stop-color="#00ff68"/><stop offset="0.601" stop-color="#00ffe5"/><stop offset="0.604" stop-color="#00f2ff"/><stop offset="0.636" stop-color="#0061ff"/><stop offset="0.769" stop-color="#00f"/><stop offset="0.803" stop-color="#0000e5"/><stop offset="0.867" stop-color="#000002"/><stop offset="1.000" stop-color="#000"/></linearGradient><linearGradient id="b107" x1="0" y1="0" x2="0" y2="1"><stop offset="0.000" stop-color="#000"/><stop offset="0.257" stop-color="#000"/><stop offset="0.387" stop-color="#000061"/><stop offset="0.410" stop-color="#000064"/><stop offset="0.474" stop-color="#0000c8"/><stop offset="0.486" stop-color="#0000fd"/><stop offset="0.488" stop-color="#000dff"/><stop offset="0.532" stop-color="#00dfff"/><stop offset="0.535" stop-color="#00ffdc"/><stop offset="0.558" stop-color="#00ff6e"/><stop offset="0.569" stop-color="#00ff19"/><stop offset="0.578" stop-color="#00ff71"/><stop offset="0.601" stop-color="#00ffe5"/><stop offset="0.604" stop-color="#00d7ff"/><stop offset="0.636" stop-color="#003fff"/><stop offset="0.723" stop-color="#0001ff"/><stop offset="0.798" stop-color="#0000cb"/><stop offset="0.858" stop-color="#000"/><stop offset="1.000" stop-color="#000"/></linearGradient><linearGradient id="b108" x1="0" y1="0" x2="0" y2="1"><stop offset="0.000" stop-color="#000"/><stop offset="0.257" stop-color="#000"/><stop offset="0.387" stop-color="#00006b"/><stop offset="0.422" stop-color="#00006d"/><stop offset="0.474" stop-color="#0000b9"/><stop offset="0.491" stop-color="#0003ff"/><stop offset="0.532" stop-color="#00c7ff"/><stop offset="0.535" stop-color="#00ffe5"/><stop offset="0.561" stop-color="#00ff6e"/><stop offset="0.569" stop-color="#00ff2c"/><stop offset="0.572" stop-color="#00ff29"/><stop offset="0.578" stop-color="#00ff6b"/><stop offset="0.601" stop-color="#00ffe2"/><stop offset="0.604" stop-color="#00caff"/><stop offset="0.636" stop-color="#002eff"/><stop offset="0.697" stop-color="#00f"/><stop offset="0.795" stop-color="#0000b9"/><stop offset="0.847" stop-color="#000001"/><stop offset="1.000" stop-color="#000"/></linearGradient><linearGradient id="b109" x1="0" y1="0" x2="0" y2="1"><stop offset="0.000" stop-color="#000"/><stop offset="0.257" stop-color="#000"/><stop offset="0.387" stop-color="#00006b"/><stop offset="0.410" stop-color="#00006c"/><stop offset="0.474" stop-color="#0000d9"/><stop offset="0.486" stop-color="#000bff"/><stop offset="0.535" stop-color="#00f1ff"/><stop offset="0.538" stop-color="#00ffdb"/><stop offset="0.561" stop-color="#00ff6d"/><stop offset="0.569" stop-color="#00ff27"/><stop offset="0.572" stop-color="#00ff30"/><stop offset="0.581" stop-color="#00ff7c"/><stop offset="0.604" stop-color="#00ffe2"/><stop offset="0.607" stop-color="#00ecff"/><stop offset="0.642" stop-color="#0054ff"/><stop offset="0.763" stop-color="#00f"/><stop offset="0.812" stop-color="#00d"/><stop offset="0.876" stop-color="#000"/><stop offset="1.000" stop-color="#000"/></linearGradient><linearGradient id="b110" x1="0" y1="0" x2="0" y2="1"><stop offset="0.000" stop-color="#000"/><stop offset="0.257" stop-color="#000"/><stop offset="0.387" stop-color="#00006d"/><stop offset="0.419" stop-color="#00006e"/><stop offset="0.474" stop-color="#0000c1"/><stop offset="0.491" stop-color="#0009ff"/><stop offset="0.535" stop-color="#00d6ff"/><stop offset="0.538" stop-color="#00ffdf"/><stop offset="0.561" stop-color="#00ff6c"/><stop offset="0.569" stop-color="#0f2"/><stop offset="0.578" stop-color="#00ff6d"/><stop offset="0.604" stop-color="#00ffda"/><stop offset="0.607" stop-color="#0df"/><stop offset="0.642" stop-color="#0036ff"/><stop offset="0.717" stop-color="#0005ff"/><stop offset="0.815" stop-color="#0000c5"/><stop offset="0.882" stop-color="#000"/><stop offset="1.000" stop-color="#000"/></linearGradient><linearGradient id="b111" x1="0" y1="0" x2="0" y2="1"><stop offset="0.000" stop-color="#000"/><stop offset="0.257" stop-color="#000"/><stop offset="0.387" stop-color="#000063"/><stop offset="0.410" stop-color="#006"/><stop offset="0.477" stop-color="#0000d4"/><stop offset="0.488" stop-color="#0009ff"/><stop offset="0.535" stop-color="#00e0ff"/><stop offset="0.538" stop-color="#00ffe4"/><stop offset="0.561" stop-color="#00ff6a"/><stop offset="0.569" stop-color="#00ff1c"/><stop offset="0.578" stop-color="#00ff6f"/><stop offset="0.607" stop-color="#00ffe5"/><stop offset="0.610" stop-color="#00dfff"/><stop offset="0.642" stop-color="#0048ff"/><stop offset="0.740" stop-color="#0001ff"/><stop offset="0.803" stop-color="#0000d2"/><stop offset="0.858" stop-color="#000001"/><stop offset="1.000" stop-color="#000"/></linearGradient><linearGradient id="b112" x1="0" y1="0" x2="0" y2="1"><stop offset="0.000" stop-color="#000"/><stop offset="0.257" stop-color="#000"/><stop offset="0.390" stop-color="#000042"/><stop offset="0.477" stop-color="#0000d7"/><stop offset="0.488" stop-color="#000bff"/><stop offset="0.538" stop-color="#00f1ff"/><stop offset="0.540" stop-color="#00ffd6"/><stop offset="0.561" stop-color="#00ff68"/><stop offset="0.569" stop-color="#00ff1d"/><stop offset="0.578" stop-color="#00ff71"/><stop offset="0.604" stop-color="#00ffde"/><stop offset="0.607" stop-color="#00edff"/><stop offset="0.642" stop-color="#0050ff"/><stop offset="0.740" stop-color="#00f"/><stop offset="0.786" stop-color="#0000d8"/><stop offset="0.832" stop-color="#000"/><stop offset="1.000" stop-color="#000"/></linearGradient><linearGradient id="b113" x1="0" y1="0" x2="0" y2="1"><stop offset="0.000" stop-color="#000"/><stop offset="0.257" stop-color="#000"/><stop offset="0.387" stop-color="#000069"/><stop offset="0.408" stop-color="#00006b"/><stop offset="0.477" stop-color="#0000e7"/><stop offset="0.483" stop-color="#0003ff"/><stop offset="0.535" stop-color="#00f3ff"/><stop offset="0.538" stop-color="#00ffea"/><stop offset="0.552" stop-color="#00ff8a"/><stop offset="0.561" stop-color="#00ff64"/><stop offset="0.569" stop-color="#00ff21"/><stop offset="0.578" stop-color="#00ff71"/><stop offset="0.607" stop-color="#00ffe5"/><stop offset="0.610" stop-color="#00f3ff"/><stop offset="0.642" stop-color="#0062ff"/><stop offset="0.766" stop-color="#0002ff"/><stop offset="0.801" stop-color="#0000e1"/><stop offset="0.853" stop-color="#000"/><stop offset="1.000" stop-color="#000"/></linearGradient><linearGradient id="b114" x1="0" y1="0" x2="0" y2="1"><stop offset="0.000" stop-color="#000"/><stop offset="0.257" stop-color="#000"/><stop offset="0.399" stop-color="#000050"/><stop offset="0.477" stop-color="#0000d0"/><stop offset="0.488" stop-color="#0004ff"/><stop offset="0.538" stop-color="#00e9ff"/><stop offset="0.540" stop-color="#00ffd3"/><stop offset="0.569" stop-color="#00ff26"/><stop offset="0.578" stop-color="#00ff71"/><stop offset="0.607" stop-color="#00ffe1"/><stop offset="0.610" stop-color="#00e2ff"/><stop offset="0.645" stop-color="#0045ff"/><stop offset="0.743" stop-color="#0001ff"/><stop offset="0.809" stop-color="#0000d2"/><stop offset="0.870" stop-color="#000"/><stop offset="1.000" stop-color="#000"/></linearGradient><linearGradient id="b115" x1="0" y1="0" x2="0" y2="1"><stop offset="0.000" stop-color="#000"/><stop offset="0.257" stop-color="#000"/><stop offset="0.387" stop-color="#00007b"/><stop offset="0.419" stop-color="#00007b"/><stop offset="0.474" stop-color="#0000d6"/><stop offset="0.486" stop-color="#0005ff"/><stop offset="0.535" stop-color="#00e5ff"/><stop offset="0.538" stop-color="#00ffe4"/><stop offset="0.552" stop-color="#00ff81"/><stop offset="0.561" stop-color="#00ff5c"/><stop offset="0.566" stop-color="#00ff2a"/><stop offset="0.569" stop-color="#00ff29"/><stop offset="0.578" stop-color="#00ff72"/><stop offset="0.607" stop-color="#00ffe5"/><stop offset="0.610" stop-color="#00e5ff"/><stop offset="0.642" stop-color="#0050ff"/><stop offset="0.746" stop-color="#0002ff"/><stop offset="0.798" stop-color="#0000d9"/><stop offset="0.853" stop-color="#000"/><stop offset="1.000" stop-color="#000"/></linearGradient>
</defs>
<rect x="2" y="18" width="1153" height="628" fill="#fff"/><path d="M2.5 645V18.500H1154" stroke="#a0a0a0" fill="none"/><rect x="3" y="19" width="1151" height="625.7" fill="#000"/>
<rect x="578" y="19" width="2" height="626" fill="#fff"/>
<rect x="3" y="419" width="1151" height="3" fill="#fff"/>
<clipPath id="cl0"><rect x="62" y="46" width="427.5" height="346"/></clipPath><g clip-path="url(#cl0)"><g filter="url(#hb)"><rect x="151.5" y="46.0" width="3.6" height="346.0" fill="url(#a3)"/><rect x="154.5" y="46.0" width="3.6" height="346.0" fill="url(#a4)"/><rect x="157.5" y="46.0" width="3.6" height="346.0" fill="url(#a5)"/><rect x="160.5" y="46.0" width="3.6" height="346.0" fill="url(#a6)"/><rect x="163.5" y="46.0" width="3.6" height="346.0" fill="url(#a7)"/><rect x="166.5" y="46.0" width="3.6" height="346.0" fill="url(#a8)"/><rect x="169.5" y="46.0" width="3.6" height="346.0" fill="url(#a9)"/><rect x="172.5" y="46.0" width="3.6" height="346.0" fill="url(#a10)"/><rect x="175.5" y="46.0" width="3.6" height="346.0" fill="url(#a11)"/><rect x="178.5" y="46.0" width="3.6" height="346.0" fill="url(#a12)"/><rect x="181.5" y="46.0" width="3.6" height="346.0" fill="url(#a13)"/><rect x="184.5" y="46.0" width="3.6" height="346.0" fill="url(#a14)"/><rect x="187.5" y="46.0" width="3.6" height="346.0" fill="url(#a15)"/><rect x="190.5" y="46.0" width="3.6" height="346.0" fill="url(#a16)"/><rect x="193.5" y="46.0" width="3.6" height="346.0" fill="url(#a17)"/><rect x="196.5" y="46.0" width="3.6" height="346.0" fill="url(#a18)"/><rect x="199.5" y="46.0" width="3.6" height="346.0" fill="url(#a19)"/><rect x="202.5" y="46.0" width="3.6" height="346.0" fill="url(#a20)"/><rect x="205.5" y="46.0" width="3.6" height="346.0" fill="url(#a21)"/><rect x="208.5" y="46.0" width="3.6" height="346.0" fill="url(#a22)"/><rect x="211.5" y="46.0" width="3.6" height="346.0" fill="url(#a23)"/><rect x="214.5" y="46.0" width="3.6" height="346.0" fill="url(#a24)"/><rect x="217.5" y="46.0" width="3.6" height="346.0" fill="url(#a25)"/><rect x="220.5" y="46.0" width="3.6" height="346.0" fill="url(#a26)"/><rect x="223.5" y="46.0" width="3.6" height="346.0" fill="url(#a27)"/><rect x="226.5" y="46.0" width="3.6" height="346.0" fill="url(#a28)"/><rect x="229.5" y="46.0" width="3.6" height="346.0" fill="url(#a29)"/><rect x="232.5" y="46.0" width="3.6" height="346.0" fill="url(#a30)"/><rect x="235.5" y="46.0" width="3.6" height="346.0" fill="url(#a31)"/><rect x="238.5" y="46.0" width="3.6" height="346.0" fill="url(#a32)"/><rect x="241.5" y="46.0" width="3.6" height="346.0" fill="url(#a33)"/><rect x="244.5" y="46.0" width="3.6" height="346.0" fill="url(#a34)"/><rect x="247.5" y="46.0" width="3.6" height="346.0" fill="url(#a35)"/><rect x="250.5" y="46.0" width="3.6" height="346.0" fill="url(#a36)"/><rect x="253.5" y="46.0" width="3.6" height="346.0" fill="url(#a37)"/><rect x="256.5" y="46.0" width="3.6" height="346.0" fill="url(#a38)"/><rect x="259.5" y="46.0" width="3.6" height="346.0" fill="url(#a39)"/><rect x="262.5" y="46.0" width="3.6" height="346.0" fill="url(#a40)"/><rect x="265.5" y="46.0" width="3.6" height="346.0" fill="url(#a41)"/><rect x="268.5" y="46.0" width="3.6" height="346.0" fill="url(#a42)"/><rect x="271.5" y="46.0" width="3.6" height="346.0" fill="url(#a43)"/><rect x="274.5" y="46.0" width="3.6" height="346.0" fill="url(#a44)"/><rect x="277.5" y="46.0" width="3.6" height="346.0" fill="url(#a45)"/><rect x="280.5" y="46.0" width="3.6" height="346.0" fill="url(#a46)"/><rect x="283.5" y="46.0" width="3.6" height="346.0" fill="url(#a47)"/><rect x="286.5" y="46.0" width="3.6" height="346.0" fill="url(#a48)"/><rect x="289.5" y="46.0" width="3.6" height="346.0" fill="url(#a49)"/><rect x="292.5" y="46.0" width="3.6" height="346.0" fill="url(#a50)"/><rect x="295.5" y="46.0" width="3.6" height="346.0" fill="url(#a51)"/><rect x="298.5" y="46.0" width="3.6" height="346.0" fill="url(#a52)"/><rect x="301.5" y="46.0" width="3.6" height="346.0" fill="url(#a53)"/><rect x="304.5" y="46.0" width="3.6" height="346.0" fill="url(#a54)"/><rect x="307.5" y="46.0" width="3.6" height="346.0" fill="url(#a55)"/><rect x="310.5" y="46.0" width="3.6" height="346.0" fill="url(#a56)"/><rect x="313.5" y="46.0" width="3.6" height="346.0" fill="url(#a57)"/><rect x="316.5" y="46.0" width="3.6" height="346.0" fill="url(#a58)"/><rect x="319.5" y="46.0" width="3.6" height="346.0" fill="url(#a59)"/><rect x="322.5" y="46.0" width="3.6" height="346.0" fill="url(#a60)"/><rect x="325.5" y="46.0" width="3.6" height="346.0" fill="url(#a61)"/><rect x="328.5" y="46.0" width="3.6" height="346.0" fill="url(#a62)"/><rect x="331.5" y="46.0" width="3.6" height="346.0" fill="url(#a63)"/><rect x="334.5" y="46.0" width="3.6" height="346.0" fill="url(#a64)"/><rect x="337.5" y="46.0" width="3.6" height="346.0" fill="url(#a65)"/><rect x="340.5" y="46.0" width="3.6" height="346.0" fill="url(#a66)"/><rect x="343.5" y="46.0" width="3.6" height="346.0" fill="url(#a67)"/><rect x="346.5" y="46.0" width="3.6" height="346.0" fill="url(#a68)"/><rect x="349.5" y="46.0" width="3.6" height="346.0" fill="url(#a69)"/><rect x="352.5" y="46.0" width="3.6" height="346.0" fill="url(#a70)"/><rect x="355.5" y="46.0" width="3.6" height="346.0" fill="url(#a71)"/><rect x="358.5" y="46.0" width="3.6" height="346.0" fill="url(#a72)"/><rect x="361.5" y="46.0" width="3.6" height="346.0" fill="url(#a73)"/><rect x="364.5" y="46.0" width="3.6" height="346.0" fill="url(#a74)"/><rect x="367.5" y="46.0" width="3.6" height="346.0" fill="url(#a75)"/><rect x="370.5" y="46.0" width="3.6" height="346.0" fill="url(#a76)"/><rect x="373.5" y="46.0" width="3.6" height="346.0" fill="url(#a77)"/><rect x="376.5" y="46.0" width="3.6" height="346.0" fill="url(#a78)"/><rect x="379.5" y="46.0" width="3.6" height="346.0" fill="url(#a79)"/><rect x="382.5" y="46.0" width="3.6" height="346.0" fill="url(#a80)"/><rect x="385.5" y="46.0" width="3.6" height="346.0" fill="url(#a81)"/><rect x="388.5" y="46.0" width="3.6" height="346.0" fill="url(#a82)"/><rect x="391.5" y="46.0" width="3.6" height="346.0" fill="url(#a83)"/><rect x="394.5" y="46.0" width="3.6" height="346.0" fill="url(#a84)"/><rect x="397.5" y="46.0" width="3.6" height="346.0" fill="url(#a85)"/><rect x="400.5" y="46.0" width="3.6" height="346.0" fill="url(#a86)"/><rect x="403.5" y="46.0" width="3.6" height="346.0" fill="url(#a87)"/><rect x="406.5" y="46.0" width="3.6" height="346.0" fill="url(#a88)"/><rect x="409.5" y="46.0" width="3.6" height="346.0" fill="url(#a89)"/><rect x="412.5" y="46.0" width="3.6" height="346.0" fill="url(#a90)"/><rect x="415.5" y="46.0" width="3.6" height="346.0" fill="url(#a91)"/><rect x="418.5" y="46.0" width="3.6" height="346.0" fill="url(#a92)"/><rect x="421.5" y="46.0" width="3.6" height="346.0" fill="url(#a93)"/><rect x="424.5" y="46.0" width="3.6" height="346.0" fill="url(#a94)"/><rect x="427.5" y="46.0" width="3.6" height="346.0" fill="url(#a95)"/><rect x="430.5" y="46.0" width="3.6" height="346.0" fill="url(#a96)"/><rect x="433.5" y="46.0" width="3.6" height="346.0" fill="url(#a97)"/><rect x="436.5" y="46.0" width="3.6" height="346.0" fill="url(#a98)"/><rect x="439.5" y="46.0" width="3.6" height="346.0" fill="url(#a99)"/><rect x="442.5" y="46.0" width="3.6" height="346.0" fill="url(#a100)"/><rect x="445.5" y="46.0" width="3.6" height="346.0" fill="url(#a101)"/><rect x="448.5" y="46.0" width="3.6" height="346.0" fill="url(#a102)"/><rect x="451.5" y="46.0" width="3.6" height="346.0" fill="url(#a103)"/><rect x="454.5" y="46.0" width="3.6" height="346.0" fill="url(#a104)"/><rect x="457.5" y="46.0" width="3.6" height="346.0" fill="url(#a105)"/><rect x="460.5" y="46.0" width="3.6" height="346.0" fill="url(#a106)"/><rect x="463.5" y="46.0" width="3.6" height="346.0" fill="url(#a107)"/><rect x="466.5" y="46.0" width="3.6" height="346.0" fill="url(#a108)"/><rect x="469.5" y="46.0" width="3.6" height="346.0" fill="url(#a109)"/><rect x="472.5" y="46.0" width="3.6" height="346.0" fill="url(#a110)"/><rect x="475.5" y="46.0" width="3.6" height="346.0" fill="url(#a111)"/><rect x="478.5" y="46.0" width="3.6" height="346.0" fill="url(#a112)"/><rect x="481.5" y="46.0" width="3.6" height="346.0" fill="url(#a113)"/><rect x="484.5" y="46.0" width="3.6" height="346.0" fill="url(#a114)"/><rect x="487.5" y="46.0" width="2.6" height="346.0" fill="url(#a115)"/></g></g>
<rect x="61.5" y="45.5" width="509" height="347" fill="none" stroke="#d0d0d0"/>
<path d="M142.5 46V59M142.5 379V392" stroke="#a8a8a8"/>
<path d="M489.5 46V59M489.5 379V392" stroke="#a8a8a8"/>
<rect x="362.5" y="41.5" width="3" height="4" fill="none" stroke="#ddd"/>
<text class="sb" x="11.7" y="34.6" font-size="14" fill="#fff" textLength="161.3" lengthAdjust="spacingAndGlyphs">01______AUDIOTRACK_01</text>
<text class="tb" x="478.0" y="32.9" font-size="12.7" fill="#fff" textLength="89.4" lengthAdjust="spacingAndGlyphs">Input Pattern</text>
<text class="sb" x="37.2" y="52.5" font-size="10.2" fill="#fff" text-anchor="middle" textLength="37.6" lengthAdjust="spacingAndGlyphs">16000Hz</text>
<text class="sb" x="37.2" y="91.7" font-size="10.2" fill="#fff" text-anchor="middle" textLength="37.6" lengthAdjust="spacingAndGlyphs">14000Hz</text>
<text class="sb" x="37.2" y="135.1" font-size="10.2" fill="#fff" text-anchor="middle" textLength="37.6" lengthAdjust="spacingAndGlyphs">12000Hz</text>
<text class="sb" x="37.2" y="178.4" font-size="10.2" fill="#fff" text-anchor="middle" textLength="37.6" lengthAdjust="spacingAndGlyphs">10000Hz</text>
<text class="sb" x="37.2" y="221.8" font-size="10.2" fill="#fff" text-anchor="middle" textLength="32.3" lengthAdjust="spacingAndGlyphs">8000Hz</text>
<text class="sb" x="37.2" y="265.2" font-size="10.2" fill="#fff" text-anchor="middle" textLength="32.3" lengthAdjust="spacingAndGlyphs">6000Hz</text>
<text class="sb" x="37.2" y="308.6" font-size="10.2" fill="#fff" text-anchor="middle" textLength="32.3" lengthAdjust="spacingAndGlyphs">4000Hz</text>
<text class="sb" x="37.2" y="351.9" font-size="10.2" fill="#fff" text-anchor="middle" textLength="32.3" lengthAdjust="spacingAndGlyphs">2000Hz</text>
<text class="sb" x="37.2" y="394.4" font-size="10.2" fill="#fff" text-anchor="middle" textLength="16.7" lengthAdjust="spacingAndGlyphs">0Hz</text>
<path d="M57 88.6H61" stroke="#aaa"/>
<path d="M57 132.0H61" stroke="#aaa"/>
<path d="M57 175.3H61" stroke="#aaa"/>
<path d="M57 218.7H61" stroke="#aaa"/>
<path d="M57 262.1H61" stroke="#aaa"/>
<path d="M57 305.5H61" stroke="#aaa"/>
<path d="M57 348.8H61" stroke="#aaa"/>
<text class="sb" x="83.8" y="405.4" font-size="12" fill="#1fe0ee" textLength="86.5" lengthAdjust="spacingAndGlyphs">Frame Shift 40pt</text>
<text class="sb" x="218.3" y="405.4" font-size="12" fill="#1fe0ee" textLength="119.0" lengthAdjust="spacingAndGlyphs">Number of Frames 129</text>
<text class="sb" x="374.5" y="405.4" font-size="12" fill="#1fe0ee" textLength="125.8" lengthAdjust="spacingAndGlyphs">Peak Frequency 6469Hz</text>
<rect x="511" y="49" width="54.5" height="203" fill="#404040"/>
<rect x="545" y="69.5" width="14" height="173" fill="url(#jet)"/>
<text class="sb" x="529.8" y="61.5" font-size="10.2" fill="#fff" text-anchor="middle" textLength="12.5" lengthAdjust="spacingAndGlyphs">dB</text>
<text class="sb" x="528.7" y="73.6" font-size="10.2" fill="#fff" text-anchor="middle" textLength="5.2" lengthAdjust="spacingAndGlyphs">0</text>
<path d="M540 70.0H545" stroke="#999"/>
<text class="sb" x="528.7" y="95.2" font-size="10.2" fill="#fff" text-anchor="middle" textLength="8.3" lengthAdjust="spacingAndGlyphs">-8</text>
<path d="M540 91.6H545" stroke="#999"/>
<text class="sb" x="528.7" y="116.7" font-size="10.2" fill="#fff" text-anchor="middle" textLength="13.6" lengthAdjust="spacingAndGlyphs">-15</text>
<path d="M540 113.1H545" stroke="#999"/>
<text class="sb" x="528.7" y="138.3" font-size="10.2" fill="#fff" text-anchor="middle" textLength="13.6" lengthAdjust="spacingAndGlyphs">-23</text>
<path d="M540 134.7H545" stroke="#999"/>
<text class="sb" x="528.7" y="159.8" font-size="10.2" fill="#fff" text-anchor="middle" textLength="13.6" lengthAdjust="spacingAndGlyphs">-30</text>
<path d="M540 156.2H545" stroke="#999"/>
<text class="sb" x="528.7" y="181.4" font-size="10.2" fill="#fff" text-anchor="middle" textLength="13.6" lengthAdjust="spacingAndGlyphs">-38</text>
<path d="M540 177.8H545" stroke="#999"/>
<text class="sb" x="528.7" y="203.0" font-size="10.2" fill="#fff" text-anchor="middle" textLength="13.6" lengthAdjust="spacingAndGlyphs">-45</text>
<path d="M540 199.4H545" stroke="#999"/>
<text class="sb" x="528.7" y="224.5" font-size="10.2" fill="#fff" text-anchor="middle" textLength="13.6" lengthAdjust="spacingAndGlyphs">-53</text>
<path d="M540 220.9H545" stroke="#999"/>
<text class="sb" x="528.7" y="246.1" font-size="10.2" fill="#fff" text-anchor="middle" textLength="13.6" lengthAdjust="spacingAndGlyphs">-60</text>
<path d="M540 242.5H545" stroke="#999"/>
<path d="M489.5 252H497.5" stroke="#aaa"/>
<clipPath id="cl577"><rect x="639" y="46" width="427.5" height="346"/></clipPath><g clip-path="url(#cl577)"><g filter="url(#hb)"><rect x="731.5" y="46.0" width="3.6" height="346.0" fill="url(#b4)"/><rect x="734.5" y="46.0" width="3.6" height="346.0" fill="url(#b5)"/><rect x="737.5" y="46.0" width="3.6" height="346.0" fill="url(#b6)"/><rect x="740.5" y="46.0" width="3.6" height="346.0" fill="url(#b7)"/><rect x="743.5" y="46.0" width="3.6" height="346.0" fill="url(#b8)"/><rect x="746.5" y="46.0" width="3.6" height="346.0" fill="url(#b9)"/><rect x="749.5" y="46.0" width="3.6" height="346.0" fill="url(#b10)"/><rect x="752.5" y="46.0" width="3.6" height="346.0" fill="url(#b11)"/><rect x="755.5" y="46.0" width="3.6" height="346.0" fill="url(#b12)"/><rect x="758.5" y="46.0" width="3.6" height="346.0" fill="url(#b13)"/><rect x="761.5" y="46.0" width="3.6" height="346.0" fill="url(#b14)"/><rect x="764.5" y="46.0" width="3.6" height="346.0" fill="url(#b15)"/><rect x="767.5" y="46.0" width="3.6" height="346.0" fill="url(#b16)"/><rect x="770.5" y="46.0" width="3.6" height="346.0" fill="url(#b17)"/><rect x="773.5" y="46.0" width="3.6" height="346.0" fill="url(#b18)"/><rect x="776.5" y="46.0" width="3.6" height="346.0" fill="url(#b19)"/><rect x="779.5" y="46.0" width="3.6" height="346.0" fill="url(#b20)"/><rect x="782.5" y="46.0" width="3.6" height="346.0" fill="url(#b21)"/><rect x="785.5" y="46.0" width="3.6" height="346.0" fill="url(#b22)"/><rect x="788.5" y="46.0" width="3.6" height="346.0" fill="url(#b23)"/><rect x="791.5" y="46.0" width="3.6" height="346.0" fill="url(#b24)"/><rect x="794.5" y="46.0" width="3.6" height="346.0" fill="url(#b25)"/><rect x="797.5" y="46.0" width="3.6" height="346.0" fill="url(#b26)"/><rect x="800.5" y="46.0" width="3.6" height="346.0" fill="url(#b27)"/><rect x="803.5" y="46.0" width="3.6" height="346.0" fill="url(#b28)"/><rect x="806.5" y="46.0" width="3.6" height="346.0" fill="url(#b29)"/><rect x="809.5" y="46.0" width="3.6" height="346.0" fill="url(#b30)"/><rect x="812.5" y="46.0" width="3.6" height="346.0" fill="url(#b31)"/><rect x="815.5" y="46.0" width="3.6" height="346.0" fill="url(#b32)"/><rect x="818.5" y="46.0" width="3.6" height="346.0" fill="url(#b33)"/><rect x="821.5" y="46.0" width="3.6" height="346.0" fill="url(#b34)"/><rect x="824.5" y="46.0" width="3.6" height="346.0" fill="url(#b35)"/><rect x="827.5" y="46.0" width="3.6" height="346.0" fill="url(#b36)"/><rect x="830.5" y="46.0" width="3.6" height="346.0" fill="url(#b37)"/><rect x="833.5" y="46.0" width="3.6" height="346.0" fill="url(#b38)"/><rect x="836.5" y="46.0" width="3.6" height="346.0" fill="url(#b39)"/><rect x="839.5" y="46.0" width="3.6" height="346.0" fill="url(#b40)"/><rect x="842.5" y="46.0" width="3.6" height="346.0" fill="url(#b41)"/><rect x="845.5" y="46.0" width="3.6" height="346.0" fill="url(#b42)"/><rect x="848.5" y="46.0" width="3.6" height="346.0" fill="url(#b43)"/><rect x="851.5" y="46.0" width="3.6" height="346.0" fill="url(#b44)"/><rect x="854.5" y="46.0" width="3.6" height="346.0" fill="url(#b45)"/><rect x="857.5" y="46.0" width="3.6" height="346.0" fill="url(#b46)"/><rect x="860.5" y="46.0" width="3.6" height="346.0" fill="url(#b47)"/><rect x="863.5" y="46.0" width="3.6" height="346.0" fill="url(#b48)"/><rect x="866.5" y="46.0" width="3.6" height="346.0" fill="url(#b49)"/><rect x="869.5" y="46.0" width="3.6" height="346.0" fill="url(#b50)"/><rect x="872.5" y="46.0" width="3.6" height="346.0" fill="url(#b51)"/><rect x="875.5" y="46.0" width="3.6" height="346.0" fill="url(#b52)"/><rect x="878.5" y="46.0" width="3.6" height="346.0" fill="url(#b53)"/><rect x="881.5" y="46.0" width="3.6" height="346.0" fill="url(#b54)"/><rect x="884.5" y="46.0" width="3.6" height="346.0" fill="url(#b55)"/><rect x="887.5" y="46.0" width="3.6" height="346.0" fill="url(#b56)"/><rect x="890.5" y="46.0" width="3.6" height="346.0" fill="url(#b57)"/><rect x="893.5" y="46.0" width="3.6" height="346.0" fill="url(#b58)"/><rect x="896.5" y="46.0" width="3.6" height="346.0" fill="url(#b59)"/><rect x="899.5" y="46.0" width="3.6" height="346.0" fill="url(#b60)"/><rect x="902.5" y="46.0" width="3.6" height="346.0" fill="url(#b61)"/><rect x="905.5" y="46.0" width="3.6" height="346.0" fill="url(#b62)"/><rect x="908.5" y="46.0" width="3.6" height="346.0" fill="url(#b63)"/><rect x="911.5" y="46.0" width="3.6" height="346.0" fill="url(#b64)"/><rect x="914.5" y="46.0" width="3.6" height="346.0" fill="url(#b65)"/><rect x="917.5" y="46.0" width="3.6" height="346.0" fill="url(#b66)"/><rect x="920.5" y="46.0" width="3.6" height="346.0" fill="url(#b67)"/><rect x="923.5" y="46.0" width="3.6" height="346.0" fill="url(#b68)"/><rect x="926.5" y="46.0" width="3.6" height="346.0" fill="url(#b69)"/><rect x="929.5" y="46.0" width="3.6" height="346.0" fill="url(#b70)"/><rect x="932.5" y="46.0" width="3.6" height="346.0" fill="url(#b71)"/><rect x="935.5" y="46.0" width="3.6" height="346.0" fill="url(#b72)"/><rect x="938.5" y="46.0" width="3.6" height="346.0" fill="url(#b73)"/><rect x="941.5" y="46.0" width="3.6" height="346.0" fill="url(#b74)"/><rect x="944.5" y="46.0" width="3.6" height="346.0" fill="url(#b75)"/><rect x="947.5" y="46.0" width="3.6" height="346.0" fill="url(#b76)"/><rect x="950.5" y="46.0" width="3.6" height="346.0" fill="url(#b77)"/><rect x="953.5" y="46.0" width="3.6" height="346.0" fill="url(#b78)"/><rect x="956.5" y="46.0" width="3.6" height="346.0" fill="url(#b79)"/><rect x="959.5" y="46.0" width="3.6" height="346.0" fill="url(#b80)"/><rect x="962.5" y="46.0" width="3.6" height="346.0" fill="url(#b81)"/><rect x="965.5" y="46.0" width="3.6" height="346.0" fill="url(#b82)"/><rect x="968.5" y="46.0" width="3.6" height="346.0" fill="url(#b83)"/><rect x="971.5" y="46.0" width="3.6" height="346.0" fill="url(#b84)"/><rect x="974.5" y="46.0" width="3.6" height="346.0" fill="url(#b85)"/><rect x="977.5" y="46.0" width="3.6" height="346.0" fill="url(#b86)"/><rect x="980.5" y="46.0" width="3.6" height="346.0" fill="url(#b87)"/><rect x="983.5" y="46.0" width="3.6" height="346.0" fill="url(#b88)"/><rect x="986.5" y="46.0" width="3.6" height="346.0" fill="url(#b89)"/><rect x="989.5" y="46.0" width="3.6" height="346.0" fill="url(#b90)"/><rect x="992.5" y="46.0" width="3.6" height="346.0" fill="url(#b91)"/><rect x="995.5" y="46.0" width="3.6" height="346.0" fill="url(#b92)"/><rect x="998.5" y="46.0" width="3.6" height="346.0" fill="url(#b93)"/><rect x="1001.5" y="46.0" width="3.6" height="346.0" fill="url(#b94)"/><rect x="1004.5" y="46.0" width="3.6" height="346.0" fill="url(#b95)"/><rect x="1007.5" y="46.0" width="3.6" height="346.0" fill="url(#b96)"/><rect x="1010.5" y="46.0" width="3.6" height="346.0" fill="url(#b97)"/><rect x="1013.5" y="46.0" width="3.6" height="346.0" fill="url(#b98)"/><rect x="1016.5" y="46.0" width="3.6" height="346.0" fill="url(#b99)"/><rect x="1019.5" y="46.0" width="3.6" height="346.0" fill="url(#b100)"/><rect x="1022.5" y="46.0" width="3.6" height="346.0" fill="url(#b101)"/><rect x="1025.5" y="46.0" width="3.6" height="346.0" fill="url(#b102)"/><rect x="1028.5" y="46.0" width="3.6" height="346.0" fill="url(#b103)"/><rect x="1031.5" y="46.0" width="3.6" height="346.0" fill="url(#b104)"/><rect x="1034.5" y="46.0" width="3.6" height="346.0" fill="url(#b105)"/><rect x="1037.5" y="46.0" width="3.6" height="346.0" fill="url(#b106)"/><rect x="1040.5" y="46.0" width="3.6" height="346.0" fill="url(#b107)"/><rect x="1043.5" y="46.0" width="3.6" height="346.0" fill="url(#b108)"/><rect x="1046.5" y="46.0" width="3.6" height="346.0" fill="url(#b109)"/><rect x="1049.5" y="46.0" width="3.6" height="346.0" fill="url(#b110)"/><rect x="1052.5" y="46.0" width="3.6" height="346.0" fill="url(#b111)"/><rect x="1055.5" y="46.0" width="3.6" height="346.0" fill="url(#b112)"/><rect x="1058.5" y="46.0" width="3.6" height="346.0" fill="url(#b113)"/><rect x="1061.5" y="46.0" width="3.6" height="346.0" fill="url(#b114)"/><rect x="1064.5" y="46.0" width="2.6" height="346.0" fill="url(#b115)"/></g></g>
<rect x="638.5" y="45.5" width="509" height="347" fill="none" stroke="#d0d0d0"/>
<path d="M719.5 46V59M719.5 379V392" stroke="#a8a8a8"/>
<path d="M1066.5 46V59M1066.5 379V392" stroke="#a8a8a8"/>
<rect x="920.5" y="41.5" width="3" height="4" fill="none" stroke="#ddd"/>
<text class="sb" x="588.7" y="34.6" font-size="14" fill="#fff" textLength="103.0" lengthAdjust="spacingAndGlyphs">01 Advertising 16</text>
<text class="tb" x="1031.5" y="32.9" font-size="12.7" fill="#fff" textLength="114.5" lengthAdjust="spacingAndGlyphs">Standard Pattern</text>
<text class="sb" x="614.2" y="52.5" font-size="10.2" fill="#fff" text-anchor="middle" textLength="37.6" lengthAdjust="spacingAndGlyphs">16000Hz</text>
<text class="sb" x="614.2" y="91.7" font-size="10.2" fill="#fff" text-anchor="middle" textLength="37.6" lengthAdjust="spacingAndGlyphs">14000Hz</text>
<text class="sb" x="614.2" y="135.1" font-size="10.2" fill="#fff" text-anchor="middle" textLength="37.6" lengthAdjust="spacingAndGlyphs">12000Hz</text>
<text class="sb" x="614.2" y="178.4" font-size="10.2" fill="#fff" text-anchor="middle" textLength="37.6" lengthAdjust="spacingAndGlyphs">10000Hz</text>
<text class="sb" x="614.2" y="221.8" font-size="10.2" fill="#fff" text-anchor="middle" textLength="32.3" lengthAdjust="spacingAndGlyphs">8000Hz</text>
<text class="sb" x="614.2" y="265.2" font-size="10.2" fill="#fff" text-anchor="middle" textLength="32.3" lengthAdjust="spacingAndGlyphs">6000Hz</text>
<text class="sb" x="614.2" y="308.6" font-size="10.2" fill="#fff" text-anchor="middle" textLength="32.3" lengthAdjust="spacingAndGlyphs">4000Hz</text>
<text class="sb" x="614.2" y="351.9" font-size="10.2" fill="#fff" text-anchor="middle" textLength="32.3" lengthAdjust="spacingAndGlyphs">2000Hz</text>
<text class="sb" x="614.2" y="394.4" font-size="10.2" fill="#fff" text-anchor="middle" textLength="16.7" lengthAdjust="spacingAndGlyphs">0Hz</text>
<path d="M634 88.6H638" stroke="#aaa"/>
<path d="M634 132.0H638" stroke="#aaa"/>
<path d="M634 175.3H638" stroke="#aaa"/>
<path d="M634 218.7H638" stroke="#aaa"/>
<path d="M634 262.1H638" stroke="#aaa"/>
<path d="M634 305.5H638" stroke="#aaa"/>
<path d="M634 348.8H638" stroke="#aaa"/>
<text class="sb" x="660.8" y="405.4" font-size="12" fill="#1fe0ee" textLength="86.5" lengthAdjust="spacingAndGlyphs">Frame Shift 40pt</text>
<text class="sb" x="795.3" y="405.4" font-size="12" fill="#1fe0ee" textLength="119.0" lengthAdjust="spacingAndGlyphs">Number of Frames 129</text>
<text class="sb" x="951.5" y="405.4" font-size="12" fill="#1fe0ee" textLength="125.8" lengthAdjust="spacingAndGlyphs">Peak Frequency 6781Hz</text>
<rect x="1088" y="49" width="54.5" height="203" fill="#404040"/>
<rect x="1122" y="69.5" width="14" height="173" fill="url(#jet)"/>
<text class="sb" x="1106.8" y="61.5" font-size="10.2" fill="#fff" text-anchor="middle" textLength="12.5" lengthAdjust="spacingAndGlyphs">dB</text>
<text class="sb" x="1105.7" y="73.6" font-size="10.2" fill="#fff" text-anchor="middle" textLength="5.2" lengthAdjust="spacingAndGlyphs">0</text>
<path d="M1117 70.0H1122" stroke="#999"/>
<text class="sb" x="1105.7" y="95.2" font-size="10.2" fill="#fff" text-anchor="middle" textLength="8.3" lengthAdjust="spacingAndGlyphs">-8</text>
<path d="M1117 91.6H1122" stroke="#999"/>
<text class="sb" x="1105.7" y="116.7" font-size="10.2" fill="#fff" text-anchor="middle" textLength="13.6" lengthAdjust="spacingAndGlyphs">-15</text>
<path d="M1117 113.1H1122" stroke="#999"/>
<text class="sb" x="1105.7" y="138.3" font-size="10.2" fill="#fff" text-anchor="middle" textLength="13.6" lengthAdjust="spacingAndGlyphs">-23</text>
<path d="M1117 134.7H1122" stroke="#999"/>
<text class="sb" x="1105.7" y="159.8" font-size="10.2" fill="#fff" text-anchor="middle" textLength="13.6" lengthAdjust="spacingAndGlyphs">-30</text>
<path d="M1117 156.2H1122" stroke="#999"/>
<text class="sb" x="1105.7" y="181.4" font-size="10.2" fill="#fff" text-anchor="middle" textLength="13.6" lengthAdjust="spacingAndGlyphs">-38</text>
<path d="M1117 177.8H1122" stroke="#999"/>
<text class="sb" x="1105.7" y="203.0" font-size="10.2" fill="#fff" text-anchor="middle" textLength="13.6" lengthAdjust="spacingAndGlyphs">-45</text>
<path d="M1117 199.4H1122" stroke="#999"/>
<text class="sb" x="1105.7" y="224.5" font-size="10.2" fill="#fff" text-anchor="middle" textLength="13.6" lengthAdjust="spacingAndGlyphs">-53</text>
<path d="M1117 220.9H1122" stroke="#999"/>
<text class="sb" x="1105.7" y="246.1" font-size="10.2" fill="#fff" text-anchor="middle" textLength="13.6" lengthAdjust="spacingAndGlyphs">-60</text>
<path d="M1117 242.5H1122" stroke="#999"/>
<path d="M1066.5 245.3H1074.5" stroke="#aaa"/>
<rect x="61.5" y="449.5" width="509" height="147.5" fill="none" stroke="#d0d0d0"/>
<path d="M142.5 450V462M142.5 584.500V597" stroke="#a8a8a8"/>
<path d="M489.5 450V462M489.5 584.500V597" stroke="#a8a8a8"/>
<text class="sb" x="11.7" y="437.5" font-size="14" fill="#fff" textLength="161.3" lengthAdjust="spacingAndGlyphs">01______AUDIOTRACK_01</text>
<text class="sb" x="311.2" y="438.8" font-size="14" fill="#1fe0ee" textLength="93.7" lengthAdjust="spacingAndGlyphs">301 points LPC</text>
<text class="sb" x="439.6" y="438.8" font-size="14" fill="#14e614" textLength="129.6" lengthAdjust="spacingAndGlyphs">3119340 points wave</text>
<path d="M62 523.5H142.500" stroke="#2ee02e"/><polygon points="142.5,523.0 143.5,523.0 144.5,523.0 145.5,523.0 146.5,523.0 147.5,523.0 148.5,523.0 149.5,523.0 150.5,523.0 151.5,523.0 152.5,523.0 153.5,523.0 154.5,523.0 155.5,523.0 156.5,523.0 157.5,523.0 158.5,523.0 159.5,523.0 160.5,523.0 161.5,523.0 162.5,523.0 163.5,523.0 164.5,523.0 165.5,523.0 166.5,523.0 167.5,523.0 168.5,523.0 169.5,522.8 170.5,522.7 171.5,522.6 172.5,522.7 173.5,522.8 174.5,522.8 175.5,522.9 176.5,522.6 177.5,522.6 178.5,522.5 179.5,522.0 180.5,522.6 181.5,522.1 182.5,522.1 183.5,521.9 184.5,522.1 185.5,521.3 186.5,521.3 187.5,521.9 188.5,520.9 189.5,520.5 190.5,521.5 191.5,521.2 192.5,520.8 193.5,519.3 194.5,519.1 195.5,518.7 196.5,519.3 197.5,518.6 198.5,520.3 199.5,517.6 200.5,519.9 201.5,520.0 202.5,518.9 203.5,519.7 204.5,516.5 205.5,517.1 206.5,518.1 207.5,519.6 208.5,519.7 209.5,517.4 210.5,519.7 211.5,518.3 212.5,518.0 213.5,519.2 214.5,518.4 215.5,520.0 216.5,515.3 217.5,515.1 218.5,514.6 219.5,519.1 220.5,517.5 221.5,518.6 222.5,516.9 223.5,517.9 224.5,517.3 225.5,511.4 226.5,517.5 227.5,518.3 228.5,512.5 229.5,509.9 230.5,510.4 231.5,514.8 232.5,515.6 233.5,513.0 234.5,516.2 235.5,514.6 236.5,512.1 237.5,511.4 238.5,508.2 239.5,516.5 240.5,518.9 241.5,512.5 242.5,518.2 243.5,518.5 244.5,516.9 245.5,514.0 246.5,517.0 247.5,518.8 248.5,513.8 249.5,513.7 250.5,517.9 251.5,513.1 252.5,516.3 253.5,516.9 254.5,516.0 255.5,513.4 256.5,513.4 257.5,517.6 258.5,512.4 259.5,518.3 260.5,517.1 261.5,516.7 262.5,509.9 263.5,510.4 264.5,514.7 265.5,516.1 266.5,515.5 267.5,510.7 268.5,517.8 269.5,516.1 270.5,516.6 271.5,508.8 272.5,519.2 273.5,511.7 274.5,517.9 275.5,515.4 276.5,509.0 277.5,518.7 278.5,517.7 279.5,514.6 280.5,511.6 281.5,516.8 282.5,515.3 283.5,516.4 284.5,515.7 285.5,517.2 286.5,517.5 287.5,518.6 288.5,515.2 289.5,511.1 290.5,515.2 291.5,515.6 292.5,516.5 293.5,512.5 294.5,518.7 295.5,517.2 296.5,517.7 297.5,510.8 298.5,518.7 299.5,516.7 300.5,518.8 301.5,517.6 302.5,517.9 303.5,512.8 304.5,518.3 305.5,515.2 306.5,516.0 307.5,511.3 308.5,511.1 309.5,517.3 310.5,510.6 311.5,510.8 312.5,517.0 313.5,510.7 314.5,518.2 315.5,517.4 316.5,511.2 317.5,513.3 318.5,510.6 319.5,510.5 320.5,510.7 321.5,514.8 322.5,510.1 323.5,516.7 324.5,517.6 325.5,510.8 326.5,516.5 327.5,509.0 328.5,513.3 329.5,512.6 330.5,515.9 331.5,516.4 332.5,509.0 333.5,514.0 334.5,515.8 335.5,508.9 336.5,513.8 337.5,510.1 338.5,513.6 339.5,513.3 340.5,508.9 341.5,513.1 342.5,515.6 343.5,514.3 344.5,510.0 345.5,508.9 346.5,509.0 347.5,514.2 348.5,512.2 349.5,513.6 350.5,515.8 351.5,515.1 352.5,508.6 353.5,508.0 354.5,510.2 355.5,510.1 356.5,509.1 357.5,511.6 358.5,511.0 359.5,507.4 360.5,511.6 361.5,508.1 362.5,513.7 363.5,514.8 364.5,509.9 365.5,513.2 366.5,509.2 367.5,508.9 368.5,510.2 369.5,516.1 370.5,510.4 371.5,515.7 372.5,513.2 373.5,510.6 374.5,508.9 375.5,510.7 376.5,514.1 377.5,515.2 378.5,512.5 379.5,509.0 380.5,514.5 381.5,516.5 382.5,509.7 383.5,513.7 384.5,509.5 385.5,514.6 386.5,512.3 387.5,514.7 388.5,511.2 389.5,513.1 390.5,515.1 391.5,510.8 392.5,508.3 393.5,514.0 394.5,508.8 395.5,510.5 396.5,513.6 397.5,509.1 398.5,516.8 399.5,514.8 400.5,517.5 401.5,513.9 402.5,510.7 403.5,512.2 404.5,510.5 405.5,513.5 406.5,510.0 407.5,512.6 408.5,511.7 409.5,512.8 410.5,508.6 411.5,515.4 412.5,509.3 413.5,510.9 414.5,506.6 415.5,516.4 416.5,512.0 417.5,508.5 418.5,507.6 419.5,515.9 420.5,508.2 421.5,516.8 422.5,512.7 423.5,515.3 424.5,517.5 425.5,516.5 426.5,512.1 427.5,511.7 428.5,517.4 429.5,518.6 430.5,517.2 431.5,515.8 432.5,516.5 433.5,520.3 434.5,519.3 435.5,520.7 436.5,518.5 437.5,520.4 438.5,521.4 439.5,521.4 440.5,521.4 441.5,521.0 442.5,520.2 443.5,521.3 444.5,520.2 445.5,520.9 446.5,521.8 447.5,521.7 448.5,520.0 449.5,520.1 450.5,520.9 451.5,520.0 452.5,519.9 453.5,520.8 454.5,521.4 455.5,520.5 456.5,521.4 457.5,520.4 458.5,520.7 459.5,520.7 460.5,520.5 461.5,522.3 462.5,521.9 463.5,520.7 464.5,522.0 465.5,522.0 466.5,520.6 467.5,522.2 468.5,520.6 469.5,520.2 470.5,520.8 471.5,520.5 472.5,521.4 473.5,521.2 474.5,520.4 475.5,521.6 476.5,521.5 477.5,520.4 478.5,521.8 479.5,521.3 480.5,522.0 481.5,521.7 482.5,522.2 483.5,521.4 484.5,521.4 485.5,521.9 486.5,521.7 487.5,521.7 488.5,522.1 488.5,526.6 487.5,524.7 486.5,525.1 485.5,525.3 484.5,526.5 483.5,526.3 482.5,525.3 481.5,525.5 480.5,526.6 479.5,525.3 478.5,525.5 477.5,524.9 476.5,525.0 475.5,525.7 474.5,525.1 473.5,524.8 472.5,525.3 471.5,526.6 470.5,525.0 469.5,526.6 468.5,526.2 467.5,526.0 466.5,525.3 465.5,525.3 464.5,525.2 463.5,526.5 462.5,525.3 461.5,525.3 460.5,524.9 459.5,526.6 458.5,524.8 457.5,525.6 456.5,525.9 455.5,527.4 454.5,526.9 453.5,526.5 452.5,526.4 451.5,527.4 450.5,526.3 449.5,527.5 448.5,526.7 447.5,527.3 446.5,525.0 445.5,527.0 444.5,525.6 443.5,527.2 442.5,525.8 441.5,527.1 440.5,527.5 439.5,526.4 438.5,525.3 437.5,527.7 436.5,526.4 435.5,525.8 434.5,529.7 433.5,529.3 432.5,528.2 431.5,527.2 430.5,528.6 429.5,532.8 428.5,533.1 427.5,529.6 426.5,529.6 425.5,535.7 424.5,534.9 423.5,536.8 422.5,529.6 421.5,530.0 420.5,538.4 419.5,538.8 418.5,530.4 417.5,532.7 416.5,535.7 415.5,534.8 414.5,536.1 413.5,533.6 412.5,537.7 411.5,537.4 410.5,534.6 409.5,534.6 408.5,532.4 407.5,533.9 406.5,533.4 405.5,536.4 404.5,537.0 403.5,532.6 402.5,533.7 401.5,532.5 400.5,533.4 399.5,532.4 398.5,530.8 397.5,536.9 396.5,535.9 395.5,540.3 394.5,536.2 393.5,540.1 392.5,537.9 391.5,531.3 390.5,530.8 389.5,534.6 388.5,532.6 387.5,534.4 386.5,530.2 385.5,530.8 384.5,530.6 383.5,534.7 382.5,531.7 381.5,535.6 380.5,537.4 379.5,536.0 378.5,537.7 377.5,531.7 376.5,533.6 375.5,536.0 374.5,538.4 373.5,531.7 372.5,532.1 371.5,531.1 370.5,538.9 369.5,538.6 368.5,538.1 367.5,537.3 366.5,539.8 365.5,539.1 364.5,531.6 363.5,539.9 362.5,536.0 361.5,540.6 360.5,534.4 359.5,535.1 358.5,535.2 357.5,539.3 356.5,539.0 355.5,538.4 354.5,535.8 353.5,539.2 352.5,534.8 351.5,538.8 350.5,534.2 349.5,530.6 348.5,538.6 347.5,536.3 346.5,538.4 345.5,538.2 344.5,530.8 343.5,531.0 342.5,536.7 341.5,531.9 340.5,530.2 339.5,535.1 338.5,531.8 337.5,537.2 336.5,530.0 335.5,532.1 334.5,537.5 333.5,531.1 332.5,537.6 331.5,535.2 330.5,531.7 329.5,537.1 328.5,536.2 327.5,534.3 326.5,536.6 325.5,530.2 324.5,530.7 323.5,532.0 322.5,532.1 321.5,532.9 320.5,530.0 319.5,530.8 318.5,529.6 317.5,534.8 316.5,527.7 315.5,536.3 314.5,532.9 313.5,534.8 312.5,531.1 311.5,534.5 310.5,533.6 309.5,530.2 308.5,536.1 307.5,531.2 306.5,533.6 305.5,532.3 304.5,531.4 303.5,536.4 302.5,531.6 301.5,530.7 300.5,531.4 299.5,530.7 298.5,534.1 297.5,532.4 296.5,529.8 295.5,531.0 294.5,532.7 293.5,530.1 292.5,537.3 291.5,533.5 290.5,536.5 289.5,537.6 288.5,531.5 287.5,530.9 286.5,529.4 285.5,531.5 284.5,533.8 283.5,529.9 282.5,531.2 281.5,529.9 280.5,535.7 279.5,530.2 278.5,531.5 277.5,537.8 276.5,534.4 275.5,531.1 274.5,535.0 273.5,528.4 272.5,529.4 271.5,538.8 270.5,529.6 269.5,529.2 268.5,535.2 267.5,528.1 266.5,529.6 265.5,528.3 264.5,537.5 263.5,537.0 262.5,532.4 261.5,530.8 260.5,529.6 259.5,529.6 258.5,535.3 257.5,536.6 256.5,533.2 255.5,536.9 254.5,529.3 253.5,529.7 252.5,536.1 251.5,530.6 250.5,530.1 249.5,528.4 248.5,534.9 247.5,529.9 246.5,533.5 245.5,532.7 244.5,530.0 243.5,534.7 242.5,536.4 241.5,533.1 240.5,528.8 239.5,529.7 238.5,529.5 237.5,535.3 236.5,538.6 235.5,530.3 234.5,528.6 233.5,538.7 232.5,531.7 231.5,531.2 230.5,529.6 229.5,536.0 228.5,533.2 227.5,537.2 226.5,536.4 225.5,535.4 224.5,528.9 223.5,533.6 222.5,529.0 221.5,529.8 220.5,533.7 219.5,528.6 218.5,529.7 217.5,531.4 216.5,527.1 215.5,529.0 214.5,530.4 213.5,529.7 212.5,528.4 211.5,526.7 210.5,526.4 209.5,526.1 208.5,529.8 207.5,528.1 206.5,526.5 205.5,528.0 204.5,530.7 203.5,527.9 202.5,528.5 201.5,527.4 200.5,529.3 199.5,529.2 198.5,526.3 197.5,528.0 196.5,526.3 195.5,526.4 194.5,527.8 193.5,527.6 192.5,526.8 191.5,526.8 190.5,526.4 189.5,525.0 188.5,526.4 187.5,526.1 186.5,524.6 185.5,525.5 184.5,524.7 183.5,525.4 182.5,524.8 181.5,525.4 180.5,525.0 179.5,524.6 178.5,524.8 177.5,524.7 176.5,524.5 175.5,524.2 174.5,524.4 173.5,524.4 172.5,524.1 171.5,524.2 170.5,524.0 169.5,524.2 168.5,524.1 167.5,524.0 166.5,524.0 165.5,524.0 164.5,524.0 163.5,524.0 162.5,524.0 161.5,524.0 160.5,524.0 159.5,524.0 158.5,524.0 157.5,524.0 156.5,524.0 155.5,524.0 154.5,524.0 153.5,524.0 152.5,524.0 151.5,524.0 150.5,524.0 149.5,524.0 148.5,524.0 147.5,524.0 146.5,524.0 145.5,524.0 144.5,524.0 143.5,524.0 142.5,524.0" fill="#0ff"/><polygon points="489.4,520.2 490.4,521.3 491.4,520.1 492.4,519.5 493.4,519.7 494.4,521.8 495.4,520.2 496.4,521.0 497.4,521.9 498.4,521.8 499.4,521.6 500.4,521.1 501.4,522.4 502.4,522.1 503.4,521.6 504.4,522.6 505.4,521.2 506.4,522.0 507.4,522.6 508.4,522.6 509.4,521.8 510.4,522.1 511.4,522.6 512.4,521.4 513.4,522.2 514.4,522.3 515.4,521.9 516.4,522.5 517.4,521.5 518.4,522.2 519.4,521.7 520.4,521.5 521.4,521.2 522.4,522.4 523.4,522.0 524.4,522.1 525.4,521.6 526.4,521.1 527.4,521.4 528.4,522.1 529.4,520.9 530.4,521.1 531.4,522.6 532.4,521.7 533.4,522.4 534.4,521.9 535.4,521.9 536.4,522.2 537.4,521.0 538.4,522.0 539.4,521.2 540.4,521.1 541.4,521.2 542.4,521.7 543.4,522.0 544.4,522.0 545.4,522.1 546.4,521.8 547.4,522.4 548.4,522.3 549.4,522.7 550.4,522.5 551.4,522.4 552.4,521.6 553.4,521.1 554.4,521.3 555.4,521.7 556.4,521.6 557.4,521.5 558.4,521.0 559.4,522.3 560.4,521.9 561.4,521.9 562.4,520.8 563.4,521.4 564.4,521.2 565.4,522.3 566.4,521.1 567.4,521.1 568.4,522.4 569.4,522.3 570.4,521.7 570.4,524.6 569.4,524.8 568.4,525.5 567.4,524.9 566.4,525.9 565.4,525.7 564.4,525.4 563.4,525.3 562.4,525.1 561.4,526.2 560.4,525.1 559.4,526.1 558.4,524.9 557.4,526.1 556.4,524.7 555.4,524.7 554.4,526.0 553.4,524.8 552.4,525.8 551.4,524.8 550.4,524.7 549.4,524.9 548.4,524.5 547.4,525.2 546.4,524.5 545.4,525.7 544.4,525.0 543.4,526.0 542.4,524.9 541.4,525.4 540.4,526.3 539.4,525.4 538.4,525.6 537.4,524.9 536.4,525.8 535.4,525.0 534.4,524.7 533.4,524.5 532.4,524.5 531.4,524.6 530.4,524.9 529.4,524.7 528.4,525.2 527.4,524.6 526.4,526.1 525.4,525.1 524.4,524.9 523.4,524.9 522.4,525.6 521.4,525.6 520.4,524.5 519.4,525.7 518.4,524.6 517.4,525.4 516.4,524.6 515.4,525.2 514.4,525.3 513.4,525.2 512.4,524.5 511.4,524.9 510.4,524.7 509.4,525.5 508.4,525.0 507.4,525.1 506.4,524.6 505.4,525.3 504.4,525.5 503.4,525.6 502.4,525.0 501.4,525.9 500.4,525.9 499.4,524.8 498.4,524.6 497.4,525.8 496.4,525.7 495.4,524.9 494.4,526.1 493.4,527.5 492.4,525.9 491.4,527.5 490.4,526.7 489.4,525.0" fill="#0f0"/>
<path d="M61.5 597.5V602" stroke="#c8c8c8"/>
<text class="sb" x="42.8" y="616.1" font-size="12" fill="#fff" textLength="52.2" lengthAdjust="spacingAndGlyphs">60.841sec</text>
<text class="sb" x="42.8" y="632.7" font-size="12" fill="#fff" textLength="42.4" lengthAdjust="spacingAndGlyphs">2683110</text>
<path d="M188.8 597.5V602" stroke="#c8c8c8"/>
<text class="sb" x="170.1" y="616.1" font-size="12" fill="#fff" textLength="52.2" lengthAdjust="spacingAndGlyphs">60.887sec</text>
<text class="sb" x="170.1" y="632.7" font-size="12" fill="#fff" textLength="43.0" lengthAdjust="spacingAndGlyphs">2685101</text>
<path d="M316.0 597.5V602" stroke="#c8c8c8"/>
<text class="sb" x="297.3" y="616.1" font-size="12" fill="#fff" textLength="52.2" lengthAdjust="spacingAndGlyphs">60.932sec</text>
<text class="sb" x="297.3" y="632.7" font-size="12" fill="#fff" textLength="43.0" lengthAdjust="spacingAndGlyphs">2687091</text>
<path d="M443.2 597.5V602" stroke="#c8c8c8"/>
<text class="sb" x="424.6" y="616.1" font-size="12" fill="#fff" textLength="52.2" lengthAdjust="spacingAndGlyphs">60.977sec</text>
<text class="sb" x="424.6" y="632.7" font-size="12" fill="#fff" textLength="43.0" lengthAdjust="spacingAndGlyphs">2689081</text>
<path d="M570.5 597.5V602" stroke="#c8c8c8"/>
<text class="sb" x="522.5" y="616.1" font-size="12" fill="#fff" textLength="52.2" lengthAdjust="spacingAndGlyphs">61.022sec</text>
<text class="sb" x="522.5" y="632.7" font-size="12" fill="#fff" textLength="43.0" lengthAdjust="spacingAndGlyphs">2691072</text>
<rect x="638.5" y="449.5" width="509" height="147.5" fill="none" stroke="#d0d0d0"/>
<path d="M719.5 450V462M719.5 584.500V597" stroke="#a8a8a8"/>
<path d="M1066.5 450V462M1066.5 584.500V597" stroke="#a8a8a8"/>
<text class="sb" x="588.7" y="437.5" font-size="14" fill="#fff" textLength="103.0" lengthAdjust="spacingAndGlyphs">01 Advertising 16</text>
<text class="sb" x="888.2" y="438.8" font-size="14" fill="#1fe0ee" textLength="93.7" lengthAdjust="spacingAndGlyphs">301 points LPC</text>
<text class="sb" x="1035.0" y="438.8" font-size="14" fill="#14e614" textLength="109.0" lengthAdjust="spacingAndGlyphs">9344 points wave</text>
<path d="M639 523.5H719.500" stroke="#2ee02e"/><polygon points="719.5,523.0 720.5,523.0 721.5,523.0 722.5,523.0 723.5,523.0 724.5,523.0 725.5,523.0 726.5,523.0 727.5,523.0 728.5,523.0 729.5,523.0 730.5,523.0 731.5,523.0 732.5,523.0 733.5,523.0 734.5,523.0 735.5,523.0 736.5,523.0 737.5,523.0 738.5,523.0 739.5,523.0 740.5,523.0 741.5,523.0 742.5,523.0 743.5,523.0 744.5,523.0 745.5,523.0 746.5,523.0 747.5,523.0 748.5,523.0 749.5,522.7 750.5,522.9 751.5,522.6 752.5,522.2 753.5,522.1 754.5,521.7 755.5,521.5 756.5,521.4 757.5,522.2 758.5,521.0 759.5,521.0 760.5,521.7 761.5,521.6 762.5,521.2 763.5,520.3 764.5,519.8 765.5,520.8 766.5,519.3 767.5,519.4 768.5,519.4 769.5,520.4 770.5,518.8 771.5,518.0 772.5,517.3 773.5,519.2 774.5,517.1 775.5,519.6 776.5,519.0 777.5,517.0 778.5,515.6 779.5,518.5 780.5,518.5 781.5,515.3 782.5,515.4 783.5,513.8 784.5,514.2 785.5,519.5 786.5,516.9 787.5,515.5 788.5,515.6 789.5,515.6 790.5,520.2 791.5,518.9 792.5,518.1 793.5,519.4 794.5,518.8 795.5,517.8 796.5,517.5 797.5,514.2 798.5,515.3 799.5,518.0 800.5,512.0 801.5,514.5 802.5,510.7 803.5,507.3 804.5,510.4 805.5,513.9 806.5,507.5 807.5,506.2 808.5,506.2 809.5,510.8 810.5,507.1 811.5,516.1 812.5,514.3 813.5,508.1 814.5,516.1 815.5,517.7 816.5,512.1 817.5,517.7 818.5,516.5 819.5,517.2 820.5,513.4 821.5,510.0 822.5,516.2 823.5,515.8 824.5,513.0 825.5,515.6 826.5,514.6 827.5,514.3 828.5,515.9 829.5,516.0 830.5,512.3 831.5,516.8 832.5,517.5 833.5,518.1 834.5,513.3 835.5,516.2 836.5,517.4 837.5,516.7 838.5,516.5 839.5,513.7 840.5,512.8 841.5,514.6 842.5,517.2 843.5,519.1 844.5,519.7 845.5,513.8 846.5,517.8 847.5,510.7 848.5,511.8 849.5,512.5 850.5,508.6 851.5,511.0 852.5,508.7 853.5,514.3 854.5,510.3 855.5,515.3 856.5,514.1 857.5,512.3 858.5,511.4 859.5,515.1 860.5,518.2 861.5,517.5 862.5,513.4 863.5,518.9 864.5,511.2 865.5,515.4 866.5,514.3 867.5,516.0 868.5,516.9 869.5,515.5 870.5,516.2 871.5,516.1 872.5,509.0 873.5,508.4 874.5,512.0 875.5,512.6 876.5,508.7 877.5,509.7 878.5,509.0 879.5,510.9 880.5,510.8 881.5,511.1 882.5,511.3 883.5,514.6 884.5,513.8 885.5,512.8 886.5,513.3 887.5,513.8 888.5,513.1 889.5,515.2 890.5,514.9 891.5,516.2 892.5,516.3 893.5,519.6 894.5,516.9 895.5,515.2 896.5,516.1 897.5,513.4 898.5,513.8 899.5,518.8 900.5,517.2 901.5,517.4 902.5,515.2 903.5,514.6 904.5,510.4 905.5,515.8 906.5,510.4 907.5,507.3 908.5,506.8 909.5,506.7 910.5,515.2 911.5,511.1 912.5,507.4 913.5,507.5 914.5,507.0 915.5,505.4 916.5,509.6 917.5,511.7 918.5,505.0 919.5,509.6 920.5,508.6 921.5,514.9 922.5,513.9 923.5,509.8 924.5,509.7 925.5,509.0 926.5,511.3 927.5,507.6 928.5,505.2 929.5,506.1 930.5,505.7 931.5,508.4 932.5,507.2 933.5,510.4 934.5,514.6 935.5,508.4 936.5,512.8 937.5,516.4 938.5,511.6 939.5,516.5 940.5,517.1 941.5,514.8 942.5,514.0 943.5,517.3 944.5,516.3 945.5,518.0 946.5,515.1 947.5,513.8 948.5,515.1 949.5,514.6 950.5,509.5 951.5,516.9 952.5,513.1 953.5,509.5 954.5,515.0 955.5,511.1 956.5,513.9 957.5,509.4 958.5,508.7 959.5,511.0 960.5,512.7 961.5,512.8 962.5,516.2 963.5,515.5 964.5,510.6 965.5,513.8 966.5,514.7 967.5,517.4 968.5,513.4 969.5,518.7 970.5,519.9 971.5,519.2 972.5,517.3 973.5,517.5 974.5,518.8 975.5,520.0 976.5,518.5 977.5,517.6 978.5,519.9 979.5,519.4 980.5,514.2 981.5,513.7 982.5,512.0 983.5,514.4 984.5,516.3 985.5,513.7 986.5,512.3 987.5,513.9 988.5,517.5 989.5,513.5 990.5,515.8 991.5,517.9 992.5,518.4 993.5,517.6 994.5,513.0 995.5,512.1 996.5,510.8 997.5,518.0 998.5,511.8 999.5,513.8 1000.5,517.2 1001.5,511.7 1002.5,513.0 1003.5,513.5 1004.5,513.1 1005.5,517.0 1006.5,513.9 1007.5,518.2 1008.5,519.8 1009.5,517.3 1010.5,520.2 1011.5,518.2 1012.5,518.2 1013.5,520.1 1014.5,519.3 1015.5,521.4 1016.5,520.5 1017.5,521.5 1018.5,520.6 1019.5,522.0 1020.5,519.7 1021.5,522.1 1022.5,521.2 1023.5,522.2 1024.5,521.9 1025.5,520.5 1026.5,520.7 1027.5,520.8 1028.5,521.4 1029.5,521.7 1030.5,521.9 1031.5,521.4 1032.5,521.4 1033.5,521.8 1034.5,521.6 1035.5,521.1 1036.5,521.7 1037.5,520.6 1038.5,520.2 1039.5,520.9 1040.5,522.2 1041.5,521.9 1042.5,522.3 1043.5,521.5 1044.5,521.7 1045.5,521.0 1046.5,520.6 1047.5,522.0 1048.5,520.7 1049.5,520.8 1050.5,521.3 1051.5,521.8 1052.5,521.3 1053.5,521.1 1054.5,521.1 1055.5,522.2 1056.5,521.3 1057.5,521.5 1058.5,520.8 1059.5,521.7 1060.5,521.7 1061.5,522.3 1062.5,521.9 1063.5,520.7 1064.5,521.9 1065.5,520.9 1065.5,525.7 1064.5,525.1 1063.5,525.2 1062.5,525.4 1061.5,525.1 1060.5,525.3 1059.5,525.7 1058.5,525.5 1057.5,525.7 1056.5,526.3 1055.5,526.2 1054.5,525.1 1053.5,524.7 1052.5,525.1 1051.5,526.0 1050.5,526.1 1049.5,525.9 1048.5,525.2 1047.5,525.1 1046.5,525.3 1045.5,526.3 1044.5,525.0 1043.5,525.1 1042.5,525.1 1041.5,525.2 1040.5,526.1 1039.5,525.7 1038.5,525.5 1037.5,525.9 1036.5,526.8 1035.5,526.7 1034.5,525.4 1033.5,525.9 1032.5,525.2 1031.5,526.2 1030.5,525.6 1029.5,526.7 1028.5,524.9 1027.5,526.7 1026.5,525.2 1025.5,525.2 1024.5,524.7 1023.5,525.0 1022.5,525.8 1021.5,525.4 1020.5,525.8 1019.5,527.3 1018.5,527.8 1017.5,527.7 1016.5,527.2 1015.5,528.3 1014.5,526.8 1013.5,527.3 1012.5,526.0 1011.5,529.9 1010.5,529.2 1009.5,531.2 1008.5,531.3 1007.5,527.6 1006.5,529.0 1005.5,530.8 1004.5,530.3 1003.5,531.3 1002.5,530.5 1001.5,531.2 1000.5,530.7 999.5,533.9 998.5,535.3 997.5,530.7 996.5,532.2 995.5,531.8 994.5,529.8 993.5,528.0 992.5,530.7 991.5,528.2 990.5,530.6 989.5,530.9 988.5,530.1 987.5,531.8 986.5,536.6 985.5,536.5 984.5,535.4 983.5,535.9 982.5,528.8 981.5,529.6 980.5,528.4 979.5,527.7 978.5,529.7 977.5,531.7 976.5,530.7 975.5,526.7 974.5,528.6 973.5,526.6 972.5,527.5 971.5,526.7 970.5,531.6 969.5,528.6 968.5,532.3 967.5,529.5 966.5,531.5 965.5,530.2 964.5,532.7 963.5,537.6 962.5,538.1 961.5,539.0 960.5,534.7 959.5,534.4 958.5,538.1 957.5,530.4 956.5,535.8 955.5,534.3 954.5,537.2 953.5,530.9 952.5,533.9 951.5,537.4 950.5,533.3 949.5,536.6 948.5,531.0 947.5,529.0 946.5,530.9 945.5,531.6 944.5,529.7 943.5,531.0 942.5,528.2 941.5,530.3 940.5,530.5 939.5,535.0 938.5,532.7 937.5,531.4 936.5,530.1 935.5,537.3 934.5,537.1 933.5,537.2 932.5,541.3 931.5,536.4 930.5,533.2 929.5,531.7 928.5,537.1 927.5,537.1 926.5,533.4 925.5,537.8 924.5,539.5 923.5,536.5 922.5,541.8 921.5,541.5 920.5,537.5 919.5,540.1 918.5,532.4 917.5,532.7 916.5,534.9 915.5,539.3 914.5,537.4 913.5,539.6 912.5,540.0 911.5,531.0 910.5,539.1 909.5,532.6 908.5,539.3 907.5,534.4 906.5,535.2 905.5,532.2 904.5,539.2 903.5,530.3 902.5,529.3 901.5,531.1 900.5,528.7 899.5,530.0 898.5,528.9 897.5,530.4 896.5,533.3 895.5,530.4 894.5,534.7 893.5,530.8 892.5,532.1 891.5,529.5 890.5,529.7 889.5,530.3 888.5,528.8 887.5,533.9 886.5,531.3 885.5,530.4 884.5,534.3 883.5,529.7 882.5,531.8 881.5,536.7 880.5,536.5 879.5,535.8 878.5,535.3 877.5,534.6 876.5,538.8 875.5,535.8 874.5,531.0 873.5,537.4 872.5,538.5 871.5,532.4 870.5,532.2 869.5,532.2 868.5,533.0 867.5,535.4 866.5,529.3 865.5,531.0 864.5,535.6 863.5,535.7 862.5,527.8 861.5,528.7 860.5,530.7 859.5,528.5 858.5,528.5 857.5,535.1 856.5,531.2 855.5,537.5 854.5,537.9 853.5,536.2 852.5,530.0 851.5,534.3 850.5,538.4 849.5,530.8 848.5,531.1 847.5,534.8 846.5,533.7 845.5,529.1 844.5,529.7 843.5,532.9 842.5,528.3 841.5,527.7 840.5,527.5 839.5,534.0 838.5,527.7 837.5,534.5 836.5,533.5 835.5,528.4 834.5,534.4 833.5,528.1 832.5,529.5 831.5,535.0 830.5,528.0 829.5,532.0 828.5,529.2 827.5,529.2 826.5,536.5 825.5,534.0 824.5,534.5 823.5,538.4 822.5,532.8 821.5,537.8 820.5,534.3 819.5,532.2 818.5,533.7 817.5,528.4 816.5,528.5 815.5,532.7 814.5,532.2 813.5,531.7 812.5,538.7 811.5,533.7 810.5,535.2 809.5,533.1 808.5,537.4 807.5,533.1 806.5,532.2 805.5,540.7 804.5,539.7 803.5,538.7 802.5,538.0 801.5,535.4 800.5,530.2 799.5,532.0 798.5,532.9 797.5,532.8 796.5,528.8 795.5,531.7 794.5,531.0 793.5,528.3 792.5,531.6 791.5,528.5 790.5,529.8 789.5,529.9 788.5,528.3 787.5,531.2 786.5,530.2 785.5,527.5 784.5,531.0 783.5,532.7 782.5,529.3 781.5,528.0 780.5,532.4 779.5,531.9 778.5,528.8 777.5,527.8 776.5,528.8 775.5,530.4 774.5,527.2 773.5,528.1 772.5,529.3 771.5,526.8 770.5,528.1 769.5,528.1 768.5,528.1 767.5,527.8 766.5,525.9 765.5,526.0 764.5,527.2 763.5,526.7 762.5,526.4 761.5,525.0 760.5,526.4 759.5,525.9 758.5,525.4 757.5,525.3 756.5,524.9 755.5,524.8 754.5,525.3 753.5,524.6 752.5,525.0 751.5,524.7 750.5,524.5 749.5,524.4 748.5,524.1 747.5,524.0 746.5,524.0 745.5,524.0 744.5,524.0 743.5,524.0 742.5,524.0 741.5,524.0 740.5,524.0 739.5,524.0 738.5,524.0 737.5,524.0 736.5,524.0 735.5,524.0 734.5,524.0 733.5,524.0 732.5,524.0 731.5,524.0 730.5,524.0 729.5,524.0 728.5,524.0 727.5,524.0 726.5,524.0 725.5,524.0 724.5,524.0 723.5,524.0 722.5,524.0 721.5,524.0 720.5,524.0 719.5,524.0" fill="#0ff"/><polygon points="1065.5,520.8 1066.5,521.6 1067.5,520.7 1068.5,521.5 1069.5,521.0 1070.5,521.3 1071.5,522.0 1072.5,522.5 1073.5,521.7 1074.5,521.7 1075.5,521.9 1076.5,522.5 1077.5,523.0 1078.5,522.4 1079.5,522.9 1080.5,522.9 1080.5,524.1 1079.5,524.1 1078.5,524.4 1077.5,524.4 1076.5,524.3 1075.5,525.0 1074.5,525.2 1073.5,525.5 1072.5,524.5 1071.5,524.9 1070.5,524.9 1069.5,525.8 1068.5,525.0 1067.5,526.4 1066.5,525.1 1065.5,526.0" fill="#0f0"/><path d="M1081 523.5H1147.500" stroke="#fff" stroke-width="1.2"/>
<path d="M638.5 597.5V602" stroke="#c8c8c8"/>
<text class="sb" x="619.8" y="616.1" font-size="12" fill="#fff" textLength="46.0" lengthAdjust="spacingAndGlyphs">0.054sec</text>
<text class="sb" x="619.8" y="632.7" font-size="12" fill="#fff" textLength="24.6" lengthAdjust="spacingAndGlyphs">2402</text>
<path d="M765.8 597.5V602" stroke="#c8c8c8"/>
<text class="sb" x="747.0" y="616.1" font-size="12" fill="#fff" textLength="46.0" lengthAdjust="spacingAndGlyphs">0.100sec</text>
<text class="sb" x="747.0" y="632.7" font-size="12" fill="#fff" textLength="24.6" lengthAdjust="spacingAndGlyphs">4393</text>
<path d="M893.0 597.5V602" stroke="#c8c8c8"/>
<text class="sb" x="874.3" y="616.1" font-size="12" fill="#fff" textLength="46.0" lengthAdjust="spacingAndGlyphs">0.145sec</text>
<text class="sb" x="874.3" y="632.7" font-size="12" fill="#fff" textLength="24.6" lengthAdjust="spacingAndGlyphs">6383</text>
<path d="M1020.2 597.5V602" stroke="#c8c8c8"/>
<text class="sb" x="1001.5" y="616.1" font-size="12" fill="#fff" textLength="46.0" lengthAdjust="spacingAndGlyphs">0.190sec</text>
<text class="sb" x="1001.5" y="632.7" font-size="12" fill="#fff" textLength="24.6" lengthAdjust="spacingAndGlyphs">8373</text>
<path d="M1147.5 597.5V602" stroke="#c8c8c8"/>
<text class="sb" x="1100.5" y="616.1" font-size="12" fill="#fff" textLength="46.0" lengthAdjust="spacingAndGlyphs">0.235sec</text>
<text class="sb" x="1100.5" y="632.7" font-size="12" fill="#fff" textLength="30.7" lengthAdjust="spacingAndGlyphs">10364</text>
</svg>
<div class="b" style="left:1158px;top:20px;width:85px;height:21.5px;"></div>
<div class="b" style="left:1250px;top:20px;width:47px;height:21.5px;"></div>
<div class="p" style="left:1158px;top:47px;width:139px;height:17px;"></div>
<div style="left:1158px;top:69px;width:139px;height:105px;background:#fff;border:1px solid #828790"></div>
<div style="left:1159.3px;top:70.5px;width:125px;height:13px;background:#3390ff;overflow:hidden"><span style="left:1.5px;top:0;line-height:13px;font-size:10.75px;color:#fff;white-space:pre;-webkit-text-stroke:0.3px #fff">01______AUDIOTRACK_01</span></div>
<div style="left:1159.3px;top:83.5px;width:125px;height:13px;background:#7fffd4;overflow:hidden"><span style="left:1.5px;top:0;line-height:13px;font-size:10.75px;color:#000;white-space:pre;-webkit-text-stroke:0.3px #000">01______AUDIOTRACK_01</span></div>
<div style="left:1159.3px;top:96.5px;width:125px;height:13px;background:#7fffd4;overflow:hidden"><span style="left:1.5px;top:0;line-height:13px;font-size:10.75px;color:#000;white-space:pre;-webkit-text-stroke:0.3px #000">02______AUDIOTRACK_01</span></div>
<div style="left:1159.3px;top:109.5px;width:125px;height:13px;background:#7fffd4;overflow:hidden"><span style="left:1.5px;top:0;line-height:13px;font-size:10.75px;color:#000;white-space:pre;-webkit-text-stroke:0.3px #000">03______AUDIOTRACK_01</span></div>
<div style="left:1159.3px;top:122.5px;width:125px;height:13px;background:#7fffd4;overflow:hidden"><span style="left:1.5px;top:0;line-height:13px;font-size:10.75px;color:#000;white-space:pre;-webkit-text-stroke:0.3px #000">04______AUDIOTRACK_01</span></div>
<div style="left:1159.3px;top:135.5px;width:125px;height:13px;background:#7fffd4;overflow:hidden"><span style="left:1.5px;top:0;line-height:13px;font-size:10.75px;color:#000;white-space:pre;-webkit-text-stroke:0.3px #000">05______AUDIOTRACK_01</span></div>
<div style="left:1159.3px;top:148.5px;width:125px;height:13px;background:#7fffd4;overflow:hidden"><span style="left:1.5px;top:0;line-height:13px;font-size:10.75px;color:#000;white-space:pre;-webkit-text-stroke:0.3px #000">06______AUDIOTRACK_01</span></div>
<div style="left:1284.5px;top:70px;width:11.5px;height:92px;background:#f0f0f0"></div>
<div style="left:1285.5px;top:82px;width:9.5px;height:20px;background:#c1c1c1"></div>
<div style="left:1159px;top:161.5px;width:137px;height:11.5px;background:#f0f0f0"></div>
<div style="left:1171px;top:163px;width:73px;height:9px;background:#c1c1c1"></div>
<svg style="left:1159px;top:70px" width="138" height="104" viewBox="0 0 138 104" fill="none" stroke="#444" stroke-width="1.1"><path d="M128 8l3-3l3 3"/><path d="M128 85l3 3l3-3"/><path d="M9.5 94l-3 3.500l3 3.500"/><path d="M118 94l3 3.500l-3 3.500"/></svg>
<div class="p" style="left:1158px;top:180px;width:139px;height:15px;"></div>
<div class="b" style="left:1158px;top:202px;width:85px;height:23.5px;"></div>
<div class="b" style="left:1250px;top:202px;width:47px;height:23.5px;"></div>
<div class="b" style="left:1158px;top:232.5px;width:85px;height:22px;"></div>
<div class="b" style="left:1250px;top:232.5px;width:47px;height:22px;"></div>
<div class="b" style="left:1158px;top:260.5px;width:139px;height:22px;"></div>
<div class="b" style="left:1158px;top:289.5px;width:26px;height:17.5px;background:#ffa500;border-color:#b98a2e"></div>
<div class="b" style="left:1194px;top:289.5px;width:103px;height:18px;background:#ccc;border-color:#c6c6c6"></div>
<div class="p" style="left:1158px;top:313.5px;width:139px;height:15.8px;"></div>
<div style="left:1158px;top:334px;width:32px;height:189px;background:#000"></div>
<div style="left:1158.7px;top:340px;width:6.3px;height:1px;background:#ddd"></div><div style="left:1184px;top:340px;width:5.8px;height:1px;background:#ddd"></div>
<div style="left:1164.5px;top:502px;width:19.6px;height:21px;background:#0f0"></div>
<div class="b" style="left:1158px;top:547.5px;width:85px;height:21.1px;"></div>
<div class="b" style="left:1250px;top:547.5px;width:47px;height:21.1px;"></div>
<div class="b" style="left:1158px;top:575.3px;width:139px;height:22.3px;"></div>
<div class="b" style="left:4px;top:662.5px;width:141px;height:23.1px;"></div>
<div class="b" style="left:4px;top:695px;width:141px;height:22.6px;"></div>
<div class="b" style="left:4px;top:727.4px;width:141px;height:23.1px;"></div>
<div class="b" style="left:4px;top:760px;width:141px;height:22.5px;"></div>
<div style="left:149px;top:647px;width:706px;height:136.300px;background:#7fffd4"></div>
<div style="left:149px;top:647px;width:706px;height:17px;background:#fff"></div>
<div style="left:218px;top:647px;width:1px;height:17px;background:#e5e5e5"></div>
<div style="left:555px;top:647px;width:1px;height:17px;background:#e5e5e5"></div>
<div style="left:723.5px;top:647px;width:1px;height:17px;background:#e5e5e5"></div>
<div style="left:792px;top:647px;width:1px;height:17px;background:#e5e5e5"></div>
<div style="left:149px;top:695.3px;width:643px;height:15.2px;background:#f0f0f0"></div>
<div style="left:855px;top:647px;width:12px;height:138px;background:#f0f0f0"></div>
<div style="left:856px;top:757px;width:10.5px;height:11px;background:#c1c1c1"></div>
<svg style="left:856px;top:647px" width="11" height="138" viewBox="0 0 11 138" fill="none" stroke="#444" stroke-width="1.1"><path d="M2.5 9l3-3l3 3"/><path d="M2.5 129l3 3l3-3"/></svg>
<div class="p" style="left:965.6px;top:687px;width:94.4px;height:15.6px;"></div>
<div class="p" style="left:965.6px;top:711px;width:94.4px;height:15.4px;"></div>
<div class="p" style="left:965.6px;top:734.5px;width:94.4px;height:15.5px;"></div>
<div class="p" style="left:965.6px;top:758.2px;width:94.4px;height:15.2px;"></div>
<div class="p" style="left:1110px;top:734.2px;width:187px;height:16.5px;"></div>
<div class="b" style="left:1110px;top:760.7px;width:128.5px;height:21.5px;background:#ffa500;border-color:#c4c4c4;box-shadow:inset 0 0 0 1.5px #ececec"></div>
<div class="b" style="left:1253px;top:760.7px;width:44px;height:21.5px;"></div>
<svg style="left:0;top:0;pointer-events:none" width="1300" height="785" viewBox="0 0 1300 785" font-family="Liberation Sans,sans-serif">
<text x="15.8" y="10.6" font-size="8.6" fill="#111" textLength="57.3" lengthAdjust="spacingAndGlyphs">Recognition 2-d</text>
<text x="87.9" y="10.6" font-size="8.6" fill="#111" textLength="46.4" lengthAdjust="spacingAndGlyphs">( Version 2.0 )</text>
<text x="163.9" y="10.6" font-size="8.6" fill="#111" textLength="135.0" lengthAdjust="spacingAndGlyphs">[ C:¥SoundID_64_SetValues_Folder_01 ]</text>
<text class="tb" x="1167.0" y="33.4" font-size="9.2" textLength="66.4" lengthAdjust="spacingAndGlyphs">Wave Files inp.</text>
<text class="tb" x="1262.0" y="34.4" font-size="12.7" textLength="22.0" lengthAdjust="spacingAndGlyphs">Mic</text>
<text x="1204.5" y="60.1" font-size="12" textLength="46.8" lengthAdjust="spacingAndGlyphs" stroke="#000" stroke-width="0.3">WaveCD</text>
<text x="1227.5" y="192.0" font-size="12.5" text-anchor="middle">1</text>
<text class="tb" x="1170.0" y="217.0" font-size="10.5" fill="#1414d2" textLength="59.5" lengthAdjust="spacingAndGlyphs">Recognition</text>
<text class="tb" x="1261.6" y="217.0" font-size="10.5" fill="#1414d2" textLength="23.0" lengthAdjust="spacingAndGlyphs">R. all</text>
<text class="tb" x="1179.4" y="246.8" font-size="12.5" textLength="40.6" lengthAdjust="spacingAndGlyphs">Sound</text>
<text class="tb" x="1260.8" y="246.8" font-size="11.1" textLength="23.6" lengthAdjust="spacingAndGlyphs">Stop</text>
<text class="tb" x="1181.7" y="275.5" font-size="12.4" textLength="91.2" lengthAdjust="spacingAndGlyphs">Filtered Sound</text>
<text class="tb" x="1165.0" y="301.7" font-size="10.5" textLength="13.0" lengthAdjust="spacingAndGlyphs">DF</text>
<text class="tb" x="1218.0" y="302.3" font-size="10.5" fill="#a6a6a6" textLength="53.4" lengthAdjust="spacingAndGlyphs">Delete File</text>
<text y="326.5" font-size="12"><tspan x="1173.7" textLength="23" lengthAdjust="spacingAndGlyphs">Auto</tspan><tspan>  </tspan><tspan x="1206.5" textLength="23.7" lengthAdjust="spacingAndGlyphs">16bit</tspan><tspan>  </tspan><tspan x="1239.8" textLength="42.3" lengthAdjust="spacingAndGlyphs">44100Hz</tspan></text>
<text class="tb" x="1196" y="342.3" font-size="9.6"><tspan font-size="7" textLength="19.8" lengthAdjust="spacingAndGlyphs">90.0</tspan><tspan x="1216" textLength="35.3" lengthAdjust="spacingAndGlyphs"> degrees</tspan></text>
<text class="tb" x="1195.9" y="524.2" font-size="7" textLength="14.6" lengthAdjust="spacingAndGlyphs">0.0</text>
<text class="tb" x="1166.0" y="534.9" font-size="10.4" textLength="16.8" lengthAdjust="spacingAndGlyphs">GD</text>
<text class="tb" x="1172.0" y="561.6" font-size="11.5" textLength="54.3" lengthAdjust="spacingAndGlyphs">Sound std.</text>
<text class="tb" x="1260.8" y="561.6" font-size="11.3" textLength="23.4" lengthAdjust="spacingAndGlyphs">Stop</text>
<text class="tb" x="1177.7" y="590.0" font-size="11.3" textLength="97.4" lengthAdjust="spacingAndGlyphs">Filtered Sound std.</text>
<text class="tb" x="27.3" y="676.9" font-size="10.1" textLength="93.2" lengthAdjust="spacingAndGlyphs">Confirm (Sound inp.)</text>
<text class="tb" x="41.4" y="710.5" font-size="11.9" textLength="64.6" lengthAdjust="spacingAndGlyphs">Save Wave</text>
<text class="tb" x="38.0" y="742.7" font-size="11.5" textLength="71.3" lengthAdjust="spacingAndGlyphs">Export Excel</text>
<text class="tb" x="35.3" y="775.4" font-size="11.5" textLength="76.7" lengthAdjust="spacingAndGlyphs">Append Excel</text>
<text class="sb" x="220.7" y="659.3" font-size="10.8" textLength="65.3" lengthAdjust="spacingAndGlyphs">Input Pattern</text>
<text class="sb" x="423.2" y="659.3" font-size="10.8" textLength="53.4" lengthAdjust="spacingAndGlyphs">Time (sec)</text>
<text class="sb" x="559.5" y="659.3" font-size="10.8" textLength="152.0" lengthAdjust="spacingAndGlyphs">Most Similar Standard Pattern</text>
<text class="sb" x="763.0" y="659.3" font-size="10.8" text-anchor="middle">GD</text>
<clipPath id="tc"><rect x="149" y="647" width="706" height="136.300"/></clipPath><g clip-path="url(#tc)">
<text class="sb" x="212.3" y="675.5" font-size="10.8" text-anchor="end" textLength="17.7" lengthAdjust="spacingAndGlyphs">127</text>
<text class="sb" x="220.7" y="675.5" font-size="10.8" textLength="139.0" lengthAdjust="spacingAndGlyphs">01______AUDIOTRACK_01</text>
<text class="sb" x="423.2" y="675.5" font-size="10.8" textLength="32.5" lengthAdjust="spacingAndGlyphs">58.417</text>
<text class="sb" x="559.5" y="675.5" font-size="10.8" textLength="77.4" lengthAdjust="spacingAndGlyphs">Standard 4 - (3)</text>
<text class="sb" x="774.4" y="675.5" font-size="10.8" text-anchor="end" textLength="20.7" lengthAdjust="spacingAndGlyphs">8.33</text>
<text class="sb" x="212.3" y="691.0" font-size="10.8" text-anchor="end" textLength="17.7" lengthAdjust="spacingAndGlyphs">128</text>
<text class="sb" x="220.7" y="691.0" font-size="10.8" textLength="139.0" lengthAdjust="spacingAndGlyphs">01______AUDIOTRACK_01</text>
<text class="sb" x="423.2" y="691.0" font-size="10.8" textLength="32.5" lengthAdjust="spacingAndGlyphs">59.338</text>
<text class="sb" x="559.5" y="691.0" font-size="10.8" textLength="83.4" lengthAdjust="spacingAndGlyphs">Standard 1 - (10)</text>
<text class="sb" x="774.4" y="691.0" font-size="10.8" text-anchor="end" textLength="26.6" lengthAdjust="spacingAndGlyphs">12.46</text>
<text class="sb" x="212.3" y="706.5" font-size="10.8" text-anchor="end" textLength="17.7" lengthAdjust="spacingAndGlyphs">129</text>
<text class="sb" x="220.7" y="706.5" font-size="10.8" textLength="139.0" lengthAdjust="spacingAndGlyphs">01______AUDIOTRACK_01</text>
<text class="sb" x="423.2" y="706.5" font-size="10.8" textLength="32.5" lengthAdjust="spacingAndGlyphs">60.932</text>
<text class="sb" x="559.5" y="706.5" font-size="10.8" textLength="83.4" lengthAdjust="spacingAndGlyphs">Standard 1 - (10)</text>
<text class="sb" x="774.4" y="706.5" font-size="10.8" text-anchor="end" textLength="26.6" lengthAdjust="spacingAndGlyphs">10.29</text>
<text class="sb" x="212.3" y="722.0" font-size="10.8" text-anchor="end" textLength="17.7" lengthAdjust="spacingAndGlyphs">130</text>
<text class="sb" x="220.7" y="722.0" font-size="10.8" textLength="139.0" lengthAdjust="spacingAndGlyphs">01______AUDIOTRACK_01</text>
<text class="sb" x="423.2" y="722.0" font-size="10.8" textLength="32.5" lengthAdjust="spacingAndGlyphs">61.885</text>
<text class="sb" x="559.5" y="722.0" font-size="10.8" textLength="77.4" lengthAdjust="spacingAndGlyphs">Standard 1 - (6)</text>
<text class="sb" x="774.4" y="722.0" font-size="10.8" text-anchor="end" textLength="26.6" lengthAdjust="spacingAndGlyphs">14.88</text>
<text class="sb" x="212.3" y="737.5" font-size="10.8" text-anchor="end" textLength="17.7" lengthAdjust="spacingAndGlyphs">131</text>
<text class="sb" x="220.7" y="737.5" font-size="10.8" textLength="139.0" lengthAdjust="spacingAndGlyphs">01______AUDIOTRACK_01</text>
<text class="sb" x="423.2" y="737.5" font-size="10.8" textLength="32.5" lengthAdjust="spacingAndGlyphs">62.691</text>
<text class="sb" x="559.5" y="737.5" font-size="10.8" textLength="77.4" lengthAdjust="spacingAndGlyphs">Standard 1 - (7)</text>
<text class="sb" x="774.4" y="737.5" font-size="10.8" text-anchor="end" textLength="26.0" lengthAdjust="spacingAndGlyphs">11.06</text>
<text class="sb" x="212.3" y="753.0" font-size="10.8" text-anchor="end" textLength="17.7" lengthAdjust="spacingAndGlyphs">132</text>
<text class="sb" x="220.7" y="753.0" font-size="10.8" textLength="139.0" lengthAdjust="spacingAndGlyphs">01______AUDIOTRACK_01</text>
<text class="sb" x="423.2" y="753.0" font-size="10.8" textLength="32.5" lengthAdjust="spacingAndGlyphs">63.124</text>
<text class="sb" x="559.5" y="753.0" font-size="10.8" textLength="77.4" lengthAdjust="spacingAndGlyphs">Standard 1 - (6)</text>
<text class="sb" x="774.4" y="753.0" font-size="10.8" text-anchor="end" textLength="26.6" lengthAdjust="spacingAndGlyphs">20.28</text>
<text class="sb" x="212.3" y="768.5" font-size="10.8" text-anchor="end" textLength="17.7" lengthAdjust="spacingAndGlyphs">133</text>
<text class="sb" x="220.7" y="768.5" font-size="10.8" textLength="139.0" lengthAdjust="spacingAndGlyphs">01______AUDIOTRACK_01</text>
<text class="sb" x="423.2" y="768.5" font-size="10.8" textLength="32.5" lengthAdjust="spacingAndGlyphs">63.390</text>
<text class="sb" x="559.5" y="768.5" font-size="10.8" textLength="77.4" lengthAdjust="spacingAndGlyphs">Standard 1 - (9)</text>
<text class="sb" x="774.4" y="768.5" font-size="10.8" text-anchor="end" textLength="26.6" lengthAdjust="spacingAndGlyphs">14.96</text>
<text class="sb" x="212.3" y="784.0" font-size="10.8" text-anchor="end" textLength="17.7" lengthAdjust="spacingAndGlyphs">134</text>
<text class="sb" x="220.7" y="784.0" font-size="10.8" textLength="139.0" lengthAdjust="spacingAndGlyphs">01______AUDIOTRACK_01</text>
<text class="sb" x="423.2" y="784.0" font-size="10.8" textLength="32.5" lengthAdjust="spacingAndGlyphs">63.628</text>
<text class="sb" x="559.5" y="784.0" font-size="10.8" textLength="77.4" lengthAdjust="spacingAndGlyphs">Standard 1 - (9)</text>
<text class="sb" x="774.4" y="784.0" font-size="10.8" text-anchor="end" textLength="26.0" lengthAdjust="spacingAndGlyphs">11.84</text>
</g>
<text class="tb" x="873.3" y="698.2" font-size="11.1" textLength="84.1" lengthAdjust="spacingAndGlyphs">Matches/out of</text>
<text class="sb" x="991.0" y="698.7" font-size="10" textLength="43.3" lengthAdjust="spacingAndGlyphs">138 / 138</text>
<text class="tb" x="896.3" y="722.0" font-size="11.1" textLength="61.1" lengthAdjust="spacingAndGlyphs">Max Match</text>
<text class="sb" x="999.2" y="722.5" font-size="10" textLength="25.8" lengthAdjust="spacingAndGlyphs">25.81</text>
<text class="tb" x="1062.6" y="722.5" font-size="8.7" textLength="14.1" lengthAdjust="spacingAndGlyphs">GD</text>
<text class="tb" x="875.6" y="745.5" font-size="11.1" textLength="81.8" lengthAdjust="spacingAndGlyphs">Average Match</text>
<text class="sb" x="999.2" y="746.0" font-size="10" textLength="26.1" lengthAdjust="spacingAndGlyphs">12.68</text>
<text class="tb" x="1062.6" y="746.0" font-size="8.7" textLength="14.1" lengthAdjust="spacingAndGlyphs">GD</text>
<text class="tb" x="899.0" y="769.0" font-size="11.1" textLength="58.4" lengthAdjust="spacingAndGlyphs">Min Match</text>
<text class="sb" x="1002.5" y="769.5" font-size="10" textLength="20.0" lengthAdjust="spacingAndGlyphs">0.00</text>
<text class="tb" x="1062.6" y="769.5" font-size="8.7" textLength="14.1" lengthAdjust="spacingAndGlyphs">GD</text>
<text x="1129.7" y="747.3" font-size="13" textLength="146.8" lengthAdjust="spacingAndGlyphs" stroke="#000" stroke-width="0.25">BirdCallRecognition.prmx</text>
<text class="tb" x="1129.0" y="775.3" font-size="12.2" textLength="90.2" lengthAdjust="spacingAndGlyphs">Set Values Sub</text>
<text class="tb" x="1263.0" y="775.3" font-size="12.2" textLength="21.6" lengthAdjust="spacingAndGlyphs">End</text>
</svg>
</body></html>
